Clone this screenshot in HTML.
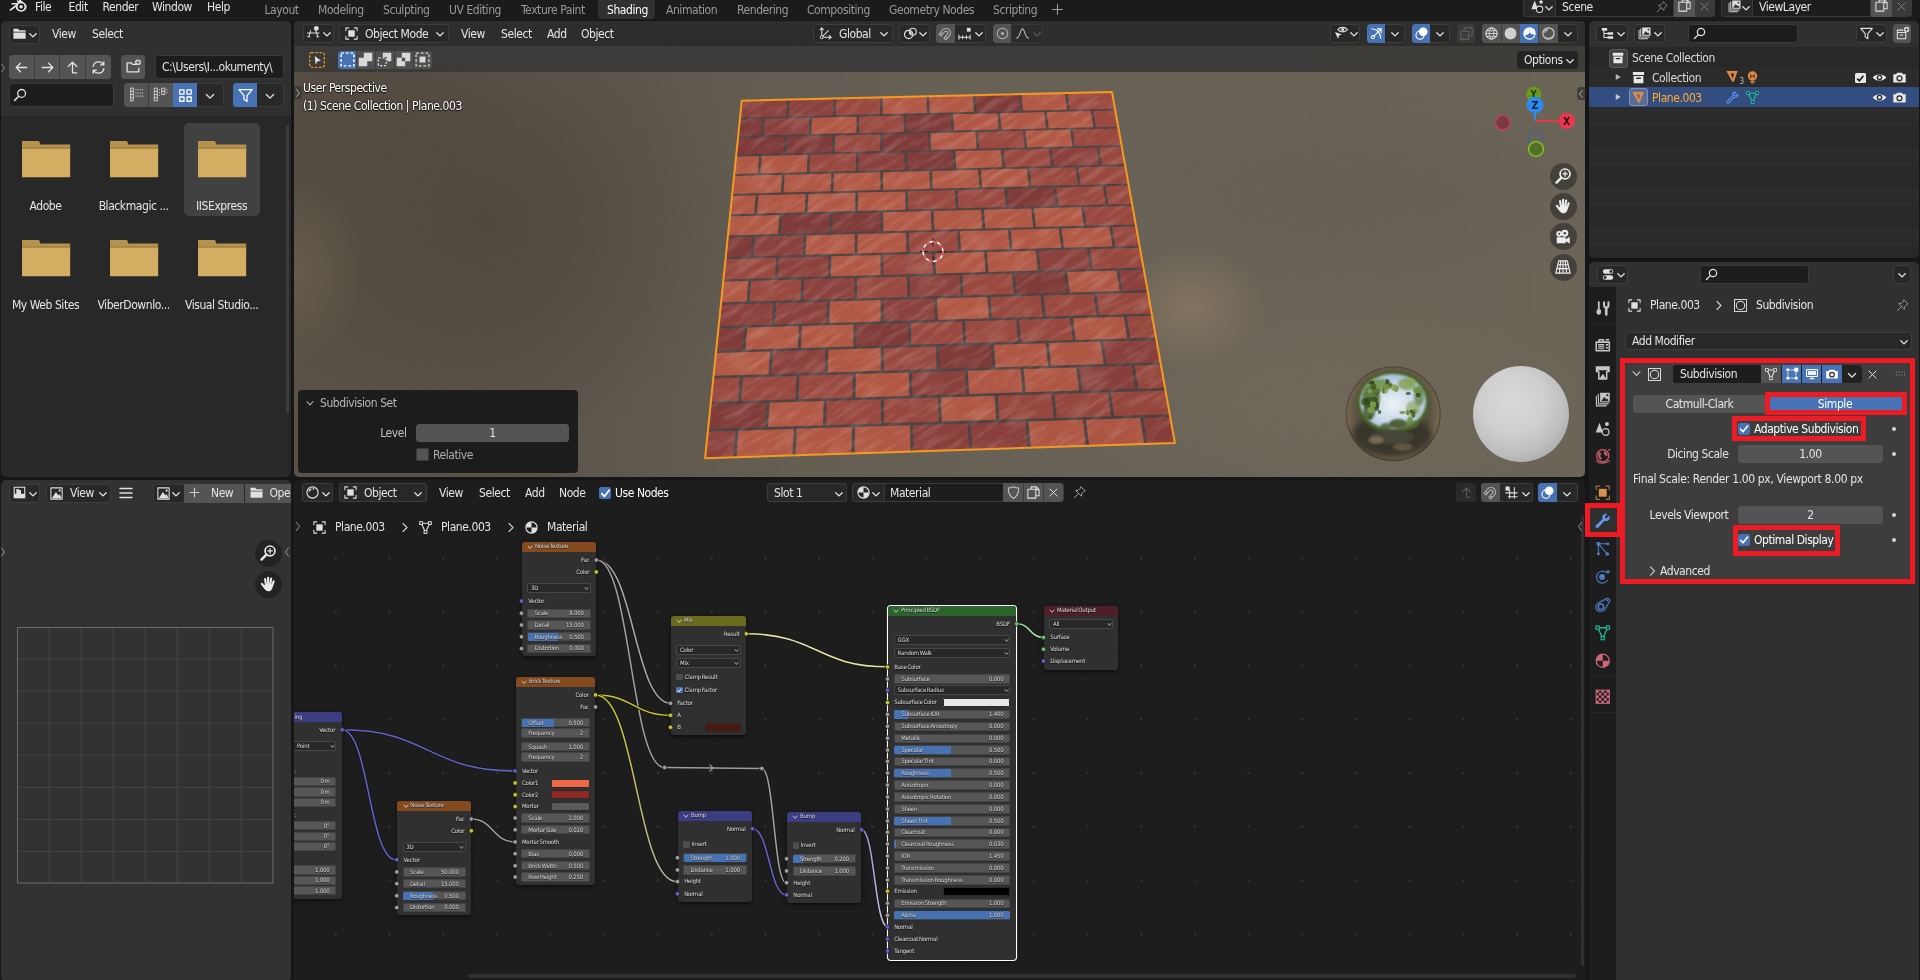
<!DOCTYPE html>
<html lang="en"><head><meta charset="utf-8"><title>Blender</title><style>
html,body{margin:0;padding:0;background:#161616;overflow:hidden}
body{width:1920px;height:980px;position:relative;font-family:"DejaVu Sans Condensed","DejaVu Sans","Liberation Sans",sans-serif;font-size:12px;color:#e4e4e4}
div{position:absolute;box-sizing:border-box}
.t{position:absolute;white-space:nowrap}
svg{overflow:visible}
</style></head><body>
<div id="root" style="left:0;top:0;width:1920px;height:980px;will-change:transform">
<div style="left:0.00px;top:0.00px;width:1920.00px;height:20.00px;background:#1b1b1b;"></div><svg style="position:absolute;left:7.50px;top:-4.30px;" width="19" height="19" viewBox="0 0 16 16"><path d="M8.9 2.2 L14.6 6.6 C16.2 8 16 10.6 14.4 12 C12.6 13.6 9.6 13.6 7.8 12 C6.9 11.2 6.5 10.2 6.6 9.2 L2.6 12.2 C1.8 12.8 0.8 11.8 1.7 11.1 L6.9 7.2 L3.6 7.2 C2.6 7.2 2.6 5.8 3.6 5.8 L8.6 5.8 L7.6 4.9 C6.8 4.2 7.9 3.2 8.6 3.8 L9.4 4.4 Z" fill="#e8e8e8" /><circle cx="11" cy="9.1" r="2.9" fill="#1b1b1b"/><circle cx="11" cy="9.1" r="1.5" fill="#e8e8e8"/></svg><div class="t" style="top:-1.00px;line-height:16.0px;font-size:12px;letter-spacing:-0.430px;color:#e6e6e6;white-space:nowrap;left:35.00px;">File</div><div class="t" style="top:-1.00px;line-height:16.0px;font-size:12px;letter-spacing:-0.430px;color:#e6e6e6;white-space:nowrap;left:68.50px;">Edit</div><div class="t" style="top:-1.00px;line-height:16.0px;font-size:12px;letter-spacing:-0.430px;color:#e6e6e6;white-space:nowrap;left:102.50px;">Render</div><div class="t" style="top:-1.00px;line-height:16.0px;font-size:12px;letter-spacing:-0.430px;color:#e6e6e6;white-space:nowrap;left:152.00px;">Window</div><div class="t" style="top:-1.00px;line-height:16.0px;font-size:12px;letter-spacing:-0.430px;color:#e6e6e6;white-space:nowrap;left:207.00px;">Help</div><div style="left:598.00px;top:-4.00px;width:57.00px;height:23.00px;background:#303030;border-radius:4px;"></div><div class="t" style="top:2.00px;line-height:16.0px;font-size:12px;letter-spacing:-0.430px;color:#999999;white-space:nowrap;left:264.50px;">Layout</div><div class="t" style="top:2.00px;line-height:16.0px;font-size:12px;letter-spacing:-0.430px;color:#999999;white-space:nowrap;left:318.00px;">Modeling</div><div class="t" style="top:2.00px;line-height:16.0px;font-size:12px;letter-spacing:-0.430px;color:#999999;white-space:nowrap;left:383.00px;">Sculpting</div><div class="t" style="top:2.00px;line-height:16.0px;font-size:12px;letter-spacing:-0.430px;color:#999999;white-space:nowrap;left:449.00px;">UV Editing</div><div class="t" style="top:2.00px;line-height:16.0px;font-size:12px;letter-spacing:-0.430px;color:#999999;white-space:nowrap;left:521.00px;">Texture Paint</div><div class="t" style="top:2.00px;line-height:16.0px;font-size:12px;letter-spacing:-0.430px;color:#ffffff;white-space:nowrap;left:607.00px;">Shading</div><div class="t" style="top:2.00px;line-height:16.0px;font-size:12px;letter-spacing:-0.430px;color:#999999;white-space:nowrap;left:666.00px;">Animation</div><div class="t" style="top:2.00px;line-height:16.0px;font-size:12px;letter-spacing:-0.430px;color:#999999;white-space:nowrap;left:737.00px;">Rendering</div><div class="t" style="top:2.00px;line-height:16.0px;font-size:12px;letter-spacing:-0.430px;color:#999999;white-space:nowrap;left:807.00px;">Compositing</div><div class="t" style="top:2.00px;line-height:16.0px;font-size:12px;letter-spacing:-0.430px;color:#999999;white-space:nowrap;left:889.00px;">Geometry Nodes</div><div class="t" style="top:2.00px;line-height:16.0px;font-size:12px;letter-spacing:-0.430px;color:#999999;white-space:nowrap;left:993.00px;">Scripting</div><svg style="position:absolute;left:1051.00px;top:3.00px;" width="13" height="13" viewBox="0 0 13 13"><path d="M6.5 1.5 V11.5 M1.5 6.5 H11.5" fill="none" stroke="#a0a0a0" stroke-width="1.1" stroke-linecap="round" stroke-linejoin="round" /></svg><div style="left:1523.00px;top:-3.00px;width:191.50px;height:19.50px;background:#282828;border-radius:4px;box-shadow:inset 0 0 0 1px #3a3a3a;"></div><div style="left:1555.00px;top:-3.00px;width:119.00px;height:19.50px;background:#1d1d1d;box-shadow:inset 0 0 0 1px #3a3a3a;"></div><div style="left:1674.00px;top:-3.00px;width:20.50px;height:19.50px;background:#545454;"></div><div style="left:1694.50px;top:-3.00px;width:20.00px;height:19.50px;background:#3a3a3a;border-radius:0 4px 4px 0;"></div><svg style="position:absolute;left:1529.50px;top:-1.30px;" width="15" height="15" viewBox="0 0 16 16"><path d="M5 1.6 L8.6 10.8 H1.4 Z" fill="#dddddd" /><circle cx="10.2" cy="11" r="3.4" fill="#1b1b1b" stroke="#dddddd" stroke-width="1.1"/><circle cx="11.8" cy="3.2" r="1.9" fill="#dddddd"/></svg><svg style="position:absolute;left:1543.50px;top:3.00px;" width="10" height="10" viewBox="0 0 10 10"><path d="M1.7999999999999998 3.6999999999999997 L5 6.8999999999999995 L8.2 3.6999999999999997" fill="none" stroke="#e4e4e4" stroke-width="1.3" stroke-linecap="round" stroke-linejoin="round"/></svg><div class="t" style="top:-1.00px;line-height:16.0px;font-size:12px;letter-spacing:-0.430px;color:#e4e4e4;white-space:nowrap;left:1562.00px;">Scene</div><svg style="position:absolute;left:1655.00px;top:-0.40px;" width="14" height="14" viewBox="0 0 16 16"><path d="M9.6 2 L14 6.4 L12.6 7 L10.4 9.2 L10 12 L4 6 L6.8 5.6 L9 3.4 Z M7 9 L2.4 13.6" fill="none" stroke="#8a8a8a" stroke-width="1" stroke-linecap="round" stroke-linejoin="round" /></svg><svg style="position:absolute;left:1676.50px;top:-1.90px;" width="15" height="15" viewBox="0 0 16 16"><path d="M5.6 4.6 V2 H11 L14 5 V11.4 H10.4 M11 2 V5 H14 M2 4.6 H10.4 V14 H2 Z" fill="none" stroke="#dddddd" stroke-width="1.1" stroke-linecap="round" stroke-linejoin="round" /></svg><svg style="position:absolute;left:1698.00px;top:0.10px;" width="13" height="13" viewBox="0 0 16 16"><path d="M3.6 3.6 L12.4 12.4 M12.4 3.6 L3.6 12.4" fill="none" stroke="#808080" stroke-width="1.2" stroke-linecap="round" stroke-linejoin="round" /></svg><div style="left:1720.50px;top:-3.00px;width:191.00px;height:19.50px;background:#282828;border-radius:4px;box-shadow:inset 0 0 0 1px #3a3a3a;"></div><div style="left:1752.00px;top:-3.00px;width:119.00px;height:19.50px;background:#1d1d1d;box-shadow:inset 0 0 0 1px #3a3a3a;"></div><div style="left:1871.00px;top:-3.00px;width:20.50px;height:19.50px;background:#545454;"></div><div style="left:1891.50px;top:-3.00px;width:20.00px;height:19.50px;background:#3a3a3a;border-radius:0 4px 4px 0;"></div><svg style="position:absolute;left:1726.50px;top:-1.30px;" width="15" height="15" viewBox="0 0 16 16"><path d="M2.2 4.6 V13.6 H11.2 M4 3 V11.8 H13" fill="none" stroke="#dddddd" stroke-width="1" stroke-linecap="round" stroke-linejoin="round" /><path d="M5.6 1.6 h8.8 v8.8 h-8.8z" fill="#dddddd" /><path d="M6.6 9.4 L9.4 5.2 L11 7.6 L11.8 6.6 L13.6 9.4Z" fill="#282828" /><circle cx="12.2" cy="3.8" r="1" fill="#282828"/></svg><svg style="position:absolute;left:1740.50px;top:3.00px;" width="10" height="10" viewBox="0 0 10 10"><path d="M1.7999999999999998 3.6999999999999997 L5 6.8999999999999995 L8.2 3.6999999999999997" fill="none" stroke="#e4e4e4" stroke-width="1.3" stroke-linecap="round" stroke-linejoin="round"/></svg><div class="t" style="top:-1.00px;line-height:16.0px;font-size:12px;letter-spacing:-0.430px;color:#e4e4e4;white-space:nowrap;left:1759.00px;">ViewLayer</div><svg style="position:absolute;left:1873.50px;top:-1.90px;" width="15" height="15" viewBox="0 0 16 16"><path d="M5.6 4.6 V2 H11 L14 5 V11.4 H10.4 M11 2 V5 H14 M2 4.6 H10.4 V14 H2 Z" fill="none" stroke="#dddddd" stroke-width="1.1" stroke-linecap="round" stroke-linejoin="round" /></svg><svg style="position:absolute;left:1895.00px;top:0.10px;" width="13" height="13" viewBox="0 0 16 16"><path d="M3.6 3.6 L12.4 12.4 M12.4 3.6 L3.6 12.4" fill="none" stroke="#808080" stroke-width="1.2" stroke-linecap="round" stroke-linejoin="round" /></svg>
<div style="left:1.00px;top:21.00px;width:290.00px;height:456.00px;background:#282828;border-radius:5px;"></div><div style="left:1.00px;top:21.00px;width:290.00px;height:95.00px;background:#303030;border-radius:5px 5px 0 0;"></div><div style="left:8.50px;top:24.50px;width:31.00px;height:19.00px;background:#282828;border-radius:3.5px;box-shadow:inset 0 0 0 1px #3d3d3d;"></div><svg style="position:absolute;left:12.00px;top:26.10px;" width="15" height="15" viewBox="0 0 16 16"><path d="M1.5 3 h5 l1.2 1.6 h6.8 v1.4 h-13 z M1.5 7 h13 v6.5 h-13 z" fill="#e0e0e0" /></svg><svg style="position:absolute;left:28.00px;top:29.50px;" width="10" height="10" viewBox="0 0 10 10"><path d="M1.7999999999999998 3.6999999999999997 L5 6.8999999999999995 L8.2 3.6999999999999997" fill="none" stroke="#e4e4e4" stroke-width="1.3" stroke-linecap="round" stroke-linejoin="round"/></svg><div class="t" style="top:26.10px;line-height:16.0px;font-size:12px;letter-spacing:-0.430px;color:#e4e4e4;white-space:nowrap;left:52.00px;">View</div><div class="t" style="top:26.10px;line-height:16.0px;font-size:12px;letter-spacing:-0.430px;color:#e4e4e4;white-space:nowrap;left:92.00px;">Select</div><div style="left:8.70px;top:54.70px;width:102.40px;height:24.40px;background:#545454;border-radius:3.5px;"></div><svg style="position:absolute;left:13.00px;top:58.50px;" width="17" height="17" viewBox="0 0 16 16"><path d="M13 8 H3.2 M7 4 L3 8 L7 12" fill="none" stroke="#e4e4e4" stroke-width="1.2" stroke-linecap="round" stroke-linejoin="round" /></svg><svg style="position:absolute;left:38.60px;top:58.50px;" width="17" height="17" viewBox="0 0 16 16"><path d="M3 8 H12.8 M9 4 L13 8 L9 12" fill="none" stroke="#e4e4e4" stroke-width="1.2" stroke-linecap="round" stroke-linejoin="round" /></svg><div style="left:33.80px;top:54.70px;width:1.00px;height:24.40px;background:#3d3d3d;"></div><svg style="position:absolute;left:64.20px;top:58.50px;" width="17" height="17" viewBox="0 0 16 16"><path d="M8 13 V3.2 M4 7 L8 3 L12 7 M8 13 H12" fill="none" stroke="#e4e4e4" stroke-width="1.2" stroke-linecap="round" stroke-linejoin="round" /></svg><div style="left:59.40px;top:54.70px;width:1.00px;height:24.40px;background:#3d3d3d;"></div><svg style="position:absolute;left:89.80px;top:58.50px;" width="17" height="17" viewBox="0 0 16 16"><path d="M3 7 A5.2 5.2 0 0 1 12.6 5.2 M13 2.6 V5.6 H10 M13 9 A5.2 5.2 0 0 1 3.4 10.8 M3 13.4 V10.4 H6" fill="none" stroke="#e4e4e4" stroke-width="1.2" stroke-linecap="round" stroke-linejoin="round" /></svg><div style="left:85.00px;top:54.70px;width:1.00px;height:24.40px;background:#3d3d3d;"></div><div style="left:120.90px;top:54.70px;width:24.20px;height:24.40px;background:#545454;border-radius:3.5px;"></div><svg style="position:absolute;left:124.50px;top:58.10px;" width="17" height="17" viewBox="0 0 16 16"><path d="M2 13 V4.5 H6 L7 6 H10.5 M2 13 H13 V9.5" fill="none" stroke="#e4e4e4" stroke-width="1.2" stroke-linecap="round" stroke-linejoin="round" /><circle cx="12.2" cy="4" r="2.7" fill="#e4e4e4"/><path d="M12.2 2.6 V5.4 M10.8 4 H13.6" fill="none" stroke="#545454" stroke-width="1" stroke-linecap="round" stroke-linejoin="round" /></svg><div style="left:154.50px;top:54.70px;width:129.20px;height:24.40px;background:#1d1d1d;border-radius:3.5px;box-shadow:inset 0 0 0 1px #3a3a3a;"></div><div class="t" style="top:59.30px;line-height:16.0px;font-size:12px;letter-spacing:-0.430px;color:#e4e4e4;white-space:nowrap;left:162.00px;">C:\Users\I...okumenty\</div><div style="left:8.70px;top:82.80px;width:105.80px;height:24.40px;background:#1d1d1d;border-radius:3.5px;box-shadow:inset 0 0 0 1px #3a3a3a;"></div><svg style="position:absolute;left:12.00px;top:87.00px;" width="16" height="16" viewBox="0 0 16 16"><circle cx="9.6" cy="6.4" r="3.9" fill="none" stroke="#e0e0e0" stroke-width="1.3"/><path d="M6.8 9.2 L2.6 13.4" fill="none" stroke="#e0e0e0" stroke-width="1.5" stroke-linecap="round" stroke-linejoin="round" /></svg><div style="left:123.70px;top:82.80px;width:100.00px;height:24.40px;background:#282828;border-radius:3.5px;box-shadow:inset 0 0 0 1px #3a3a3a;"></div><div style="left:123.70px;top:82.80px;width:49.00px;height:24.40px;background:#545454;border-radius:3.5px 0 0 3.5px;"></div><div style="left:148.00px;top:82.80px;width:1.00px;height:24.40px;background:#3d3d3d;"></div><div style="left:172.70px;top:82.80px;width:24.50px;height:24.40px;background:#4772b3;"></div><svg style="position:absolute;left:127.50px;top:86.10px;" width="17" height="17" viewBox="0 0 16 16"><path d="M2.5 2 V14 M2.5 2 H5 V14 H2.5 M2.5 5 H5 M2.5 8 H5 M2.5 11 H5" fill="none" stroke="#d0d0d0" stroke-width="0.9" stroke-linecap="round" stroke-linejoin="round" /><path d="M7 3.5 H14.5" stroke="#d0d0d0" stroke-width="1" stroke-dasharray="1 1"/><path d="M7 6.5 H14.5" stroke="#d0d0d0" stroke-width="1" stroke-dasharray="1 1"/><path d="M7 9.5 H14.5" stroke="#d0d0d0" stroke-width="1" stroke-dasharray="1 1"/></svg><svg style="position:absolute;left:152.00px;top:86.10px;" width="17" height="17" viewBox="0 0 16 16"><path d="M2.5 2 H5 V14 H2.5 Z M2.5 5 H5 M2.5 8 H5 M2.5 11 H5" fill="none" stroke="#d0d0d0" stroke-width="0.9" stroke-linecap="round" stroke-linejoin="round" /><path d="M9.5 2 H12 V8 H9.5 Z M9.5 5 H12" fill="none" stroke="#d0d0d0" stroke-width="0.9" stroke-linecap="round" stroke-linejoin="round" /><path d="M7 3 V10 M14 3 V7" stroke="#d0d0d0" stroke-width="1" stroke-dasharray="1 1.6"/></svg><svg style="position:absolute;left:176.50px;top:86.50px;" width="17" height="17" viewBox="0 0 16 16"><path d="M2.6 2.6 h4 v4 h-4 z M9.4 2.6 h4 v4 h-4 z M2.6 9.4 h4 v4 h-4 z M9.4 9.4 h4 v4 h-4 z" fill="none" stroke="#ffffff" stroke-width="1.2" stroke-linecap="round" stroke-linejoin="round" /></svg><svg style="position:absolute;left:205.30px;top:91.00px;" width="10" height="10" viewBox="0 0 10 10"><path d="M1.4 3.5 L5 7.1 L8.6 3.5" fill="none" stroke="#e4e4e4" stroke-width="1.3" stroke-linecap="round" stroke-linejoin="round"/></svg><div style="left:232.80px;top:82.80px;width:50.90px;height:24.40px;background:#282828;border-radius:3.5px;box-shadow:inset 0 0 0 1px #3a3a3a;"></div><div style="left:232.80px;top:82.80px;width:24.40px;height:24.40px;background:#4772b3;border-radius:3.5px 0 0 3.5px;"></div><svg style="position:absolute;left:236.50px;top:86.50px;" width="17" height="17" viewBox="0 0 16 16"><path d="M1.8 2.5 H14.2 L9.4 8.2 V13.6 L6.6 11.6 V8.2 Z" fill="none" stroke="#ffffff" stroke-width="1.2" stroke-linecap="round" stroke-linejoin="round" /></svg><svg style="position:absolute;left:265.30px;top:91.00px;" width="10" height="10" viewBox="0 0 10 10"><path d="M1.4 3.5 L5 7.1 L8.6 3.5" fill="none" stroke="#e4e4e4" stroke-width="1.3" stroke-linecap="round" stroke-linejoin="round"/></svg><svg style="position:absolute;left:0.00px;top:62.00px;" width="6" height="12" viewBox="0 0 6 12"><path d="M1.5 2 L4.5 6 L1.5 10" fill="none" stroke="#8a8a8a" stroke-width="1" stroke-linecap="round" stroke-linejoin="round" /></svg><div style="left:183.80px;top:122.90px;width:76.20px;height:93.40px;background:#414141;border-radius:5px;"></div><div style="left:286.20px;top:125.00px;width:3.00px;height:288.00px;background:#3c3c3c;border-radius:1.5px;"></div><svg style="position:absolute;left:21.90px;top:140.70px;" width="48.2" height="36.2" viewBox="0 0 48.2 36.2"><path d="M0 0 H17 L18.5 3.6 H48.2 V11 H0 Z" fill="#b5934d"/><path d="M0 7.6 H48.2 V36.2 H0 Z" fill="#d3ad62"/><path d="M0 7 H48.2" stroke="#8e733c" stroke-width="0.9"/></svg><div class="t" style="top:198.00px;line-height:16.0px;font-size:12px;letter-spacing:-0.430px;color:#e6e6e6;white-space:nowrap;left:-4.50px;width:100px;text-align:center;">Adobe</div><svg style="position:absolute;left:109.95px;top:140.70px;" width="48.2" height="36.2" viewBox="0 0 48.2 36.2"><path d="M0 0 H17 L18.5 3.6 H48.2 V11 H0 Z" fill="#b5934d"/><path d="M0 7.6 H48.2 V36.2 H0 Z" fill="#d3ad62"/><path d="M0 7 H48.2" stroke="#8e733c" stroke-width="0.9"/></svg><div class="t" style="top:198.00px;line-height:16.0px;font-size:12px;letter-spacing:-0.430px;color:#e6e6e6;white-space:nowrap;left:83.55px;width:100px;text-align:center;">Blackmagic ...</div><svg style="position:absolute;left:198.00px;top:140.70px;" width="48.2" height="36.2" viewBox="0 0 48.2 36.2"><path d="M0 0 H17 L18.5 3.6 H48.2 V11 H0 Z" fill="#b5934d"/><path d="M0 7.6 H48.2 V36.2 H0 Z" fill="#d3ad62"/><path d="M0 7 H48.2" stroke="#8e733c" stroke-width="0.9"/></svg><div class="t" style="top:198.00px;line-height:16.0px;font-size:12px;letter-spacing:-0.430px;color:#e6e6e6;white-space:nowrap;left:171.60px;width:100px;text-align:center;">IISExpress</div><svg style="position:absolute;left:21.90px;top:239.70px;" width="48.2" height="36.2" viewBox="0 0 48.2 36.2"><path d="M0 0 H17 L18.5 3.6 H48.2 V11 H0 Z" fill="#b5934d"/><path d="M0 7.6 H48.2 V36.2 H0 Z" fill="#d3ad62"/><path d="M0 7 H48.2" stroke="#8e733c" stroke-width="0.9"/></svg><div class="t" style="top:297.00px;line-height:16.0px;font-size:12px;letter-spacing:-0.430px;color:#e6e6e6;white-space:nowrap;left:-4.50px;width:100px;text-align:center;">My Web Sites</div><svg style="position:absolute;left:109.95px;top:239.70px;" width="48.2" height="36.2" viewBox="0 0 48.2 36.2"><path d="M0 0 H17 L18.5 3.6 H48.2 V11 H0 Z" fill="#b5934d"/><path d="M0 7.6 H48.2 V36.2 H0 Z" fill="#d3ad62"/><path d="M0 7 H48.2" stroke="#8e733c" stroke-width="0.9"/></svg><div class="t" style="top:297.00px;line-height:16.0px;font-size:12px;letter-spacing:-0.430px;color:#e6e6e6;white-space:nowrap;left:83.55px;width:100px;text-align:center;">ViberDownlo...</div><svg style="position:absolute;left:198.00px;top:239.70px;" width="48.2" height="36.2" viewBox="0 0 48.2 36.2"><path d="M0 0 H17 L18.5 3.6 H48.2 V11 H0 Z" fill="#b5934d"/><path d="M0 7.6 H48.2 V36.2 H0 Z" fill="#d3ad62"/><path d="M0 7 H48.2" stroke="#8e733c" stroke-width="0.9"/></svg><div class="t" style="top:297.00px;line-height:16.0px;font-size:12px;letter-spacing:-0.430px;color:#e6e6e6;white-space:nowrap;left:171.60px;width:100px;text-align:center;">Visual Studio...</div>
<div style="left:1.00px;top:480.20px;width:290.00px;height:500.60px;background:#323232;border-radius:5px;"></div><div style="left:8.50px;top:483.50px;width:31.00px;height:19.00px;background:#282828;border-radius:3.5px;box-shadow:inset 0 0 0 1px #3d3d3d;"></div><svg style="position:absolute;left:12.00px;top:485.10px;" width="15" height="15" viewBox="0 0 16 16"><path d="M1.8 1.8 h12.4 v12.4 h-12.4z" fill="#e0e0e0" /><path d="M3 3 h10 v6.4 h-3.4 v-4 h-3.2 v4 h-3.4z" fill="#282828" /><path d="M4.6 4.4 h3 v6 h-3z" fill="#e0e0e0" /></svg><svg style="position:absolute;left:28.00px;top:489.00px;" width="10" height="10" viewBox="0 0 10 10"><path d="M1.7999999999999998 3.6999999999999997 L5 6.8999999999999995 L8.2 3.6999999999999997" fill="none" stroke="#e4e4e4" stroke-width="1.3" stroke-linecap="round" stroke-linejoin="round"/></svg><div style="left:45.50px;top:483.50px;width:65.00px;height:19.00px;background:#282828;border-radius:3.5px;box-shadow:inset 0 0 0 1px #3d3d3d;"></div><svg style="position:absolute;left:49.00px;top:485.50px;" width="15" height="15" viewBox="0 0 16 16"><path d="M2 2 H14 V14 H2 Z" fill="none" stroke="#e0e0e0" stroke-width="1.1" stroke-linecap="round" stroke-linejoin="round" /><path d="M3 13 L7.4 6.4 L10 10 L11.2 8.6 L13.4 13Z" fill="#e0e0e0" /><circle cx="11.4" cy="4.8" r="1.2" fill="#e0e0e0"/></svg><div class="t" style="top:485.20px;line-height:16.0px;font-size:12px;letter-spacing:-0.430px;color:#e4e4e4;white-space:nowrap;left:70.00px;">View</div><svg style="position:absolute;left:98.00px;top:489.00px;" width="10" height="10" viewBox="0 0 10 10"><path d="M1.7999999999999998 3.6999999999999997 L5 6.8999999999999995 L8.2 3.6999999999999997" fill="none" stroke="#e4e4e4" stroke-width="1.3" stroke-linecap="round" stroke-linejoin="round"/></svg><svg style="position:absolute;left:118.00px;top:485.00px;" width="16" height="16" viewBox="0 0 16 16"><path d="M2 3.6 H14 M2 8 H14 M2 12.4 H14" fill="none" stroke="#e0e0e0" stroke-width="1.5" stroke-linecap="round" stroke-linejoin="round" /></svg><div style="position:absolute;left:0;top:480px;width:291px;height:30px;overflow:hidden"><div style="left:152.50px;top:3.50px;width:150.00px;height:19.00px;background:#282828;border-radius:3.5px;box-shadow:inset 0 0 0 1px #3a3a3a;"></div><div style="left:184.00px;top:3.50px;width:59.50px;height:19.00px;background:#545454;"></div><div style="left:244.50px;top:3.50px;width:60.00px;height:19.00px;background:#545454;"></div><svg style="position:absolute;left:155.50px;top:5.50px;" width="15" height="15" viewBox="0 0 16 16"><path d="M2 2 H14 V14 H2 Z" fill="none" stroke="#e0e0e0" stroke-width="1.1" stroke-linecap="round" stroke-linejoin="round" /><path d="M3 13 L7.4 6.4 L10 10 L11.2 8.6 L13.4 13Z" fill="#e0e0e0" /><circle cx="11.4" cy="4.8" r="1.2" fill="#e0e0e0"/></svg><svg style="position:absolute;left:171.00px;top:9.00px;" width="10" height="10" viewBox="0 0 10 10"><path d="M1.7999999999999998 3.6999999999999997 L5 6.8999999999999995 L8.2 3.6999999999999997" fill="none" stroke="#e4e4e4" stroke-width="1.3" stroke-linecap="round" stroke-linejoin="round"/></svg><svg style="position:absolute;left:188.00px;top:6.30px;" width="13" height="13" viewBox="0 0 16 16"><path d="M8 2.6 V13.4 M2.6 8 H13.4" fill="none" stroke="#e0e0e0" stroke-width="1.1" stroke-linecap="round" stroke-linejoin="round" /></svg><div class="t" style="top:5.20px;line-height:16.0px;font-size:12px;letter-spacing:-0.430px;color:#e4e4e4;white-space:nowrap;left:211.00px;">New</div><svg style="position:absolute;left:248.50px;top:5.30px;" width="15" height="15" viewBox="0 0 16 16"><path d="M1.6 2.8 h5.2 l1.2 1.6 h6.4 v1.6 h-12.8z M1.6 6.8 h12.8 v6.8 h-12.8z" fill="#e0e0e0" /></svg><div class="t" style="top:5.20px;line-height:16.0px;font-size:12px;letter-spacing:-0.430px;color:#e4e4e4;white-space:nowrap;left:269.50px;">Open</div></div><div style="left:254.50px;top:539.50px;width:27.00px;height:27.00px;background:#232323;border-radius:14px;"></div><svg style="position:absolute;left:259.00px;top:544.00px;" width="18" height="18" viewBox="0 0 16 16"><circle cx="9.8" cy="6.2" r="4.4" fill="none" stroke="#e8e8e8" stroke-width="1.5"/><path d="M6.6 9.4 L2.2 13.8" fill="none" stroke="#e8e8e8" stroke-width="2.2" stroke-linecap="round" stroke-linejoin="round" /><path d="M9.8 4.2 V8.2 M7.8 6.2 H11.8" fill="none" stroke="#e8e8e8" stroke-width="1.1" stroke-linecap="round" stroke-linejoin="round" /></svg><div style="left:254.50px;top:570.50px;width:27.00px;height:27.00px;background:#232323;border-radius:14px;"></div><svg style="position:absolute;left:259.00px;top:575.00px;" width="18" height="18" viewBox="0 0 16 16"><path d="M5.4 3.6 L6.3 9 M8.1 2.4 L8.1 9 M10.8 3.2 L9.9 9 M13 5.6 L11.5 10 M2.6 7.8 L5.6 11.8" fill="none" stroke="#e8e8e8" stroke-width="1.9" stroke-linecap="round" stroke-linejoin="round" /><path d="M4.8 8.6 H12.2 C12.4 11.6 11.2 14.4 8.4 14.4 C6.2 14.4 5 12.6 4.4 10.6 Z" fill="#e8e8e8" /></svg><svg style="position:absolute;left:0.00px;top:546.00px;" width="6" height="12" viewBox="0 0 6 12"><path d="M1.5 2 L4.5 6 L1.5 10" fill="none" stroke="#9a9a9a" stroke-width="1" stroke-linecap="round" stroke-linejoin="round" /></svg><svg style="position:absolute;left:284.00px;top:546.00px;" width="6" height="12" viewBox="0 0 6 12"><path d="M4.5 2 L1.5 6 L4.5 10" fill="none" stroke="#9a9a9a" stroke-width="1" stroke-linecap="round" stroke-linejoin="round" /></svg><svg style="position:absolute;left:17.00px;top:626.80px;" width="257" height="257" viewBox="0 0 257 257"><path d="M32.1 0 V256.5 M0 32.1 H256.5" stroke="#454545" stroke-width="1"/><path d="M64.1 0 V256.5 M0 64.1 H256.5" stroke="#454545" stroke-width="1"/><path d="M96.2 0 V256.5 M0 96.2 H256.5" stroke="#454545" stroke-width="1"/><path d="M128.2 0 V256.5 M0 128.2 H256.5" stroke="#454545" stroke-width="1"/><path d="M160.3 0 V256.5 M0 160.3 H256.5" stroke="#454545" stroke-width="1"/><path d="M192.4 0 V256.5 M0 192.4 H256.5" stroke="#454545" stroke-width="1"/><path d="M224.4 0 V256.5 M0 224.4 H256.5" stroke="#454545" stroke-width="1"/><rect x="0.5" y="0.5" width="255.5" height="255.5" fill="none" stroke="#6a6a6a" stroke-width="1"/></svg>
<div style="left:294px;top:20.5px;width:1291px;height:456.5px;border-radius:5px;overflow:hidden;background:radial-gradient(ellipse 75px 62px at 896px 286px, rgba(140,122,98,0.75), rgba(140,122,98,0) 100%),radial-gradient(ellipse 70px 90px at 0px 250px, rgba(108,97,78,0.7), rgba(108,97,78,0) 100%),radial-gradient(ellipse 280px 230px at 190px 200px, rgba(76,68,59,0.75), rgba(76,68,59,0) 100%),radial-gradient(ellipse 170px 110px at 60px 90px, rgba(80,73,63,0.7), rgba(80,73,63,0) 100%),radial-gradient(ellipse 300px 120px at 330px 30px, rgba(92,88,80,0.55), rgba(92,88,80,0) 100%),radial-gradient(ellipse 260px 90px at 1100px 170px, rgba(98,92,86,0.5), rgba(98,92,86,0) 100%),radial-gradient(ellipse 300px 140px at 1000px 380px, rgba(120,110,94,0.45), rgba(120,110,94,0) 100%),linear-gradient(90deg, #5a5247 0%, #5b544a 18%, #645d52 36%, #676156 55%, #686257 75%, #6b6558 100%)"><div style="left:0.00px;top:0.00px;width:1291.00px;height:25.50px;background:rgba(44,44,44,0.96);"></div><div style="left:0.00px;top:25.50px;width:1291.00px;height:25.60px;background:rgba(58,57,55,0.9);"></div></div><svg style="position:absolute;left:0;top:0" width="1920" height="980" viewBox="0 0 1920 980"><defs><linearGradient id="sheen" x1="0" y1="0" x2="1" y2="1"><stop offset="0" stop-color="#ffffff" stop-opacity="0"/><stop offset="0.45" stop-color="#ffb090" stop-opacity="0.02"/><stop offset="1" stop-color="#300000" stop-opacity="0.05"/></linearGradient></defs><polygon points="741.8,100.7 1112.0,92.0 1174.9,443.0 705.1,458.2" fill="#494243"/><polygon points="741.8,100.7 787.2,99.6 786.0,116.5 740.1,117.6" fill="#893f3b"/><polygon points="789.7,99.6 833.7,98.5 833.2,115.4 788.6,116.5" fill="#893f3b"/><polygon points="836.3,98.5 880.2,97.4 880.2,114.3 835.7,115.3" fill="#97473e"/><polygon points="882.7,97.4 926.5,96.4 927.1,113.1 882.8,114.2" fill="#b05744"/><polygon points="929.0,96.3 972.7,95.3 973.9,112.0 929.7,113.1" fill="#b05744"/><polygon points="975.2,95.2 1018.8,94.2 1020.6,110.9 976.5,112.0" fill="#7d3937"/><polygon points="1021.3,94.1 1064.8,93.1 1067.2,109.8 1023.2,110.8" fill="#b05744"/><polygon points="1067.3,93.0 1112.0,92.0 1115.0,108.7 1069.8,109.7" fill="#97473e"/><polygon points="739.9,119.4 762.3,118.9 760.8,135.3 738.2,135.9" fill="#7d3937"/><polygon points="764.8,118.8 809.5,117.7 808.7,134.2 763.5,135.3" fill="#893f3b"/><polygon points="812.1,117.7 856.7,116.6 856.4,133.0 811.3,134.1" fill="#b05744"/><polygon points="859.2,116.6 903.7,115.5 904.0,131.9 859.0,133.0" fill="#97473e"/><polygon points="906.3,115.4 950.6,114.4 951.5,130.7 906.6,131.8" fill="#7d3937"/><polygon points="953.2,114.3 997.5,113.2 998.9,129.5 954.1,130.6" fill="#b05744"/><polygon points="1000.0,113.2 1044.2,112.1 1046.2,128.4 1001.5,129.5" fill="#b05744"/><polygon points="1046.7,112.1 1090.8,111.0 1093.4,127.2 1048.8,128.3" fill="#b05744"/><polygon points="1093.3,110.9 1115.3,110.4 1118.2,126.6 1095.9,127.2" fill="#97473e"/><polygon points="738.0,137.7 784.7,136.6 783.5,153.5 736.3,154.7" fill="#7d3937"/><polygon points="787.3,136.5 832.5,135.4 832.0,152.3 786.1,153.4" fill="#7d3937"/><polygon points="835.1,135.4 880.2,134.3 880.3,151.1 834.6,152.2" fill="#97473e"/><polygon points="882.8,134.2 927.9,133.1 928.5,149.9 882.9,151.0" fill="#7d3937"/><polygon points="930.5,133.0 975.4,131.9 976.6,148.7 931.1,149.8" fill="#b05744"/><polygon points="978.0,131.9 1022.8,130.8 1024.6,147.5 979.2,148.7" fill="#97473e"/><polygon points="1025.4,130.7 1070.1,129.6 1072.5,146.3 1027.2,147.5" fill="#b05744"/><polygon points="1072.6,129.6 1118.5,128.4 1121.5,145.1 1075.1,146.3" fill="#97473e"/><polygon points="736.1,156.6 759.1,156.0 757.6,173.4 734.3,174.0" fill="#b05744"/><polygon points="761.7,155.9 807.6,154.8 806.8,172.2 760.3,173.3" fill="#b05744"/><polygon points="810.3,154.7 856.1,153.6 855.8,170.9 809.4,172.1" fill="#97473e"/><polygon points="858.7,153.5 904.4,152.4 904.8,169.7 858.5,170.9" fill="#893f3b"/><polygon points="907.1,152.3 952.7,151.2 953.6,168.5 907.5,169.6" fill="#7d3937"/><polygon points="955.3,151.1 1000.8,150.0 1002.3,167.2 956.3,168.4" fill="#b05744"/><polygon points="1003.4,149.9 1048.8,148.8 1050.9,166.0 1005.0,167.1" fill="#97473e"/><polygon points="1051.4,148.7 1096.7,147.6 1099.4,164.8 1053.6,165.9" fill="#893f3b"/><polygon points="1099.3,147.5 1121.9,147.0 1124.9,164.1 1102.0,164.7" fill="#97473e"/><polygon points="734.1,175.9 782.1,174.7 780.8,192.6 732.2,193.9" fill="#b05744"/><polygon points="784.7,174.7 831.3,173.5 830.7,191.3 783.5,192.5" fill="#b05744"/><polygon points="833.9,173.4 880.3,172.2 880.4,190.0 833.4,191.3" fill="#b05744"/><polygon points="883.0,172.2 929.3,171.0 930.0,188.8 883.1,190.0" fill="#b05744"/><polygon points="932.0,170.9 978.1,169.8 979.4,187.5 932.7,188.7" fill="#b05744"/><polygon points="980.8,169.7 1026.9,168.5 1028.8,186.2 982.1,187.4" fill="#b05744"/><polygon points="1029.5,168.5 1075.5,167.3 1078.0,184.9 1031.4,186.1" fill="#97473e"/><polygon points="1078.1,167.2 1125.3,166.0 1128.4,183.6 1080.7,184.9" fill="#97473e"/><polygon points="732.0,195.9 755.7,195.3 754.1,213.7 730.1,214.3" fill="#b05744"/><polygon points="758.4,195.2 805.7,194.0 804.7,212.3 756.9,213.6" fill="#b05744"/><polygon points="808.4,193.9 855.5,192.7 855.2,211.0 807.5,212.3" fill="#b05744"/><polygon points="858.2,192.6 905.2,191.4 905.6,209.7 858.0,210.9" fill="#b05744"/><polygon points="907.9,191.3 954.8,190.1 955.8,208.4 908.3,209.6" fill="#97473e"/><polygon points="957.5,190.0 1004.3,188.8 1005.9,207.1 958.6,208.3" fill="#97473e"/><polygon points="1007.0,188.8 1053.6,187.6 1055.9,205.7 1008.7,207.0" fill="#7d3937"/><polygon points="1056.3,187.5 1102.9,186.3 1105.8,204.4 1058.6,205.7" fill="#97473e"/><polygon points="1105.5,186.2 1128.8,185.6 1132.0,203.7 1108.5,204.4" fill="#97473e"/><polygon points="729.9,216.4 779.3,215.1 778.0,234.0 728.0,235.4" fill="#b05744"/><polygon points="782.1,215.0 829.9,213.7 829.3,232.6 780.8,233.9" fill="#7d3937"/><polygon points="832.7,213.7 880.4,212.4 880.5,231.3 832.1,232.6" fill="#7d3937"/><polygon points="883.2,212.3 930.8,211.1 931.5,229.9 883.2,231.2" fill="#b05744"/><polygon points="933.5,211.0 981.0,209.8 982.4,228.5 934.3,229.8" fill="#b05744"/><polygon points="983.8,209.7 1031.2,208.4 1033.2,227.2 985.2,228.5" fill="#b05744"/><polygon points="1033.9,208.4 1081.2,207.1 1083.8,225.8 1035.9,227.1" fill="#b05744"/><polygon points="1083.9,207.0 1132.4,205.8 1135.7,224.4 1086.6,225.7" fill="#97473e"/><polygon points="727.8,237.5 752.1,236.8 750.4,256.3 725.8,257.0" fill="#7d3937"/><polygon points="754.9,236.7 803.6,235.4 802.6,254.9 753.3,256.3" fill="#893f3b"/><polygon points="806.4,235.4 854.9,234.1 854.6,253.5 805.4,254.8" fill="#b05744"/><polygon points="857.7,234.0 906.0,232.7 906.4,252.1 857.4,253.4" fill="#b05744"/><polygon points="908.8,232.6 957.1,231.3 958.2,250.7 909.2,252.0" fill="#97473e"/><polygon points="959.9,231.2 1008.0,229.9 1009.7,249.3 961.0,250.6" fill="#b05744"/><polygon points="1010.8,229.9 1058.8,228.6 1061.2,247.8 1012.6,249.2" fill="#b05744"/><polygon points="1061.5,228.5 1109.4,227.2 1112.5,246.4 1064.0,247.8" fill="#b05744"/><polygon points="1112.2,227.1 1136.1,226.5 1139.5,245.7 1115.3,246.4" fill="#97473e"/><polygon points="725.5,259.2 776.4,257.8 775.0,277.9 723.5,279.4" fill="#97473e"/><polygon points="779.2,257.7 828.5,256.4 827.9,276.4 777.9,277.8" fill="#893f3b"/><polygon points="831.3,256.3 880.5,255.0 880.6,275.0 830.7,276.4" fill="#b05744"/><polygon points="883.3,254.9 932.4,253.5 933.1,273.5 883.4,274.9" fill="#97473e"/><polygon points="935.2,253.5 984.1,252.1 985.6,272.0 936.0,273.4" fill="#b05744"/><polygon points="986.9,252.0 1035.7,250.7 1037.9,270.6 988.4,272.0" fill="#b05744"/><polygon points="1038.5,250.6 1087.2,249.3 1090.0,269.1 1040.7,270.5" fill="#893f3b"/><polygon points="1090.0,249.2 1139.9,247.8 1143.5,267.6 1092.9,269.0" fill="#97473e"/><polygon points="723.2,281.6 748.3,280.9 746.6,301.6 721.1,302.4" fill="#b05744"/><polygon points="751.2,280.8 801.3,279.4 800.3,300.1 749.5,301.6" fill="#97473e"/><polygon points="804.2,279.3 854.2,277.9 853.9,298.6 803.2,300.0" fill="#893f3b"/><polygon points="857.1,277.9 906.9,276.5 907.3,297.1 856.8,298.5" fill="#97473e"/><polygon points="909.8,276.4 959.5,275.0 960.6,295.5 910.2,297.0" fill="#893f3b"/><polygon points="962.4,274.9 1011.9,273.5 1013.8,294.0 963.5,295.5" fill="#97473e"/><polygon points="1014.8,273.4 1064.2,272.1 1066.8,292.5 1016.7,293.9" fill="#7d3937"/><polygon points="1067.1,272.0 1116.4,270.6 1119.7,291.0 1069.7,292.4" fill="#b05744"/><polygon points="1119.3,270.5 1143.9,269.8 1147.5,290.2 1122.6,290.9" fill="#893f3b"/><polygon points="720.9,304.7 773.3,303.2 771.8,324.5 718.7,326.1" fill="#893f3b"/><polygon points="776.2,303.1 827.0,301.7 826.3,323.0 774.8,324.5" fill="#893f3b"/><polygon points="829.9,301.6 880.6,300.1 880.7,321.4 829.3,322.9" fill="#b05744"/><polygon points="883.5,300.0 934.1,298.6 934.9,319.8 883.6,321.3" fill="#893f3b"/><polygon points="937.0,298.5 987.4,297.1 988.9,318.2 937.8,319.7" fill="#b05744"/><polygon points="990.3,297.0 1040.6,295.6 1042.8,316.7 991.9,318.1" fill="#97473e"/><polygon points="1043.5,295.5 1093.6,294.0 1096.6,315.1 1045.8,316.6" fill="#97473e"/><polygon points="1096.5,294.0 1147.9,292.5 1151.7,313.5 1099.5,315.0" fill="#97473e"/><polygon points="718.4,328.5 744.3,327.7 742.4,349.8 716.1,350.6" fill="#7d3937"/><polygon points="747.3,327.6 799.0,326.1 797.9,348.1 745.4,349.7" fill="#b05744"/><polygon points="801.9,326.1 853.5,324.6 853.1,346.5 800.9,348.1" fill="#b05744"/><polygon points="856.4,324.5 907.8,323.0 908.3,344.9 856.1,346.4" fill="#7d3937"/><polygon points="910.8,322.9 962.1,321.4 963.3,343.2 911.3,344.8" fill="#97473e"/><polygon points="965.0,321.3 1016.1,319.8 1018.1,341.6 966.2,343.1" fill="#97473e"/><polygon points="1019.1,319.7 1070.0,318.2 1072.8,340.0 1021.1,341.5" fill="#97473e"/><polygon points="1073.0,318.2 1123.8,316.7 1127.3,338.4 1075.7,339.9" fill="#b05744"/><polygon points="1126.7,316.6 1152.1,315.8 1156.0,337.5 1130.3,338.3" fill="#97473e"/><polygon points="715.9,353.0 770.0,351.4 768.4,374.2 713.6,375.8" fill="#b05744"/><polygon points="773.0,351.3 825.4,349.8 824.7,372.5 771.5,374.1" fill="#893f3b"/><polygon points="828.4,349.7 880.7,348.1 880.8,370.8 827.7,372.4" fill="#b05744"/><polygon points="883.7,348.1 935.9,346.5 936.7,369.1 883.8,370.7" fill="#97473e"/><polygon points="938.9,346.4 990.9,344.9 992.5,367.4 939.8,369.0" fill="#7d3937"/><polygon points="993.9,344.8 1045.7,343.2 1048.1,365.7 995.5,367.3" fill="#b05744"/><polygon points="1048.7,343.1 1100.4,341.6 1103.6,364.0 1051.2,365.6" fill="#b05744"/><polygon points="1103.4,341.5 1156.4,339.9 1160.4,362.3 1106.6,363.9" fill="#893f3b"/><polygon points="713.3,378.4 740.0,377.6 738.0,401.1 710.9,401.9" fill="#97473e"/><polygon points="743.1,377.5 796.4,375.9 795.3,399.3 741.1,401.0" fill="#97473e"/><polygon points="799.5,375.8 852.7,374.2 852.4,397.6 798.4,399.2" fill="#97473e"/><polygon points="855.8,374.1 908.8,372.5 909.3,395.8 855.5,397.5" fill="#b05744"/><polygon points="911.9,372.4 964.8,370.8 966.1,394.0 912.4,395.7" fill="#893f3b"/><polygon points="967.8,370.7 1020.6,369.1 1022.7,392.3 969.1,393.9" fill="#b05744"/><polygon points="1023.6,369.0 1076.2,367.4 1079.1,390.5 1025.7,392.2" fill="#b05744"/><polygon points="1079.2,367.3 1131.7,365.7 1135.4,388.8 1082.2,390.4" fill="#893f3b"/><polygon points="1134.7,365.6 1160.9,364.8 1165.0,387.9 1138.5,388.7" fill="#97473e"/><polygon points="710.6,404.6 766.5,402.8 764.8,427.1 708.1,428.9" fill="#7d3937"/><polygon points="769.6,402.8 823.7,401.1 822.9,425.3 768.0,427.0" fill="#b05744"/><polygon points="826.9,401.0 880.8,399.3 880.9,423.4 826.1,425.2" fill="#97473e"/><polygon points="883.9,399.2 937.8,397.5 938.7,421.6 884.0,423.3" fill="#97473e"/><polygon points="940.9,397.4 994.6,395.8 996.3,419.8 941.8,421.5" fill="#b05744"/><polygon points="997.7,395.7 1051.2,394.0 1053.8,418.0 999.4,419.7" fill="#97473e"/><polygon points="1054.3,393.9 1107.7,392.3 1111.1,416.2 1056.9,417.9" fill="#97473e"/><polygon points="1110.7,392.2 1165.5,390.5 1169.8,414.3 1114.2,416.1" fill="#97473e"/><polygon points="707.8,431.6 735.5,430.8 733.2,457.3 705.1,458.2" fill="#893f3b"/><polygon points="738.6,430.7 793.8,428.9 792.4,455.4 736.4,457.2" fill="#b05744"/><polygon points="796.9,428.8 851.9,427.1 851.5,453.5 795.6,455.3" fill="#b05744"/><polygon points="855.1,427.0 909.9,425.2 910.4,451.6 854.7,453.4" fill="#b05744"/><polygon points="913.0,425.1 967.7,423.4 969.1,449.7 913.6,451.5" fill="#893f3b"/><polygon points="970.8,423.3 1025.3,421.6 1027.7,447.8 972.3,449.6" fill="#893f3b"/><polygon points="1028.4,421.5 1082.8,419.8 1086.1,445.9 1030.9,447.7" fill="#b05744"/><polygon points="1085.9,419.7 1140.1,417.9 1144.3,444.0 1089.2,445.8" fill="#b05744"/><polygon points="1143.2,417.8 1170.2,417.0 1174.9,443.0 1147.4,443.9" fill="#893f3b"/><polygon points="741.8,100.7 1112.0,92.0 1174.9,443.0 705.1,458.2" fill="url(#sheen)"/><defs><clipPath id="qc"><polygon points="741.8,100.7 1112.0,92.0 1174.9,443.0 705.1,458.2"/></clipPath><filter id="tx" x="0" y="0" width="100%" height="100%"><feTurbulence type="fractalNoise" baseFrequency="0.035 0.16" numOctaves="3" seed="11"/><feColorMatrix type="matrix" values="0 0 0 0 1  0 0 0 0 0.82  0 0 0 0 0.74  1.9 0 0 0 -0.78"/></filter></defs><g clip-path="url(#qc)" opacity="0.2"><g transform="rotate(-32 940 275)"><rect x="560" y="-60" width="760" height="680" filter="url(#tx)"/></g></g><polygon points="741.8,100.7 1112.0,92.0 1174.9,443.0 705.1,458.2" fill="none" stroke="#f59a20" stroke-width="2" stroke-linejoin="round"/><path d="M933 238.5 V246.5 M933 256.5 V264.5 M920 251.5 H928 M938 251.5 H946" stroke="#1c1c1c" stroke-width="1.1"/><circle cx="933" cy="251.5" r="10" fill="none" stroke="#ffffff" stroke-width="1.3"/><circle cx="933" cy="251.5" r="10" fill="none" stroke="#e02828" stroke-width="1.3" stroke-dasharray="3.9 3.95"/><path d="M1535 121 V105" stroke="#2b8cf0" stroke-width="2"/><path d="M1535 121 H1566" stroke="#e8384f" stroke-width="2"/><circle cx="1533.7" cy="94.4" r="7.6" fill="#6a9a1c"/><circle cx="1502.8" cy="122.7" r="7.2" fill="#7a3a44" stroke="#d23d55" stroke-width="1.2"/><circle cx="1535" cy="138.2" r="6.8" fill="none" stroke="#3a66a0" stroke-width="1.3"/><circle cx="1536" cy="149" r="7.4" fill="#52702a" stroke="#84c71a" stroke-width="1.4"/><circle cx="1535" cy="105" r="8.3" fill="#2b8cf0"/><circle cx="1566.6" cy="121" r="8.3" fill="#e8384f"/><text x="1535" y="109" font-size="10.5" font-weight="bold" text-anchor="middle" fill="#10203a" font-family='"DejaVu Sans Condensed","DejaVu Sans","Liberation Sans",sans-serif'>Z</text><text x="1566.6" y="125" font-size="10.5" font-weight="bold" text-anchor="middle" fill="#3a0c12" font-family='"DejaVu Sans Condensed","DejaVu Sans","Liberation Sans",sans-serif'>X</text><text x="1533.7" y="97.4" font-size="9.5" font-weight="bold" text-anchor="middle" fill="#1e3004" font-family='"DejaVu Sans Condensed","DejaVu Sans","Liberation Sans",sans-serif'>Y</text><circle cx="1535" cy="105" r="8.3" fill="#2b8cf0"/><text x="1535" y="109" font-size="10.5" font-weight="bold" text-anchor="middle" fill="#10203a" font-family='"DejaVu Sans Condensed","DejaVu Sans","Liberation Sans",sans-serif'>Z</text></svg><div style="left:1549.50px;top:162.80px;width:27.00px;height:27.00px;background:rgba(22,22,22,0.45);border-radius:14px;"></div><svg style="position:absolute;left:1554.00px;top:167.30px;" width="18" height="18" viewBox="0 0 16 16"><circle cx="9.8" cy="6.2" r="4.4" fill="none" stroke="#eeeeee" stroke-width="1.5"/><path d="M6.6 9.4 L2.2 13.8" fill="none" stroke="#eeeeee" stroke-width="2.2" stroke-linecap="round" stroke-linejoin="round" /><path d="M9.8 4.2 V8.2 M7.8 6.2 H11.8" fill="none" stroke="#eeeeee" stroke-width="1.1" stroke-linecap="round" stroke-linejoin="round" /></svg><div style="left:1549.50px;top:192.90px;width:27.00px;height:27.00px;background:rgba(22,22,22,0.45);border-radius:14px;"></div><svg style="position:absolute;left:1554.00px;top:197.40px;" width="18" height="18" viewBox="0 0 16 16"><path d="M5.4 3.6 L6.3 9 M8.1 2.4 L8.1 9 M10.8 3.2 L9.9 9 M13 5.6 L11.5 10 M2.6 7.8 L5.6 11.8" fill="none" stroke="#eeeeee" stroke-width="1.9" stroke-linecap="round" stroke-linejoin="round" /><path d="M4.8 8.6 H12.2 C12.4 11.6 11.2 14.4 8.4 14.4 C6.2 14.4 5 12.6 4.4 10.6 Z" fill="#eeeeee" /></svg><div style="left:1549.50px;top:223.40px;width:27.00px;height:27.00px;background:rgba(22,22,22,0.45);border-radius:14px;"></div><svg style="position:absolute;left:1554.00px;top:227.90px;" width="18" height="18" viewBox="0 0 16 16"><path d="M2.4 8.2 h8 v5.4 h-8z M10.4 10 l3.6 -1.9 v5.6 l-3.6 -1.9z" fill="#eeeeee" /><circle cx="4.6" cy="5.2" r="2.6" fill="#eeeeee"/><circle cx="9.6" cy="4.6" r="3.1" fill="#eeeeee"/><circle cx="4.6" cy="5.2" r="0.9" fill="#45423d"/><circle cx="9.6" cy="4.6" r="1.1" fill="#45423d"/></svg><div style="left:1549.50px;top:253.50px;width:27.00px;height:27.00px;background:rgba(22,22,22,0.45);border-radius:14px;"></div><svg style="position:absolute;left:1554.00px;top:258.00px;" width="18" height="18" viewBox="0 0 16 16"><path d="M4.2 2.6 H11.8 L14.4 13.4 H1.6 Z M8 2.6 V13.4 M3.4 6 H12.6 M2.6 9.4 H13.4 M6 2.6 L4.8 13.4 M10 2.6 L11.2 13.4" fill="none" stroke="#eeeeee" stroke-width="1" stroke-linecap="round" stroke-linejoin="round" /></svg><div style="left:1576.50px;top:87.00px;width:9.00px;height:13.00px;background:rgba(40,40,40,0.6);border-radius:3px 0 0 3px;"></div><svg style="position:absolute;left:1578.00px;top:88.50px;" width="6" height="10" viewBox="0 0 6 10"><path d="M4.5 1.5 L1.5 5 L4.5 8.5" fill="none" stroke="#b0b0b0" stroke-width="1" stroke-linecap="round" stroke-linejoin="round" /></svg><div style="left:294.00px;top:86.00px;width:8.00px;height:13.00px;background:rgba(40,40,40,0.5);border-radius:0 3px 3px 0;"></div><svg style="position:absolute;left:295.00px;top:87.50px;" width="6" height="10" viewBox="0 0 6 10"><path d="M1.5 1.5 L4.5 5 L1.5 8.5" fill="none" stroke="#b0b0b0" stroke-width="1" stroke-linecap="round" stroke-linejoin="round" /></svg><svg style="position:absolute;left:0;top:0" width="1920" height="980" viewBox="0 0 1920 980"><defs><clipPath id="hc"><circle cx="1393.3" cy="413.8" r="47.6"/></clipPath><filter id="b1" x="-30%" y="-30%" width="160%" height="160%"><feGaussianBlur stdDeviation="1.3"/></filter><filter id="b3" x="-30%" y="-30%" width="160%" height="160%"><feGaussianBlur stdDeviation="3"/></filter><radialGradient id="hg" cx="0.5" cy="0.45" r="0.55"><stop offset="0" stop-color="#52483a"/><stop offset="0.7" stop-color="#5c5243"/><stop offset="0.9" stop-color="#75684f"/><stop offset="1" stop-color="#5a5040"/></radialGradient><radialGradient id="sk" cx="0.5" cy="0.55" r="0.6"><stop offset="0" stop-color="#eef2f6"/><stop offset="0.6" stop-color="#c6d6e8"/><stop offset="1" stop-color="#9db8d6"/></radialGradient></defs><g clip-path="url(#hc)"><circle cx="1393.3" cy="413.8" r="47.6" fill="url(#hg)"/><ellipse cx="1392" cy="435" rx="40" ry="22" fill="#38342b" filter="url(#b3)"/><ellipse cx="1393" cy="402" rx="36.5" ry="31" fill="#4a6228" filter="url(#b1)"/><ellipse cx="1393" cy="401.5" rx="33" ry="27.5" fill="url(#sk)" filter="url(#b1)"/><ellipse cx="1371" cy="398" rx="9" ry="13" fill="#4c6a28" opacity="0.85" filter="url(#b1)"/><ellipse cx="1380" cy="385" rx="12" ry="6" fill="#6a8c38" opacity="0.8" filter="url(#b1)"/><ellipse cx="1369" cy="412" rx="6" ry="8" fill="#3e5522" opacity="0.8" filter="url(#b1)"/><ellipse cx="1407" cy="384" rx="9" ry="6" fill="#7a9a40" opacity="0.75" filter="url(#b1)"/><ellipse cx="1413" cy="409" rx="7" ry="8" fill="#86a24c" opacity="0.6" filter="url(#b1)"/><ellipse cx="1419" cy="396" rx="5" ry="10" fill="#5a7a30" opacity="0.7" filter="url(#b1)"/><ellipse cx="1398" cy="424" rx="9" ry="5" fill="#3a4a24" opacity="0.85" filter="url(#b1)"/><ellipse cx="1386" cy="427" rx="6" ry="4" fill="#44562a" opacity="0.8" filter="url(#b1)"/><ellipse cx="1411" cy="424" rx="8" ry="4" fill="#54702e" opacity="0.7" filter="url(#b1)"/><ellipse cx="1392" cy="437" rx="22" ry="7" fill="#4a463a" opacity="0.9" filter="url(#b1)"/><ellipse cx="1376" cy="440" rx="8" ry="4" fill="#8a7c62" opacity="0.7" filter="url(#b1)"/><ellipse cx="1403" cy="447" rx="10" ry="4" fill="#7a6c54" opacity="0.6" filter="url(#b1)"/><ellipse cx="1383.9" cy="391.0" rx="1.7" ry="2.7" fill="#2f4420" opacity="0.8"/><ellipse cx="1408.3" cy="393.4" rx="2.6" ry="1.6" fill="#3f5a22" opacity="0.8"/><ellipse cx="1411.4" cy="411.3" rx="1.8" ry="1.9" fill="#2f4420" opacity="0.8"/><ellipse cx="1371.4" cy="383.0" rx="3.0" ry="1.6" fill="#2f4420" opacity="0.8"/><ellipse cx="1397.4" cy="421.2" rx="2.2" ry="1.8" fill="#56782e" opacity="0.8"/><ellipse cx="1407.6" cy="412.6" rx="1.8" ry="2.6" fill="#56782e" opacity="0.8"/><ellipse cx="1387.3" cy="381.9" rx="2.0" ry="2.9" fill="#2f4420" opacity="0.8"/><ellipse cx="1375.1" cy="408.8" rx="3.8" ry="2.2" fill="#2f4420" opacity="0.8"/><ellipse cx="1396.0" cy="388.6" rx="2.8" ry="3.3" fill="#6f9038" opacity="0.8"/><ellipse cx="1390.5" cy="385.5" rx="1.8" ry="2.3" fill="#3f5a22" opacity="0.8"/><ellipse cx="1393.8" cy="387.4" rx="2.6" ry="3.4" fill="#88a850" opacity="0.8"/><ellipse cx="1414.4" cy="410.9" rx="2.4" ry="2.2" fill="#6f9038" opacity="0.8"/><ellipse cx="1364.6" cy="402.0" rx="3.6" ry="3.4" fill="#3f5a22" opacity="0.8"/><ellipse cx="1367.3" cy="405.0" rx="3.3" ry="2.1" fill="#3f5a22" opacity="0.8"/><ellipse cx="1369.7" cy="391.2" rx="2.2" ry="2.3" fill="#88a850" opacity="0.8"/><ellipse cx="1385.8" cy="390.8" rx="2.4" ry="2.7" fill="#88a850" opacity="0.8"/><ellipse cx="1374.8" cy="402.1" rx="1.8" ry="2.0" fill="#6f9038" opacity="0.8"/><ellipse cx="1370.0" cy="417.1" rx="1.9" ry="2.3" fill="#3f5a22" opacity="0.8"/><ellipse cx="1371.2" cy="409.9" rx="4.0" ry="2.9" fill="#88a850" opacity="0.8"/><ellipse cx="1379.5" cy="411.9" rx="1.9" ry="2.0" fill="#3f5a22" opacity="0.8"/><ellipse cx="1376.9" cy="393.1" rx="1.9" ry="2.6" fill="#3f5a22" opacity="0.8"/><ellipse cx="1377.6" cy="391.0" rx="3.2" ry="2.5" fill="#56782e" opacity="0.8"/><ellipse cx="1373.6" cy="386.8" rx="2.6" ry="3.2" fill="#3f5a22" opacity="0.8"/><ellipse cx="1418.2" cy="395.0" rx="2.5" ry="2.3" fill="#2f4420" opacity="0.8"/><ellipse cx="1413.3" cy="414.3" rx="2.0" ry="3.5" fill="#3f5a22" opacity="0.8"/><ellipse cx="1377.8" cy="406.4" rx="1.6" ry="1.5" fill="#2f4420" opacity="0.8"/><ellipse cx="1402.4" cy="412.4" rx="3.0" ry="1.6" fill="#6f9038" opacity="0.8"/><ellipse cx="1372.3" cy="382.2" rx="2.4" ry="1.7" fill="#2f4420" opacity="0.8"/><ellipse cx="1411.6" cy="380.0" rx="2.7" ry="2.1" fill="#88a850" opacity="0.8"/><ellipse cx="1410.0" cy="419.5" rx="2.7" ry="2.9" fill="#6f9038" opacity="0.8"/><ellipse cx="1375.1" cy="400.0" rx="2.4" ry="2.9" fill="#2f4420" opacity="0.8"/><ellipse cx="1416.8" cy="389.7" rx="3.9" ry="3.2" fill="#6f9038" opacity="0.8"/><ellipse cx="1386.7" cy="386.7" rx="3.8" ry="2.2" fill="#6f9038" opacity="0.8"/><ellipse cx="1367.4" cy="401.1" rx="3.5" ry="3.5" fill="#2f4420" opacity="0.8"/><ellipse cx="1410.2" cy="382.6" rx="3.3" ry="2.0" fill="#88a850" opacity="0.8"/><ellipse cx="1372.5" cy="399.6" rx="4.0" ry="3.1" fill="#3f5a22" opacity="0.8"/><ellipse cx="1375.5" cy="404.1" rx="3.9" ry="2.4" fill="#2f4420" opacity="0.8"/><ellipse cx="1422.3" cy="391.4" rx="1.7" ry="1.7" fill="#6f9038" opacity="0.8"/><ellipse cx="1373.0" cy="404.6" rx="3.1" ry="3.3" fill="#88a850" opacity="0.8"/><circle cx="1393.3" cy="413.8" r="47.0" fill="none" stroke="#3a3328" stroke-width="1.6" opacity="0.55"/></g></svg><div style="left:1472.7px;top:365.6px;width:96.8px;height:96.8px;border-radius:50%;background:radial-gradient(circle 70px at 40px 36px, #d9d9d9 0%, #cfcfcf 45%, #bdbdbd 75%, #a4a4a4 100%)"></div><div class="t" style="top:80.30px;line-height:16.0px;font-size:12px;letter-spacing:-0.430px;color:#ffffff;white-space:nowrap;left:303.00px;text-shadow:0 0 2px rgba(0,0,0,0.9),0 1px 1px rgba(0,0,0,0.8);">User Perspective</div><div class="t" style="top:98.30px;line-height:16.0px;font-size:12px;letter-spacing:-0.430px;color:#ffffff;white-space:nowrap;left:303.00px;text-shadow:0 0 2px rgba(0,0,0,0.9),0 1px 1px rgba(0,0,0,0.8);">(1) Scene Collection | Plane.003</div><div style="left:298.00px;top:390.20px;width:279.60px;height:83.00px;background:rgba(27,27,27,0.97);border-radius:4px;"></div><svg style="position:absolute;left:305.00px;top:397.50px;" width="10" height="10" viewBox="0 0 10 10"><path d="M2 3.5 L5 6.8 L8 3.5" fill="none" stroke="#b0b0b0" stroke-width="1.1" stroke-linecap="round" stroke-linejoin="round" /></svg><div class="t" style="top:395.00px;line-height:16.0px;font-size:12px;letter-spacing:-0.430px;color:#b8b8b8;white-space:nowrap;left:320.00px;">Subdivision Set</div><div class="t" style="top:425.00px;line-height:16.0px;font-size:12px;letter-spacing:-0.430px;color:#c0c0c0;white-space:nowrap;right:1513.50px;text-align:right;">Level</div><div style="left:416.40px;top:423.60px;width:153.00px;height:18.60px;background:#545454;border-radius:3.5px;"></div><div class="t" style="top:425.00px;line-height:16.0px;font-size:12px;letter-spacing:-0.430px;color:#e6e6e6;white-space:nowrap;left:472.50px;width:40px;text-align:center;">1</div><div style="left:416.40px;top:448.20px;width:13.00px;height:13.00px;background:#545454;border-radius:2.5px;box-shadow:inset 0 0 0 1px #3a3a3a;"></div><div class="t" style="top:447.00px;line-height:16.0px;font-size:12px;letter-spacing:-0.430px;color:#ababab;white-space:nowrap;left:433.00px;">Relative</div>
<div style="left:302.50px;top:23.50px;width:31.00px;height:19.00px;background:#282828;border-radius:3.5px;box-shadow:inset 0 0 0 1px #3d3d3d;"></div><svg style="position:absolute;left:305.50px;top:25.30px;" width="15" height="15" viewBox="0 0 16 16"><path d="M1.5 8.5 H14 M3 12.5 L5 6 M12.5 12.5 L10.5 6 M2 12.5 H4 M11.5 12.5 H13.5" fill="none" stroke="#e0e0e0" stroke-width="1.1" stroke-linecap="round" stroke-linejoin="round" /><circle cx="11" cy="3.6" r="2.6" fill="#e0e0e0"/></svg><svg style="position:absolute;left:322.00px;top:29.10px;" width="10" height="10" viewBox="0 0 10 10"><path d="M1.7999999999999998 3.6999999999999997 L5 6.8999999999999995 L8.2 3.6999999999999997" fill="none" stroke="#e4e4e4" stroke-width="1.3" stroke-linecap="round" stroke-linejoin="round"/></svg><div style="left:339.00px;top:23.50px;width:110.00px;height:19.00px;background:#282828;border-radius:3.5px;box-shadow:inset 0 0 0 1px #3d3d3d;"></div><svg style="position:absolute;left:343.50px;top:25.60px;" width="15" height="15" viewBox="0 0 16 16"><path d="M2 5 V2 H5 M11 2 H14 V5 M14 11 V14 H11 M5 14 H2 V11" fill="none" stroke="#e0e0e0" stroke-width="1.1" stroke-linecap="round" stroke-linejoin="round" /><path d="M4.6 4.6 h6.8 v6.8 h-6.8z" fill="#e0e0e0" /></svg><div class="t" style="top:25.60px;line-height:16.0px;font-size:12px;letter-spacing:-0.430px;color:#e4e4e4;white-space:nowrap;left:365.00px;">Object Mode</div><svg style="position:absolute;left:435.00px;top:29.10px;" width="10" height="10" viewBox="0 0 10 10"><path d="M1.7999999999999998 3.6999999999999997 L5 6.8999999999999995 L8.2 3.6999999999999997" fill="none" stroke="#e4e4e4" stroke-width="1.3" stroke-linecap="round" stroke-linejoin="round"/></svg><div class="t" style="top:25.60px;line-height:16.0px;font-size:12px;letter-spacing:-0.430px;color:#e4e4e4;white-space:nowrap;left:461.00px;">View</div><div class="t" style="top:25.60px;line-height:16.0px;font-size:12px;letter-spacing:-0.430px;color:#e4e4e4;white-space:nowrap;left:501.00px;">Select</div><div class="t" style="top:25.60px;line-height:16.0px;font-size:12px;letter-spacing:-0.430px;color:#e4e4e4;white-space:nowrap;left:547.00px;">Add</div><div class="t" style="top:25.60px;line-height:16.0px;font-size:12px;letter-spacing:-0.430px;color:#e4e4e4;white-space:nowrap;left:581.00px;">Object</div><div style="left:813.00px;top:23.50px;width:79.50px;height:19.00px;background:#282828;border-radius:3.5px;box-shadow:inset 0 0 0 1px #3d3d3d;"></div><svg style="position:absolute;left:817.50px;top:25.60px;" width="15" height="15" viewBox="0 0 16 16"><path d="M4 2 V12 H14 M4 12 L11 5 M2.3 4 L4 2 L5.7 4 M12 10.3 L14 12 L12 13.7" fill="none" stroke="#e0e0e0" stroke-width="1.1" stroke-linecap="round" stroke-linejoin="round" /><circle cx="4" cy="12" r="1.6" fill="#282828" stroke="#e0e0e0" stroke-width="1"/></svg><div class="t" style="top:25.60px;line-height:16.0px;font-size:12px;letter-spacing:-0.430px;color:#e4e4e4;white-space:nowrap;left:839.00px;">Global</div><svg style="position:absolute;left:879.00px;top:29.10px;" width="10" height="10" viewBox="0 0 10 10"><path d="M1.7999999999999998 3.6999999999999997 L5 6.8999999999999995 L8.2 3.6999999999999997" fill="none" stroke="#e4e4e4" stroke-width="1.3" stroke-linecap="round" stroke-linejoin="round"/></svg><div style="left:899.00px;top:23.50px;width:30.50px;height:19.00px;background:#282828;border-radius:3.5px;box-shadow:inset 0 0 0 1px #3d3d3d;"></div><svg style="position:absolute;left:902.50px;top:25.60px;" width="15" height="15" viewBox="0 0 16 16"><circle cx="6" cy="9" r="4.4" fill="none" stroke="#e0e0e0" stroke-width="1.2"/><circle cx="10.5" cy="6" r="3.6" fill="none" stroke="#e0e0e0" stroke-width="1.2"/><circle cx="8.2" cy="7.6" r="1.2" fill="#e0e0e0"/></svg><svg style="position:absolute;left:918.00px;top:29.10px;" width="10" height="10" viewBox="0 0 10 10"><path d="M1.7999999999999998 3.6999999999999997 L5 6.8999999999999995 L8.2 3.6999999999999997" fill="none" stroke="#e4e4e4" stroke-width="1.3" stroke-linecap="round" stroke-linejoin="round"/></svg><div style="left:936.00px;top:23.50px;width:50.00px;height:19.00px;background:#282828;border-radius:3.5px;box-shadow:inset 0 0 0 1px #3d3d3d;"></div><div style="left:936.00px;top:23.50px;width:18.50px;height:19.00px;background:#545454;border-radius:3.5px 0 0 3.5px;"></div><svg style="position:absolute;left:937.80px;top:25.60px;" width="15" height="15" viewBox="0 0 16 16"><g transform="rotate(40 8 8)"><path d="M3.2 13 V7.2 A4.8 4.8 0 0 1 12.8 7.2 V13 H10 V7.2 A2 2 0 0 0 6 7.2 V13 Z M3.2 10.6 H6 M10 10.6 H12.8" fill="none" stroke="#b8b8b8" stroke-width="1.05" stroke-linecap="round" stroke-linejoin="round" /></g></svg><svg style="position:absolute;left:957.00px;top:25.60px;" width="15" height="15" viewBox="0 0 16 16"><path d="M2 12 H14 M2 9.5 V14 M6 10.5 V13.5 M10 10.5 V13.5 M14 9.5 V14" fill="none" stroke="#e0e0e0" stroke-width="1.1" stroke-linecap="round" stroke-linejoin="round" /><path d="M10.5 2 h4 v4 h-4z" fill="#e0e0e0" /></svg><svg style="position:absolute;left:974.00px;top:29.10px;" width="10" height="10" viewBox="0 0 10 10"><path d="M1.7999999999999998 3.6999999999999997 L5 6.8999999999999995 L8.2 3.6999999999999997" fill="none" stroke="#e4e4e4" stroke-width="1.3" stroke-linecap="round" stroke-linejoin="round"/></svg><div style="left:992.50px;top:23.50px;width:50.50px;height:19.00px;background:#2c2c2c;border-radius:3.5px;box-shadow:inset 0 0 0 1px #383838;"></div><div style="left:992.50px;top:23.50px;width:18.50px;height:19.00px;background:#545454;border-radius:3.5px 0 0 3.5px;"></div><svg style="position:absolute;left:994.50px;top:25.60px;" width="15" height="15" viewBox="0 0 16 16"><circle cx="8" cy="8" r="5.6" fill="none" stroke="#b0b0b0" stroke-width="1.1"/><circle cx="8" cy="8" r="1.7" fill="#b0b0b0"/></svg><svg style="position:absolute;left:1015.00px;top:25.60px;" width="15" height="15" viewBox="0 0 16 16"><path d="M1.5 13 C5.5 13 5.5 3 8 3 C10.5 3 10.5 13 14.5 13" fill="none" stroke="#c0c0c0" stroke-width="1.1" stroke-linecap="round" stroke-linejoin="round" /></svg><svg style="position:absolute;left:1032.00px;top:29.10px;" width="10" height="10" viewBox="0 0 10 10"><path d="M1.7999999999999998 3.6999999999999997 L5 6.8999999999999995 L8.2 3.6999999999999997" fill="none" stroke="#5a5a5a" stroke-width="1.3" stroke-linecap="round" stroke-linejoin="round"/></svg><div style="left:1329.60px;top:23.50px;width:30.80px;height:19.00px;background:#282828;border-radius:3.5px;box-shadow:inset 0 0 0 1px #3d3d3d;"></div><svg style="position:absolute;left:1332.50px;top:25.10px;" width="16" height="16" viewBox="0 0 16 16"><path d="M5 4.6 C7 1.6 12 1.6 14.5 4.6 C12 7.6 7 7.6 5 4.6 Z" fill="none" stroke="#e0e0e0" stroke-width="1.1" stroke-linecap="round" stroke-linejoin="round" /><circle cx="9.7" cy="4.6" r="1.5" fill="#e0e0e0"/><path d="M2 7 L9 9.6 L6 10.6 L5 14 Z" fill="#e0e0e0" /></svg><svg style="position:absolute;left:1348.50px;top:29.10px;" width="10" height="10" viewBox="0 0 10 10"><path d="M1.7999999999999998 3.6999999999999997 L5 6.8999999999999995 L8.2 3.6999999999999997" fill="none" stroke="#e4e4e4" stroke-width="1.3" stroke-linecap="round" stroke-linejoin="round"/></svg><div style="left:1367.00px;top:23.50px;width:38.40px;height:19.00px;background:#282828;border-radius:3.5px;box-shadow:inset 0 0 0 1px #3d3d3d;"></div><div style="left:1367.00px;top:23.50px;width:18.30px;height:19.00px;background:#4772b3;border-radius:3.5px 0 0 3.5px;"></div><svg style="position:absolute;left:1368.70px;top:25.60px;" width="15" height="15" viewBox="0 0 16 16"><path d="M3 3 C9 3.5 12 7 12.5 13 M5 11 L12.5 3.5 M9 3 H13 V7" fill="none" stroke="#ffffff" stroke-width="1.2" stroke-linecap="round" stroke-linejoin="round" /><circle cx="4.2" cy="11.8" r="1.7" fill="none" stroke="#ffffff" stroke-width="1.1"/></svg><svg style="position:absolute;left:1390.00px;top:29.10px;" width="10" height="10" viewBox="0 0 10 10"><path d="M1.7999999999999998 3.6999999999999997 L5 6.8999999999999995 L8.2 3.6999999999999997" fill="none" stroke="#e4e4e4" stroke-width="1.3" stroke-linecap="round" stroke-linejoin="round"/></svg><div style="left:1411.80px;top:23.50px;width:38.60px;height:19.00px;background:#282828;border-radius:3.5px;box-shadow:inset 0 0 0 1px #3d3d3d;"></div><div style="left:1411.80px;top:23.50px;width:18.30px;height:19.00px;background:#4772b3;border-radius:3.5px 0 0 3.5px;"></div><svg style="position:absolute;left:1413.50px;top:25.60px;" width="15" height="15" viewBox="0 0 16 16"><circle cx="9.8" cy="6.2" r="4.6" fill="#ffffff"/><circle cx="6.4" cy="9.8" r="4.3" fill="none" stroke="#ffffff" stroke-width="1.2"/></svg><svg style="position:absolute;left:1435.00px;top:29.10px;" width="10" height="10" viewBox="0 0 10 10"><path d="M1.7999999999999998 3.6999999999999997 L5 6.8999999999999995 L8.2 3.6999999999999997" fill="none" stroke="#e4e4e4" stroke-width="1.3" stroke-linecap="round" stroke-linejoin="round"/></svg><div style="left:1457.00px;top:23.50px;width:18.00px;height:19.00px;background:#3a3a3a;border-radius:3.5px;"></div><svg style="position:absolute;left:1458.50px;top:25.60px;" width="15" height="15" viewBox="0 0 16 16"><path d="M2 5.5 H10.5 V14 H2 Z M5.5 5.5 V2 H14 V10.5 H10.5" fill="none" stroke="#606060" stroke-width="1.1" stroke-linecap="round" stroke-linejoin="round" /><path d="M5 9.5 h1 M8 9.5 h1" stroke="#606060" stroke-width="1"/></svg><div style="left:1482.00px;top:23.50px;width:95.50px;height:19.00px;background:#282828;border-radius:3.5px;box-shadow:inset 0 0 0 1px #3d3d3d;"></div><div style="left:1482.00px;top:23.50px;width:75.50px;height:19.00px;background:#545454;border-radius:3.5px 0 0 3.5px;"></div><div style="left:1519.80px;top:23.50px;width:18.60px;height:19.00px;background:#4772b3;"></div><div style="left:1500.60px;top:23.50px;width:1.00px;height:19.00px;background:#404040;"></div><div style="left:1538.40px;top:23.50px;width:1.00px;height:19.00px;background:#404040;"></div><svg style="position:absolute;left:1483.80px;top:25.60px;" width="15" height="15" viewBox="0 0 16 16"><circle cx="8" cy="8" r="6" fill="none" stroke="#e0e0e0" stroke-width="1.1"/><path d="M2 8 H14 M8 2 C4.5 5 4.5 11 8 14 M8 2 C11.5 5 11.5 11 8 14 M3 5 H13 M3 11 H13" fill="none" stroke="#e0e0e0" stroke-width="0.9" stroke-linecap="round" stroke-linejoin="round" /></svg><svg style="position:absolute;left:1502.70px;top:25.60px;" width="15" height="15" viewBox="0 0 16 16"><circle cx="8" cy="8" r="6.3" fill="#cfcfcf"/></svg><svg style="position:absolute;left:1521.60px;top:25.60px;" width="15" height="15" viewBox="0 0 16 16"><circle cx="8" cy="8" r="6" fill="none" stroke="#ffffff" stroke-width="1.2"/><path d="M8 2 A6 6 0 0 0 2.6 10.6 L8 8 Z" fill="#ffffff" /><path d="M8 8 L13.4 10.6 A6 6 0 0 0 8 2 Z" fill="#ffffff" opacity="0.95"/><path d="M8 8 L11 13 M8 8 L13.5 10" fill="none" stroke="#4772b3" stroke-width="0.8" stroke-linecap="round" stroke-linejoin="round" /></svg><svg style="position:absolute;left:1540.50px;top:25.60px;" width="15" height="15" viewBox="0 0 16 16"><circle cx="8" cy="8" r="6" fill="none" stroke="#d0d0d0" stroke-width="1.2"/><path d="M4.2 6.5 A4.2 4.2 0 0 1 7 3.8" fill="none" stroke="#d0d0d0" stroke-width="1.3" stroke-linecap="round" stroke-linejoin="round" /><path d="M5 12 A5.5 5.5 0 0 0 13 10" fill="none" stroke="#d0d0d0" stroke-width="1.6" stroke-linecap="round" stroke-linejoin="round" opacity="0.45"/></svg><svg style="position:absolute;left:1562.50px;top:29.10px;" width="10" height="10" viewBox="0 0 10 10"><path d="M1.7999999999999998 3.6999999999999997 L5 6.8999999999999995 L8.2 3.6999999999999997" fill="none" stroke="#e4e4e4" stroke-width="1.3" stroke-linecap="round" stroke-linejoin="round"/></svg><svg style="position:absolute;left:308.00px;top:50.60px;" width="18" height="18" viewBox="0 0 16 16"><rect x="1.5" y="1.5" width="13" height="13" rx="1.5" fill="none" stroke="#e19a1d" stroke-width="1.2" stroke-dasharray="2.2 1.4"/><path d="M6 4.5 L11.6 8.6 L8.6 9.2 L6.8 12 Z" fill="#e0e0e0" /></svg><div style="left:337.80px;top:50.50px;width:94.00px;height:18.60px;background:#4f4f4f;border-radius:3.5px;"></div><div style="left:337.80px;top:50.50px;width:18.40px;height:18.60px;background:#4772b3;border-radius:3.5px 0 0 3.5px;"></div><svg style="position:absolute;left:338.50px;top:51.30px;" width="17" height="17" viewBox="0 0 16 16"><rect x="2" y="2" width="12" height="12" fill="none" stroke="#ffffff" stroke-width="1.4" stroke-dasharray="2.6 1.83"/></svg><svg style="position:absolute;left:357.40px;top:51.30px;" width="17" height="17" viewBox="0 0 16 16"><path d="M1.6 6.4 H6.4 V1.6 H14.4 V9.6 H9.6 V14.4 H1.6 Z" fill="#d8d8d8" /></svg><div style="left:356.30px;top:50.50px;width:0.90px;height:18.60px;background:#3d3d3d;"></div><svg style="position:absolute;left:376.30px;top:51.30px;" width="17" height="17" viewBox="0 0 16 16"><path d="M6.4 1.6 H14.4 V9.6 H10.4 V5.6 H6.4 Z" fill="#d8d8d8" /><path d="M2.2 6.4 H9.6 V13.8 H2.2 Z" fill="none" stroke="#d8d8d8" stroke-width="1.2" stroke-dasharray="2.2 1.5"/></svg><div style="left:375.20px;top:50.50px;width:0.90px;height:18.60px;background:#3d3d3d;"></div><svg style="position:absolute;left:395.20px;top:51.30px;" width="17" height="17" viewBox="0 0 16 16"><path d="M1.6 6.4 H6.4 V9.6 H9.6 V14.4 H1.6 Z M6.4 1.6 H14.4 V9.6 H9.6 V6.4 H6.4 Z" fill="#d8d8d8" /></svg><div style="left:394.10px;top:50.50px;width:0.90px;height:18.60px;background:#3d3d3d;"></div><svg style="position:absolute;left:414.10px;top:51.30px;" width="17" height="17" viewBox="0 0 16 16"><path d="M5.2 5.2 H10.8 V10.8 H5.2 Z" fill="#d8d8d8" /><rect x="2" y="2" width="12" height="12" fill="none" stroke="#d8d8d8" stroke-width="1.2" stroke-dasharray="2.6 1.83"/></svg><div style="left:413.00px;top:50.50px;width:0.90px;height:18.60px;background:#3d3d3d;"></div><div style="left:1517.00px;top:51.00px;width:61.00px;height:17.60px;background:#242424;border-radius:3.5px;"></div><div class="t" style="top:52.20px;line-height:16.0px;font-size:12px;letter-spacing:-0.430px;color:#e4e4e4;white-space:nowrap;left:1524.00px;">Options</div><svg style="position:absolute;left:1564.50px;top:56.00px;" width="10" height="10" viewBox="0 0 10 10"><path d="M1.7999999999999998 3.6999999999999997 L5 6.8999999999999995 L8.2 3.6999999999999997" fill="none" stroke="#e4e4e4" stroke-width="1.3" stroke-linecap="round" stroke-linejoin="round"/></svg>
<div style="left:1588.60px;top:21.00px;width:1330.00px;height:237.40px;background:#282828;border-radius:5px;width:330px;"></div><div style="left:1588.6px;top:21px;width:330px;height:237.4px;border-radius:5px;overflow:hidden"><div style="left:0.00px;top:46.00px;width:330.00px;height:20.00px;background:#2b2b2b;"></div><div style="left:0.00px;top:86.00px;width:330.00px;height:20.00px;background:#2b2b2b;"></div><div style="left:0.00px;top:126.00px;width:330.00px;height:20.00px;background:#2b2b2b;"></div><div style="left:0.00px;top:166.00px;width:330.00px;height:20.00px;background:#2b2b2b;"></div><div style="left:0.00px;top:206.00px;width:330.00px;height:20.00px;background:#2b2b2b;"></div><div style="left:0.00px;top:0.00px;width:330.00px;height:26.00px;background:#303030;"></div><div style="left:0.00px;top:66.30px;width:330.00px;height:20.20px;background:#334d80;"></div></div><div style="left:1596.00px;top:24.00px;width:31.50px;height:18.60px;background:#282828;border-radius:3.5px;box-shadow:inset 0 0 0 1px #3d3d3d;"></div><svg style="position:absolute;left:1599.50px;top:25.90px;" width="15" height="15" viewBox="0 0 16 16"><path d="M2 2 h5.6 v3 h-5.6z M8 6.6 h6 v2.6 h-6z M8 11 h6 v2.6 h-6z" fill="#e0e0e0" /><path d="M4.2 5 V12.3 H8 M4.2 7.9 H8" fill="none" stroke="#e0e0e0" stroke-width="1.1" stroke-linecap="round" stroke-linejoin="round" /></svg><svg style="position:absolute;left:1615.50px;top:29.40px;" width="10" height="10" viewBox="0 0 10 10"><path d="M1.7999999999999998 3.6999999999999997 L5 6.8999999999999995 L8.2 3.6999999999999997" fill="none" stroke="#e4e4e4" stroke-width="1.3" stroke-linecap="round" stroke-linejoin="round"/></svg><div style="left:1633.50px;top:24.00px;width:31.00px;height:18.60px;background:#282828;border-radius:3.5px;box-shadow:inset 0 0 0 1px #3d3d3d;"></div><svg style="position:absolute;left:1637.00px;top:25.90px;" width="15" height="15" viewBox="0 0 16 16"><path d="M2.2 4.6 V13.6 H11.2 M4 3 V11.8 H13" fill="none" stroke="#e0e0e0" stroke-width="1" stroke-linecap="round" stroke-linejoin="round" /><path d="M5.6 1.6 h8.8 v8.8 h-8.8z" fill="#e0e0e0" /><path d="M6.6 9.4 L9.4 5.2 L11 7.6 L11.8 6.6 L13.6 9.4Z" fill="#282828" /><circle cx="12.2" cy="3.8" r="1" fill="#282828"/></svg><svg style="position:absolute;left:1653.00px;top:29.40px;" width="10" height="10" viewBox="0 0 10 10"><path d="M1.7999999999999998 3.6999999999999997 L5 6.8999999999999995 L8.2 3.6999999999999997" fill="none" stroke="#e4e4e4" stroke-width="1.3" stroke-linecap="round" stroke-linejoin="round"/></svg><div style="left:1687.70px;top:24.00px;width:110.00px;height:18.60px;background:#1d1d1d;border-radius:3.5px;box-shadow:inset 0 0 0 1px #3a3a3a;"></div><svg style="position:absolute;left:1691.50px;top:25.90px;" width="15" height="15" viewBox="0 0 16 16"><circle cx="9.6" cy="6.4" r="3.9" fill="none" stroke="#e0e0e0" stroke-width="1.3"/><path d="M6.8 9.2 L2.6 13.4" fill="none" stroke="#e0e0e0" stroke-width="1.5" stroke-linecap="round" stroke-linejoin="round" /></svg><div style="left:1855.50px;top:24.00px;width:31.30px;height:18.60px;background:#282828;border-radius:3.5px;box-shadow:inset 0 0 0 1px #3d3d3d;"></div><svg style="position:absolute;left:1858.50px;top:25.90px;" width="15" height="15" viewBox="0 0 16 16"><path d="M1.8 2.5 H14.2 L9.4 8.2 V13.6 L6.6 11.6 V8.2 Z" fill="none" stroke="#e0e0e0" stroke-width="1.2" stroke-linecap="round" stroke-linejoin="round" /></svg><svg style="position:absolute;left:1874.50px;top:29.40px;" width="10" height="10" viewBox="0 0 10 10"><path d="M1.7999999999999998 3.6999999999999997 L5 6.8999999999999995 L8.2 3.6999999999999997" fill="none" stroke="#e4e4e4" stroke-width="1.3" stroke-linecap="round" stroke-linejoin="round"/></svg><div style="left:1892.70px;top:24.00px;width:18.60px;height:18.60px;background:#545454;border-radius:3.5px;"></div><svg style="position:absolute;left:1894.50px;top:25.90px;" width="15" height="15" viewBox="0 0 16 16"><path d="M2.5 7 H11.5 V13.5 H2.5 Z M5.6 9.6 H8.4 M2.5 7 V4.4 H8.5" fill="none" stroke="#e0e0e0" stroke-width="1.1" stroke-linecap="round" stroke-linejoin="round" /><circle cx="12.4" cy="3.8" r="2.9" fill="#e0e0e0"/><path d="M12.4 2.3 V5.3 M10.9 3.8 H13.9" fill="none" stroke="#545454" stroke-width="1" stroke-linecap="round" stroke-linejoin="round" /></svg><div style="left:1608.50px;top:48.50px;width:19.00px;height:19.00px;background:#404040;border-radius:3.5px;box-shadow:inset 0 0 0 1px #5a5a5a;"></div><svg style="position:absolute;left:1611.00px;top:51.00px;" width="14" height="14" viewBox="0 0 16 16"><path d="M2 2 h12 v3.4 h-12z M2.8 6.4 h10.4 v7.6 h-10.4z" fill="#e8e8e8" /><path d="M6 8.8 h4" stroke="#2a2a2a" stroke-width="1.4" stroke-linecap="round"/></svg><div class="t" style="top:50.00px;line-height:16.0px;font-size:12px;letter-spacing:-0.430px;color:#d8d8d8;white-space:nowrap;left:1632.00px;">Scene Collection</div><svg style="position:absolute;left:1611.50px;top:71.40px;" width="12" height="12" viewBox="0 0 16 16"><path d="M5 4 L11.6 8 L5 12 Z" fill="#b8b8b8" /></svg><svg style="position:absolute;left:1630.50px;top:70.10px;" width="15" height="15" viewBox="0 0 16 16"><path d="M2 2 h12 v3.4 h-12z M2.8 6.4 h10.4 v7.6 h-10.4z" fill="#e8e8e8" /><path d="M6 8.8 h4" stroke="#2a2a2a" stroke-width="1.4" stroke-linecap="round"/></svg><div class="t" style="top:69.80px;line-height:16.0px;font-size:12px;letter-spacing:-0.430px;color:#d8d8d8;white-space:nowrap;left:1652.00px;">Collection</div><svg style="position:absolute;left:1725.00px;top:69.40px;" width="14" height="14" viewBox="0 0 16 16"><path d="M1.6 2.4 L14.4 2.4 L10.4 13.6 C9.8 15 8.4 15 7.8 13.6 Z M6.2 5.2 L9 11 L10.4 5.2 Z" fill="#e18a46" fill-rule="evenodd"/></svg><div class="t" style="top:77.07px;line-height:10.67px;font-size:8px;letter-spacing:-0.287px;color:#c0c0c0;white-space:nowrap;left:1739.50px;">3</div><svg style="position:absolute;left:1744.50px;top:69.90px;" width="15" height="15" viewBox="0 0 16 16"><circle cx="8" cy="6.4" r="5" fill="#e18a46"/><path d="M5.6 11.8 h4.8 v1 h-4.8z M6.2 13.4 h3.6 v1 h-3.6z" fill="#e18a46" /><path d="M6 8.6 V6.4 H10 V8.6 M6.8 6.4 L6 5 M9.2 6.4 L10 5" fill="none" stroke="#2a2a2a" stroke-width="0.9" stroke-linecap="round" stroke-linejoin="round" /></svg><div style="left:1855.00px;top:72.50px;width:10.50px;height:10.50px;background:#e8e8e8;border-radius:1.5px;"></div><svg style="position:absolute;left:1855.00px;top:72.50px;" width="10.5" height="10.5" viewBox="0 0 10.5 10.5"><path d="M2.2 5.6 L4.4 7.8 L8.4 2.8" fill="none" stroke="#1d1d1d" stroke-width="1.7"/></svg><svg style="position:absolute;left:1872.00px;top:69.70px;" width="15" height="15" viewBox="0 0 16 16"><path d="M0.8 8 C3.4 3.6 12.6 3.6 15.2 8 C12.6 12.4 3.4 12.4 0.8 8 Z" fill="#e8e8e8" /><circle cx="8" cy="8" r="3" fill="#2b2b2b"/><circle cx="8" cy="8" r="1.5" fill="#e8e8e8"/></svg><svg style="position:absolute;left:1892.00px;top:69.70px;" width="15" height="15" viewBox="0 0 16 16"><path d="M1.4 4.6 h3 l1 -1.6 h5.2 l1 1.6 h3 v8.6 h-13.2z" fill="#e8e8e8" /><circle cx="8" cy="8.8" r="3.3" fill="#2b2b2b"/><circle cx="8" cy="8.8" r="1.9" fill="#e8e8e8"/></svg><svg style="position:absolute;left:1611.50px;top:91.40px;" width="12" height="12" viewBox="0 0 16 16"><path d="M5 4 L11.6 8 L5 12 Z" fill="#c8c8c8" /></svg><div style="left:1628.50px;top:88.30px;width:19.00px;height:18.00px;background:rgba(255,255,255,0.18);border-radius:3.5px;box-shadow:inset 0 0 0 1px rgba(255,255,255,0.25);"></div><svg style="position:absolute;left:1631.00px;top:90.40px;" width="14" height="14" viewBox="0 0 16 16"><path d="M1.6 2.4 L14.4 2.4 L10.4 13.6 C9.8 15 8.4 15 7.8 13.6 Z M6.2 5.2 L9 11 L10.4 5.2 Z" fill="#e18a46" fill-rule="evenodd"/></svg><div class="t" style="top:89.60px;line-height:16.0px;font-size:12px;letter-spacing:-0.430px;color:#ffaf29;white-space:nowrap;left:1652.00px;">Plane.003</div><svg style="position:absolute;left:1725.00px;top:89.70px;" width="15" height="15" viewBox="0 0 16 16"><path d="M13.6 4.2 L11.6 6.2 L10 5.8 L9.6 4.2 L11.6 2.2 C10.4 1.9 9 2.4 8.4 3.5 C7.9 4.4 8 5.4 8.4 6.3 L2.6 11.8 C1.8 12.6 1.9 13.4 2.4 13.8 C2.9 14.3 3.7 14.2 4.3 13.5 L9.7 7.7 C10.7 8 11.7 8 12.6 7.4 C13.7 6.7 14.1 5.4 13.6 4.2 Z" fill="none" stroke="#5a8fef" stroke-width="1.1" stroke-linecap="round" stroke-linejoin="round" /></svg><svg style="position:absolute;left:1745.00px;top:89.70px;" width="15" height="15" viewBox="0 0 16 16"><path d="M3.4 3.4 H12.6 L8 13 Z" fill="none" stroke="#19c2a5" stroke-width="1.2" stroke-linecap="round" stroke-linejoin="round" /><rect x="1.8" y="1.8" width="3" height="3" fill="#282828" stroke="#19c2a5" stroke-width="1"/><rect x="11.2" y="1.8" width="3" height="3" fill="#282828" stroke="#19c2a5" stroke-width="1"/><rect x="6.5" y="11.4" width="3" height="3" fill="#282828" stroke="#19c2a5" stroke-width="1"/></svg><svg style="position:absolute;left:1872.00px;top:89.70px;" width="15" height="15" viewBox="0 0 16 16"><path d="M0.8 8 C3.4 3.6 12.6 3.6 15.2 8 C12.6 12.4 3.4 12.4 0.8 8 Z" fill="#e8e8e8" /><circle cx="8" cy="8" r="3" fill="#2b2b2b"/><circle cx="8" cy="8" r="1.5" fill="#e8e8e8"/></svg><svg style="position:absolute;left:1892.00px;top:89.70px;" width="15" height="15" viewBox="0 0 16 16"><path d="M1.4 4.6 h3 l1 -1.6 h5.2 l1 1.6 h3 v8.6 h-13.2z" fill="#e8e8e8" /><circle cx="8" cy="8.8" r="3.3" fill="#2b2b2b"/><circle cx="8" cy="8.8" r="1.9" fill="#e8e8e8"/></svg>
<div style="left:1588.6px;top:262px;width:330px;height:720px;border-radius:5px 5px 0 0;overflow:hidden;background:#303030"><div style="left:0.00px;top:25.00px;width:27.40px;height:700.00px;background:#1d1d1d;"></div></div><div style="left:1597.00px;top:265.00px;width:30.50px;height:18.50px;background:#282828;border-radius:3.5px;box-shadow:inset 0 0 0 1px #3d3d3d;"></div><svg style="position:absolute;left:1600.50px;top:266.80px;" width="15" height="15" viewBox="0 0 16 16"><rect x="2" y="2.4" width="11" height="4.8" rx="2.4" fill="#e0e0e0"/><rect x="2" y="8.8" width="11" height="4.8" rx="2.4" fill="#e0e0e0"/><circle cx="10.6" cy="4.8" r="1.5" fill="#282828"/><circle cx="4.4" cy="11.2" r="1.5" fill="#282828"/></svg><svg style="position:absolute;left:1616.00px;top:270.30px;" width="10" height="10" viewBox="0 0 10 10"><path d="M1.7999999999999998 3.6999999999999997 L5 6.8999999999999995 L8.2 3.6999999999999997" fill="none" stroke="#e4e4e4" stroke-width="1.3" stroke-linecap="round" stroke-linejoin="round"/></svg><div style="left:1699.80px;top:265.00px;width:109.50px;height:18.50px;background:#1d1d1d;border-radius:3.5px;box-shadow:inset 0 0 0 1px #3a3a3a;"></div><svg style="position:absolute;left:1703.50px;top:266.80px;" width="15" height="15" viewBox="0 0 16 16"><circle cx="9.6" cy="6.4" r="3.9" fill="none" stroke="#e0e0e0" stroke-width="1.3"/><path d="M6.8 9.2 L2.6 13.4" fill="none" stroke="#e0e0e0" stroke-width="1.5" stroke-linecap="round" stroke-linejoin="round" /></svg><div style="left:1892.80px;top:265.00px;width:18.50px;height:18.50px;background:#282828;border-radius:3.5px;box-shadow:inset 0 0 0 1px #3d3d3d;"></div><svg style="position:absolute;left:1897.00px;top:270.30px;" width="10" height="10" viewBox="0 0 10 10"><path d="M1.7999999999999998 3.6999999999999997 L5 6.8999999999999995 L8.2 3.6999999999999997" fill="none" stroke="#e4e4e4" stroke-width="1.3" stroke-linecap="round" stroke-linejoin="round"/></svg><svg style="position:absolute;left:1594.25px;top:300.05px;" width="17.5" height="17.5" viewBox="0 0 16 16"><path d="M4.4 2 V8" fill="none" stroke="#c6c6c6" stroke-width="1.6" stroke-linecap="round" stroke-linejoin="round" /><ellipse cx="4.4" cy="10.8" rx="2.1" ry="2.6" fill="#c6c6c6"/><path d="M11.2 7.4 V13.2" fill="none" stroke="#c6c6c6" stroke-width="2.4" stroke-linecap="round" stroke-linejoin="round" /><path d="M9.2 2.2 V4.8 C9.2 7.6 13.2 7.6 13.2 4.8 V2.2" fill="none" stroke="#c6c6c6" stroke-width="1.9" stroke-linecap="round" stroke-linejoin="round" /></svg><svg style="position:absolute;left:1594.25px;top:336.25px;" width="17.5" height="17.5" viewBox="0 0 16 16"><path d="M2 5.6 H14 V13.4 H2 Z" fill="none" stroke="#c6c6c6" stroke-width="1.4" stroke-linecap="round" stroke-linejoin="round" /><path d="M4.6 5.4 V3.4 H8.6 V5.4" fill="none" stroke="#c6c6c6" stroke-width="1.3" stroke-linecap="round" stroke-linejoin="round" /><path d="M10.8 7.4 h2 v1.4 h-2z M10.8 10 h2 v1.4 h-2z M3.8 7.4 h5.6 v1.2 h-5.6z M3.8 9.4 h5.6 v1.2 h-5.6z M3.8 11.2 h5.6 v0.8 h-5.6z" fill="#c6c6c6" /><path d="M11 3.4 H13.4" fill="none" stroke="#c6c6c6" stroke-width="1.2" stroke-linecap="round" stroke-linejoin="round" /></svg><svg style="position:absolute;left:1594.25px;top:363.65px;" width="17.5" height="17.5" viewBox="0 0 16 16"><path d="M1.6 2 h12.8 v5.6 h-2.4 v-1.8 h-8 v1.8 h-2.4z" fill="#c6c6c6" /><path d="M4.4 7 V13.6 H11.6 V7" fill="none" stroke="#c6c6c6" stroke-width="1.4" stroke-linecap="round" stroke-linejoin="round" /><path d="M5.4 12.8 L8.2 9 L10.6 12.8Z" fill="#c6c6c6" /></svg><svg style="position:absolute;left:1594.25px;top:391.45px;" width="17.5" height="17.5" viewBox="0 0 16 16"><path d="M2.2 4.6 V13.6 H11.2 M4 3 V11.8 H13" fill="none" stroke="#c6c6c6" stroke-width="1" stroke-linecap="round" stroke-linejoin="round" /><path d="M5.6 1.6 h8.8 v8.8 h-8.8z" fill="#c6c6c6" /><path d="M6.6 9.4 L9.4 5.2 L11 7.6 L11.8 6.6 L13.6 9.4Z" fill="#282828" /><circle cx="12.2" cy="3.8" r="1" fill="#282828"/></svg><svg style="position:absolute;left:1594.25px;top:419.65px;" width="17.5" height="17.5" viewBox="0 0 16 16"><path d="M5 2.4 L8.4 11.4 H1.6 Z" fill="#c6c6c6" /><circle cx="10.6" cy="11" r="3.1" fill="#222" stroke="#c6c6c6" stroke-width="1.1"/><circle cx="11.8" cy="3.6" r="1.8" fill="#c6c6c6"/></svg><svg style="position:absolute;left:1594.25px;top:447.25px;" width="17.5" height="17.5" viewBox="0 0 16 16"><circle cx="8" cy="8" r="5.6" fill="none" stroke="#c85c6c" stroke-width="1.2"/><path d="M4 5 C6 4 7 6 6 7.6 C5 9 7.4 9.6 7 11.6 C5 11.6 3.4 9 4 5 Z M9 3.6 C11 4 12.6 6 12.4 8 C11 8.6 10 7 9 6.4 Z" fill="#c85c6c" /><path d="M2 12.6 C5 15.5 11 15.5 14.4 12.4 M13.2 3.2 L14.6 2" fill="none" stroke="#c85c6c" stroke-width="1" stroke-linecap="round" stroke-linejoin="round" /></svg><svg style="position:absolute;left:1594.25px;top:483.95px;" width="17.5" height="17.5" viewBox="0 0 16 16"><path d="M2 5 V2 H5 M11 2 H14 V5 M14 11 V14 H11 M5 14 H2 V11" fill="none" stroke="#a0733f" stroke-width="1.1" stroke-linecap="round" stroke-linejoin="round" /><path d="M4.4 4.4 h7.2 v7.2 h-7.2z" fill="#d89050" /></svg><svg style="position:absolute;left:1594.25px;top:539.85px;" width="17.5" height="17.5" viewBox="0 0 16 16"><path d="M4 3.4 L12 12.6 M4 3.4 V12.4 M4 3.4 H12.4" fill="none" stroke="#5079c4" stroke-width="1" stroke-linecap="round" stroke-linejoin="round" /><circle cx="4" cy="3.4" r="1.9" fill="#5079c4"/><circle cx="12.6" cy="3.4" r="1.4" fill="#5079c4"/><circle cx="4" cy="12.6" r="1.4" fill="#5079c4"/><circle cx="12.2" cy="12.8" r="1.7" fill="#5079c4"/></svg><svg style="position:absolute;left:1594.25px;top:568.05px;" width="17.5" height="17.5" viewBox="0 0 16 16"><path d="M12.2 11.4 A5.4 5.4 0 1 1 11.2 4.2" fill="none" stroke="#5079c4" stroke-width="1.1" stroke-linecap="round" stroke-linejoin="round" /><circle cx="7.4" cy="8.2" r="2.7" fill="#5079c4"/><circle cx="12.8" cy="3.4" r="1.6" fill="#5079c4"/></svg><svg style="position:absolute;left:1594.25px;top:596.25px;" width="17.5" height="17.5" viewBox="0 0 16 16"><path d="M2.6 12.6 C0.6 10.2 2 6.6 5 5.8 L11.4 2.4 C13.4 1.6 15 3.4 14 5.2 L10.4 11.6 C8.8 14.6 4.6 15 2.6 12.6 Z" fill="none" stroke="#5079c4" stroke-width="1.1" stroke-linecap="round" stroke-linejoin="round" /><circle cx="6.4" cy="9.8" r="2.5" fill="none" stroke="#5079c4" stroke-width="1.5"/><circle cx="12.2" cy="4.2" r="0.9" fill="#5079c4"/></svg><svg style="position:absolute;left:1594.25px;top:624.25px;" width="17.5" height="17.5" viewBox="0 0 16 16"><path d="M3.4 3.4 H12.6 L8 13 Z" fill="none" stroke="#1fb896" stroke-width="1.2" stroke-linecap="round" stroke-linejoin="round" /><rect x="1.8" y="1.8" width="3" height="3" fill="#282828" stroke="#1fb896" stroke-width="1"/><rect x="11.2" y="1.8" width="3" height="3" fill="#282828" stroke="#1fb896" stroke-width="1"/><rect x="6.5" y="11.4" width="3" height="3" fill="#282828" stroke="#1fb896" stroke-width="1"/></svg><svg style="position:absolute;left:1594.25px;top:652.05px;" width="17.5" height="17.5" viewBox="0 0 16 16"><circle cx="8" cy="8" r="6" fill="none" stroke="#cc6878" stroke-width="1.2"/><path d="M8 2 A6 6 0 0 0 2 8 H8 Z M8 8 H14 A6 6 0 0 1 8 14 Z" fill="#cc6878" /></svg><svg style="position:absolute;left:1594.25px;top:688.25px;" width="17.5" height="17.5" viewBox="0 0 16 16"><rect x="2.0" y="2.0" width="2.4" height="2.4" fill="#c8687a"/><rect x="6.8" y="2.0" width="2.4" height="2.4" fill="#c8687a"/><rect x="11.6" y="2.0" width="2.4" height="2.4" fill="#c8687a"/><rect x="4.4" y="4.4" width="2.4" height="2.4" fill="#c8687a"/><rect x="9.2" y="4.4" width="2.4" height="2.4" fill="#c8687a"/><rect x="2.0" y="6.8" width="2.4" height="2.4" fill="#c8687a"/><rect x="6.8" y="6.8" width="2.4" height="2.4" fill="#c8687a"/><rect x="11.6" y="6.8" width="2.4" height="2.4" fill="#c8687a"/><rect x="4.4" y="9.2" width="2.4" height="2.4" fill="#c8687a"/><rect x="9.2" y="9.2" width="2.4" height="2.4" fill="#c8687a"/><rect x="2.0" y="11.6" width="2.4" height="2.4" fill="#c8687a"/><rect x="6.8" y="11.6" width="2.4" height="2.4" fill="#c8687a"/><rect x="11.6" y="11.6" width="2.4" height="2.4" fill="#c8687a"/><rect x="2" y="2" width="12" height="12" fill="none" stroke="#c8687a" stroke-width="1"/></svg><div style="left:1593.00px;top:323.50px;width:23.00px;height:1.00px;background:#282828;"></div><div style="left:1593.00px;top:676.00px;width:23.00px;height:1.00px;background:#282828;"></div><div style="left:1593.00px;top:712.00px;width:23.00px;height:1.00px;background:#282828;"></div><svg style="position:absolute;left:1626.50px;top:297.50px;" width="15" height="15" viewBox="0 0 16 16"><path d="M2 5 V2 H5 M11 2 H14 V5 M14 11 V14 H11 M5 14 H2 V11" fill="none" stroke="#e0e0e0" stroke-width="1.1" stroke-linecap="round" stroke-linejoin="round" /><path d="M4.6 4.6 h6.8 v6.8 h-6.8z" fill="#e0e0e0" /></svg><div class="t" style="top:297.00px;line-height:16.0px;font-size:12px;letter-spacing:-0.430px;color:#e4e4e4;white-space:nowrap;left:1650.00px;">Plane.003</div><svg style="position:absolute;left:1715.00px;top:299.50px;" width="8" height="11" viewBox="0 0 8 11"><path d="M2 1.5 L6 5.5 L2 9.5" fill="none" stroke="#d0d0d0" stroke-width="1.1" stroke-linecap="round" stroke-linejoin="round" /></svg><svg style="position:absolute;left:1732.50px;top:297.50px;" width="15" height="15" viewBox="0 0 16 16"><rect x="1.6" y="1.6" width="12.8" height="12.8" fill="none" stroke="#e0e0e0" stroke-width="1"/><circle cx="8" cy="8" r="4.5" fill="none" stroke="#e0e0e0" stroke-width="1.1"/></svg><div class="t" style="top:297.00px;line-height:16.0px;font-size:12px;letter-spacing:-0.430px;color:#e4e4e4;white-space:nowrap;left:1756.00px;">Subdivision</div><svg style="position:absolute;left:1895.00px;top:297.50px;" width="15" height="15" viewBox="0 0 16 16"><path d="M9.6 2 L14 6.4 L12.6 7 L10.4 9.2 L10 12 L4 6 L6.8 5.6 L9 3.4 Z M7 9 L2.4 13.6" fill="none" stroke="#9a9a9a" stroke-width="1" stroke-linecap="round" stroke-linejoin="round" /></svg><div style="left:1624.60px;top:331.70px;width:287.00px;height:18.80px;background:#282828;border-radius:3.5px;box-shadow:inset 0 0 0 1px #3d3d3d;"></div><div class="t" style="top:333.20px;line-height:16.0px;font-size:12px;letter-spacing:-0.430px;color:#e4e4e4;white-space:nowrap;left:1632.00px;">Add Modifier</div><svg style="position:absolute;left:1899.00px;top:337.20px;" width="10" height="10" viewBox="0 0 10 10"><path d="M1.7999999999999998 3.6999999999999997 L5 6.8999999999999995 L8.2 3.6999999999999997" fill="none" stroke="#e4e4e4" stroke-width="1.3" stroke-linecap="round" stroke-linejoin="round"/></svg><div style="left:1625.00px;top:363.00px;width:285.00px;height:216.00px;background:#3d3d3d;border-radius:4px;"></div><svg style="position:absolute;left:1631.00px;top:368.00px;" width="11" height="11" viewBox="0 0 11 11"><path d="M2 3.6 L5.5 7.4 L9 3.6" fill="none" stroke="#c8c8c8" stroke-width="1.1" stroke-linecap="round" stroke-linejoin="round" /></svg><svg style="position:absolute;left:1646.50px;top:366.50px;" width="15" height="15" viewBox="0 0 16 16"><rect x="1.6" y="1.6" width="12.8" height="12.8" fill="none" stroke="#e0e0e0" stroke-width="1"/><circle cx="8" cy="8" r="4.5" fill="none" stroke="#e0e0e0" stroke-width="1.1"/></svg><div style="left:1673.00px;top:365.20px;width:188.50px;height:17.60px;background:#222222;border-radius:3.5px;"></div><div style="left:1673.00px;top:365.20px;width:88.00px;height:17.60px;background:#1d1d1d;border-radius:3.5px 0 0 3.5px;"></div><div class="t" style="top:366.20px;line-height:16.0px;font-size:12px;letter-spacing:-0.430px;color:#e4e4e4;white-space:nowrap;left:1680.00px;">Subdivision</div><div style="left:1761.30px;top:365.20px;width:20.00px;height:17.60px;background:#545454;"></div><div style="left:1781.80px;top:365.20px;width:19.60px;height:17.60px;background:#4772b3;"></div><div style="left:1801.90px;top:365.20px;width:19.60px;height:17.60px;background:#4772b3;"></div><div style="left:1822.00px;top:365.20px;width:19.60px;height:17.60px;background:#4772b3;"></div><svg style="position:absolute;left:1764.30px;top:367.00px;" width="14" height="14" viewBox="0 0 16 16"><path d="M3.4 3.4 H12.6 L8 13 Z" fill="none" stroke="#e8e8e8" stroke-width="1.2" stroke-linecap="round" stroke-linejoin="round" /><rect x="1.8" y="1.8" width="3" height="3" fill="#282828" stroke="#e8e8e8" stroke-width="1"/><rect x="11.2" y="1.8" width="3" height="3" fill="#282828" stroke="#e8e8e8" stroke-width="1"/><rect x="6.5" y="11.4" width="3" height="3" fill="#282828" stroke="#e8e8e8" stroke-width="1"/></svg><svg style="position:absolute;left:1784.60px;top:367.00px;" width="14" height="14" viewBox="0 0 16 16"><path d="M3.4 3.4 H12.6 V12.6 H3.4 Z" fill="none" stroke="#ffffff" stroke-width="1" stroke-linecap="round" stroke-linejoin="round" stroke-dasharray="2.4 1.6"/><path d="M1.6 1.6 h3 v3 h-3z M1.6 11.4 h3 v3 h-3z M11.4 11.4 h3 v3 h-3z" fill="#ffffff" /><path d="M10.6 0.8 h4.6 v4.6 h-4.6z" fill="#ffffff" /></svg><svg style="position:absolute;left:1804.70px;top:367.20px;" width="14" height="14" viewBox="0 0 16 16"><path d="M1.8 2.8 H14.2 V10.8 H1.8 Z M5.4 13.4 H10.6 M8 10.8 V13.4" fill="none" stroke="#ffffff" stroke-width="1.2" stroke-linecap="round" stroke-linejoin="round" /><path d="M3.4 4.4 h9.2 v4.8 h-9.2z" fill="#ffffff" opacity="0.9"/></svg><svg style="position:absolute;left:1824.80px;top:367.00px;" width="14" height="14" viewBox="0 0 16 16"><path d="M1.4 4.6 h3 l1 -1.6 h5.2 l1 1.6 h3 v8.6 h-13.2z" fill="#ffffff" /><circle cx="8" cy="8.8" r="3.3" fill="#2b2b2b"/><circle cx="8" cy="8.8" r="1.9" fill="#ffffff"/></svg><svg style="position:absolute;left:1846.50px;top:370.00px;" width="10" height="10" viewBox="0 0 10 10"><path d="M1.4 3.5 L5 7.1 L8.6 3.5" fill="none" stroke="#e4e4e4" stroke-width="1.3" stroke-linecap="round" stroke-linejoin="round"/></svg><svg style="position:absolute;left:1865.50px;top:367.50px;" width="13" height="13" viewBox="0 0 16 16"><path d="M3.6 3.6 L12.4 12.4 M12.4 3.6 L3.6 12.4" fill="none" stroke="#e0e0e0" stroke-width="1.2" stroke-linecap="round" stroke-linejoin="round" /></svg><svg style="position:absolute;left:1893.50px;top:366.90px;" width="13" height="13" viewBox="0 0 16 16"><rect x="2.3" y="5.5" width="1.4" height="1.4" fill="#8a8a8a"/><rect x="5.6" y="5.5" width="1.4" height="1.4" fill="#8a8a8a"/><rect x="8.9" y="5.5" width="1.4" height="1.4" fill="#8a8a8a"/><rect x="12.200000000000001" y="5.5" width="1.4" height="1.4" fill="#8a8a8a"/><rect x="2.3" y="9.100000000000001" width="1.4" height="1.4" fill="#8a8a8a"/><rect x="5.6" y="9.100000000000001" width="1.4" height="1.4" fill="#8a8a8a"/><rect x="8.9" y="9.100000000000001" width="1.4" height="1.4" fill="#8a8a8a"/><rect x="12.200000000000001" y="9.100000000000001" width="1.4" height="1.4" fill="#8a8a8a"/></svg><div style="left:1633.00px;top:395.00px;width:133.00px;height:18.00px;background:#545454;border-radius:3.5px 0 0 3.5px;"></div><div class="t" style="top:396.20px;line-height:16.0px;font-size:12px;letter-spacing:-0.430px;color:#e4e4e4;white-space:nowrap;left:1629.50px;width:140px;text-align:center;">Catmull-Clark</div><div style="left:1765.0px;top:392.4px;width:142.0px;height:22.4px;border:5px solid #ed1c24"></div><div style="left:1770.00px;top:397.40px;width:132.00px;height:12.40px;background:#4772b3;"></div><div class="t" style="top:396.20px;line-height:16.0px;font-size:12px;letter-spacing:-0.430px;color:#ffffff;white-space:nowrap;left:1785.00px;width:100px;text-align:center;">Simple</div><div style="left:1732.0px;top:416.4px;width:134.0px;height:24.5px;border:5px solid #ed1c24"></div><div style="left:1738.00px;top:422.90px;width:12.00px;height:12.00px;background:#4772b3;border-radius:2.5px;"></div><svg style="position:absolute;left:1738.00px;top:422.90px;" width="12" height="12" viewBox="0 0 12 12"><path d="M2.6 6.2 L5 8.8 L9.6 3" fill="none" stroke="#fff" stroke-width="1.6" stroke-linecap="round" stroke-linejoin="round"/></svg><div class="t" style="top:421.00px;line-height:16.0px;font-size:12px;letter-spacing:-0.430px;color:#ffffff;white-space:nowrap;left:1754.00px;">Adaptive Subdivision</div><div style="left:1892.20px;top:427.20px;width:3.80px;height:3.80px;background:#d4d4d4;border-radius:2px;"></div><div style="left:1892.20px;top:452.20px;width:3.80px;height:3.80px;background:#d4d4d4;border-radius:2px;"></div><div style="left:1892.20px;top:513.20px;width:3.80px;height:3.80px;background:#d4d4d4;border-radius:2px;"></div><div style="left:1892.20px;top:538.20px;width:3.80px;height:3.80px;background:#d4d4d4;border-radius:2px;"></div><div class="t" style="top:446.00px;line-height:16.0px;font-size:12px;letter-spacing:-0.430px;color:#e4e4e4;white-space:nowrap;right:191.60px;text-align:right;">Dicing Scale</div><div style="left:1738.00px;top:445.30px;width:145.00px;height:18.00px;background:#545454;border-radius:3.5px;"></div><div class="t" style="top:446.20px;line-height:16.0px;font-size:12px;letter-spacing:-0.430px;color:#e4e4e4;white-space:nowrap;left:1780.50px;width:60px;text-align:center;">1.00</div><div class="t" style="top:471.40px;line-height:16.0px;font-size:12px;letter-spacing:-0.350px;color:#e4e4e4;white-space:nowrap;left:1633.00px;">Final Scale: Render 1.00 px, Viewport 8.00 px</div><div class="t" style="top:507.00px;line-height:16.0px;font-size:12px;letter-spacing:-0.430px;color:#e4e4e4;white-space:nowrap;right:191.60px;text-align:right;">Levels Viewport</div><div style="left:1738.00px;top:506.00px;width:145.00px;height:18.00px;background:#545454;border-radius:3.5px;"></div><div class="t" style="top:507.20px;line-height:16.0px;font-size:12px;letter-spacing:-0.430px;color:#e4e4e4;white-space:nowrap;left:1780.50px;width:60px;text-align:center;">2</div><div style="left:1733.0px;top:525.2px;width:107.0px;height:30.8px;border:5px solid #ed1c24"></div><div style="left:1738.00px;top:534.00px;width:12.00px;height:12.00px;background:#4772b3;border-radius:2.5px;"></div><svg style="position:absolute;left:1738.00px;top:534.00px;" width="12" height="12" viewBox="0 0 12 12"><path d="M2.6 6.2 L5 8.8 L9.6 3" fill="none" stroke="#fff" stroke-width="1.6" stroke-linecap="round" stroke-linejoin="round"/></svg><div class="t" style="top:532.20px;line-height:16.0px;font-size:12px;letter-spacing:-0.430px;color:#ffffff;white-space:nowrap;left:1754.00px;">Optimal Display</div><svg style="position:absolute;left:1648.00px;top:565.00px;" width="9" height="12" viewBox="0 0 9 12"><path d="M2.5 1.8 L6.5 6 L2.5 10.2" fill="none" stroke="#c8c8c8" stroke-width="1.1" stroke-linecap="round" stroke-linejoin="round" /></svg><div class="t" style="top:562.80px;line-height:16.0px;font-size:12px;letter-spacing:-0.430px;color:#e4e4e4;white-space:nowrap;left:1660.00px;">Advanced</div><div style="left:1590.00px;top:507.50px;width:26.40px;height:24.20px;background:#303030;"></div><svg style="position:absolute;left:1594.25px;top:511.85px;" width="17.5" height="17.5" viewBox="0 0 16 16"><path d="M13.9 3.4 L11.6 5.7 L10.2 5.4 L9.9 4 L12.2 1.7 C10.6 1.2 8.8 1.7 8 3.1 C7.4 4.2 7.5 5.3 7.9 6.3 L2.2 11.6 C1.2 12.6 1.2 13.6 1.9 14.2 C2.6 14.8 3.6 14.7 4.4 13.8 L9.7 8.1 C10.8 8.5 12 8.5 13 7.8 C14.3 6.9 14.6 5 13.9 3.4 Z" fill="#6295ee" /></svg><div style="left:1585px;top:502.6px;width:37px;height:34.4px;border-style:solid;border-color:#ed1c24;border-width:5.1px 5.8px 5.5px 5.4px"></div><div style="left:1620.0px;top:358.4px;width:295.2px;height:225.2px;border:5px solid #ed1c24"></div>
<div style="left:294.0px;top:480.2px;width:1290.8px;height:499.8px;background:#1d1d1d;border-radius:5px 5px 0 0;overflow:hidden"><svg style="position:absolute;left:0;top:0" width="1290.8" height="499.8"><defs><pattern id="dg" x="13.65" y="50.20" width="53.7" height="53.7" patternUnits="userSpaceOnUse"><rect x="26.85" y="26.85" width="2.4" height="2.4" fill="#303030"/></pattern><pattern id="dg2" x="35.63" y="72.18" width="10.740" height="10.740" patternUnits="userSpaceOnUse"><rect x="5.37" y="5.37" width="1" height="1" fill="#222222"/></pattern></defs><rect x="0" y="62" width="1290.8" height="499.8" fill="url(#dg2)"/><rect x="0" y="62" width="1290.8" height="499.8" fill="url(#dg)"/></svg><div style="left:1286.50px;top:36.00px;width:3.00px;height:450.00px;background:#303030;border-radius:1.5px;"></div><div style="left:174.00px;top:494.20px;width:1108.00px;height:4.00px;background:#303030;border-radius:2px;"></div></div><svg style="position:absolute;left:0;top:0" width="1920" height="980" viewBox="0 0 1920 980"><path d="M342.0 729.8 C428.4 729.8 428.4 770.9 514.8 770.9" fill="none" stroke="#141414" stroke-width="2.85" stroke-linecap="round"/><path d="M342.0 729.8 C428.4 729.8 428.4 770.9 514.8 770.9" fill="none" stroke="#6363c7" stroke-width="1.55" stroke-linecap="round"/><path d="M342.0 729.8 C369.0 729.8 369.0 859.8 396.0 859.8" fill="none" stroke="#141414" stroke-width="2.85" stroke-linecap="round"/><path d="M342.0 729.8 C369.0 729.8 369.0 859.8 396.0 859.8" fill="none" stroke="#6363c7" stroke-width="1.55" stroke-linecap="round"/><path d="M471.4 819.0 C493.1 819.0 493.1 841.9 514.8 841.9" fill="none" stroke="#141414" stroke-width="2.85" stroke-linecap="round"/><path d="M471.4 819.0 C493.1 819.0 493.1 841.9 514.8 841.9" fill="none" stroke="#a0a0a0" stroke-width="1.55" stroke-linecap="round"/><path d="M596.7 560.0 C633.9 560.0 633.9 703.3 671.0 703.3" fill="none" stroke="#141414" stroke-width="2.85" stroke-linecap="round"/><path d="M596.7 560.0 C633.9 560.0 633.9 703.3 671.0 703.3" fill="none" stroke="#a8a8a8" stroke-width="1.55" stroke-linecap="round"/><path d="M596.7 560.0 C630.7 560.0 630.7 767.5 664.6 767.5" fill="none" stroke="#141414" stroke-width="2.85" stroke-linecap="round"/><path d="M596.7 560.0 C630.7 560.0 630.7 767.5 664.6 767.5" fill="none" stroke="#a0a0a0" stroke-width="1.55" stroke-linecap="round"/><path d="M595.6 695.0 C633.3 695.0 633.3 715.3 671.0 715.3" fill="none" stroke="#141414" stroke-width="2.85" stroke-linecap="round"/><path d="M595.6 695.0 C633.3 695.0 633.3 715.3 671.0 715.3" fill="none" stroke="#c7c729" stroke-width="1.55" stroke-linecap="round"/><defs><linearGradient id="lg1" gradientUnits="userSpaceOnUse" x1="595.6" y1="695" x2="677" y2="881.6"><stop offset="0" stop-color="#c7c729"/><stop offset="1" stop-color="#b4b4a0"/></linearGradient></defs><path d="M595.6 695.0 C636.3 695.0 636.3 881.6 677.0 881.6" fill="none" stroke="#141414" stroke-width="2.85" stroke-linecap="round"/><path d="M595.6 695.0 C636.3 695.0 636.3 881.6 677.0 881.6" fill="none" stroke="url(#lg1)" stroke-width="1.55" stroke-linecap="round"/><path d="M664.6 767.5 L761.9 768.5" fill="none" stroke="#141414" stroke-width="2.6"/><path d="M664.6 767.5 L761.9 768.5" fill="none" stroke="#a0a0a0" stroke-width="1.3"/><path d="M709.5 764.6 L713.2 768 L709.5 771.4" fill="none" stroke="#a0a0a0" stroke-width="1.2"/><path d="M761.9 768.5 C774.0 768.5 774.0 882.7 786.1 882.7" fill="none" stroke="#141414" stroke-width="2.85" stroke-linecap="round"/><path d="M761.9 768.5 C774.0 768.5 774.0 882.7 786.1 882.7" fill="none" stroke="#a0a0a0" stroke-width="1.55" stroke-linecap="round"/><path d="M752.5 828.8 C769.3 828.8 769.3 894.8 786.1 894.8" fill="none" stroke="#141414" stroke-width="2.85" stroke-linecap="round"/><path d="M752.5 828.8 C769.3 828.8 769.3 894.8 786.1 894.8" fill="none" stroke="#6363c7" stroke-width="1.55" stroke-linecap="round"/><defs><linearGradient id="lg2" gradientUnits="userSpaceOnUse" x1="861.5" y1="829.8" x2="887.8" y2="927"><stop offset="0" stop-color="#9a9ad8"/><stop offset="1" stop-color="#c4c4e6"/></linearGradient></defs><path d="M861.5 829.8 C874.6 829.8 874.6 927.0 887.8 927.0" fill="none" stroke="#141414" stroke-width="2.85" stroke-linecap="round"/><path d="M861.5 829.8 C874.6 829.8 874.6 927.0 887.8 927.0" fill="none" stroke="url(#lg2)" stroke-width="1.55" stroke-linecap="round"/><path d="M746.0 633.8 C816.9 633.8 816.9 666.8 887.8 666.8" fill="none" stroke="#141414" stroke-width="2.85" stroke-linecap="round"/><path d="M746.0 633.8 C816.9 633.8 816.9 666.8 887.8 666.8" fill="none" stroke="#e4e4a0" stroke-width="1.55" stroke-linecap="round"/><path d="M1016.9 623.8 C1030.1 623.8 1030.1 637.4 1043.3 637.4" fill="none" stroke="#141414" stroke-width="2.85" stroke-linecap="round"/><path d="M1016.9 623.8 C1030.1 623.8 1030.1 637.4 1043.3 637.4" fill="none" stroke="#a6dca6" stroke-width="1.55" stroke-linecap="round"/></svg><div style="left:294.0px;top:480.2px;width:1290.8px;height:499.8px;overflow:hidden"><div style="left:-294.0px;top:-480.2px;width:1920px;height:980px"><div style="left:250.0px;top:712.0px;width:91.8px;height:186.5px;background:#303030;border-radius:3px;box-shadow:0 1.5px 4px rgba(0,0,0,0.55);overflow:hidden"><div style="left:0.00px;top:0.00px;width:91.80px;height:10.40px;background:#3c3c83;"></div></div><svg style="position:absolute;left:255.20px;top:714.00px;" width="6" height="6" viewBox="0 0 6 6"><path d="M1 2 L3 4.4 L5 2" fill="none" stroke="#e0e0e0" stroke-width="0.8" stroke-linecap="round" stroke-linejoin="round" /></svg><div class="t" style="top:712.15px;line-height:8.0px;font-size:6.0px;letter-spacing:-0.180px;color:#e2e2e2;white-space:nowrap;left:263.00px;word-spacing:-0.75px;text-shadow:0 0 1px rgba(0,0,0,0.7),0 0.5px 0.5px rgba(0,0,0,0.6);"></div><div class="t" style="top:725.65px;line-height:8.0px;font-size:6.0px;letter-spacing:-0.180px;color:#e2e2e2;white-space:nowrap;right:1584.80px;text-align:right;word-spacing:-0.75px;text-shadow:0 0 1px rgba(0,0,0,0.7),0 0.5px 0.5px rgba(0,0,0,0.6);">Vector</div><div style="left:255.40px;top:741.30px;width:81.00px;height:10.00px;background:#282828;border-radius:2px;box-shadow:inset 0 0 0 1px #474747;"></div><div class="t" style="top:742.15px;line-height:8.0px;font-size:6.0px;letter-spacing:-0.180px;color:#e2e2e2;white-space:nowrap;left:259.00px;word-spacing:-0.75px;text-shadow:0 0 1px rgba(0,0,0,0.7),0 0.5px 0.5px rgba(0,0,0,0.6);"></div><svg style="position:absolute;left:330.20px;top:744.10px;" width="5" height="5" viewBox="0 0 5 5"><path d="M1 1.6 L2.5 3.4 L4 1.6" fill="none" stroke="#e0e0e0" stroke-width="0.7" stroke-linecap="round" stroke-linejoin="round" /></svg><div style="left:255.40px;top:776.95px;width:81.00px;height:9.30px;background:#565656;border-radius:2px;box-shadow:inset 0 0 0 1px #444444;"></div><div class="t" style="top:777.45px;line-height:8.0px;font-size:6.0px;letter-spacing:-0.180px;color:#e2e2e2;white-space:nowrap;right:1590.40px;text-align:right;word-spacing:-0.75px;text-shadow:0 0 1px rgba(0,0,0,0.7),0 0.5px 0.5px rgba(0,0,0,0.6);">0 m</div><div style="left:255.40px;top:787.45px;width:81.00px;height:9.30px;background:#565656;border-radius:2px;box-shadow:inset 0 0 0 1px #444444;"></div><div class="t" style="top:787.95px;line-height:8.0px;font-size:6.0px;letter-spacing:-0.180px;color:#e2e2e2;white-space:nowrap;right:1590.40px;text-align:right;word-spacing:-0.75px;text-shadow:0 0 1px rgba(0,0,0,0.7),0 0.5px 0.5px rgba(0,0,0,0.6);">0 m</div><div style="left:255.40px;top:797.95px;width:81.00px;height:9.30px;background:#565656;border-radius:2px;box-shadow:inset 0 0 0 1px #444444;"></div><div class="t" style="top:798.45px;line-height:8.0px;font-size:6.0px;letter-spacing:-0.180px;color:#e2e2e2;white-space:nowrap;right:1590.40px;text-align:right;word-spacing:-0.75px;text-shadow:0 0 1px rgba(0,0,0,0.7),0 0.5px 0.5px rgba(0,0,0,0.6);">0 m</div><div style="left:255.40px;top:821.15px;width:81.00px;height:9.30px;background:#565656;border-radius:2px;box-shadow:inset 0 0 0 1px #444444;"></div><div class="t" style="top:821.65px;line-height:8.0px;font-size:6.0px;letter-spacing:-0.180px;color:#e2e2e2;white-space:nowrap;right:1590.40px;text-align:right;word-spacing:-0.75px;text-shadow:0 0 1px rgba(0,0,0,0.7),0 0.5px 0.5px rgba(0,0,0,0.6);">0°</div><div style="left:255.40px;top:831.55px;width:81.00px;height:9.30px;background:#565656;border-radius:2px;box-shadow:inset 0 0 0 1px #444444;"></div><div class="t" style="top:832.05px;line-height:8.0px;font-size:6.0px;letter-spacing:-0.180px;color:#e2e2e2;white-space:nowrap;right:1590.40px;text-align:right;word-spacing:-0.75px;text-shadow:0 0 1px rgba(0,0,0,0.7),0 0.5px 0.5px rgba(0,0,0,0.6);">0°</div><div style="left:255.40px;top:841.95px;width:81.00px;height:9.30px;background:#565656;border-radius:2px;box-shadow:inset 0 0 0 1px #444444;"></div><div class="t" style="top:842.45px;line-height:8.0px;font-size:6.0px;letter-spacing:-0.180px;color:#e2e2e2;white-space:nowrap;right:1590.40px;text-align:right;word-spacing:-0.75px;text-shadow:0 0 1px rgba(0,0,0,0.7),0 0.5px 0.5px rgba(0,0,0,0.6);">0°</div><div style="left:255.40px;top:865.25px;width:81.00px;height:9.30px;background:#565656;border-radius:2px;box-shadow:inset 0 0 0 1px #444444;"></div><div class="t" style="top:865.75px;line-height:8.0px;font-size:6.0px;letter-spacing:-0.180px;color:#e2e2e2;white-space:nowrap;right:1590.40px;text-align:right;word-spacing:-0.75px;text-shadow:0 0 1px rgba(0,0,0,0.7),0 0.5px 0.5px rgba(0,0,0,0.6);">1.000</div><div style="left:255.40px;top:875.65px;width:81.00px;height:9.30px;background:#565656;border-radius:2px;box-shadow:inset 0 0 0 1px #444444;"></div><div class="t" style="top:876.15px;line-height:8.0px;font-size:6.0px;letter-spacing:-0.180px;color:#e2e2e2;white-space:nowrap;right:1590.40px;text-align:right;word-spacing:-0.75px;text-shadow:0 0 1px rgba(0,0,0,0.7),0 0.5px 0.5px rgba(0,0,0,0.6);">1.000</div><div style="left:255.40px;top:886.05px;width:81.00px;height:9.30px;background:#565656;border-radius:2px;box-shadow:inset 0 0 0 1px #444444;"></div><div class="t" style="top:886.55px;line-height:8.0px;font-size:6.0px;letter-spacing:-0.180px;color:#e2e2e2;white-space:nowrap;right:1590.40px;text-align:right;word-spacing:-0.75px;text-shadow:0 0 1px rgba(0,0,0,0.7),0 0.5px 0.5px rgba(0,0,0,0.6);">1.000</div><div class="t" style="top:713.05px;line-height:8.0px;font-size:6.0px;letter-spacing:-0.180px;color:#e2e2e2;white-space:nowrap;left:294.50px;word-spacing:-0.75px;text-shadow:0 0 1px rgba(0,0,0,0.7),0 0.5px 0.5px rgba(0,0,0,0.6);">ing</div><div class="t" style="top:742.15px;line-height:8.0px;font-size:6.0px;letter-spacing:-0.180px;color:#e2e2e2;white-space:nowrap;left:297.00px;word-spacing:-0.75px;text-shadow:0 0 1px rgba(0,0,0,0.7),0 0.5px 0.5px rgba(0,0,0,0.6);">Point</div><div class="t" style="top:766.85px;line-height:8.0px;font-size:6.0px;letter-spacing:-0.180px;color:#e2e2e2;white-space:nowrap;left:294.30px;word-spacing:-0.75px;text-shadow:0 0 1px rgba(0,0,0,0.7),0 0.5px 0.5px rgba(0,0,0,0.6);">:</div><div class="t" style="top:810.85px;line-height:8.0px;font-size:6.0px;letter-spacing:-0.180px;color:#e2e2e2;white-space:nowrap;left:294.30px;word-spacing:-0.75px;text-shadow:0 0 1px rgba(0,0,0,0.7),0 0.5px 0.5px rgba(0,0,0,0.6);">:</div><div style="left:522.0px;top:541.9px;width:74.0px;height:114.6px;background:#303030;border-radius:3px;box-shadow:0 1.5px 4px rgba(0,0,0,0.55);overflow:hidden"><div style="left:0.00px;top:0.00px;width:74.00px;height:10.40px;background:#83491f;"></div></div><svg style="position:absolute;left:527.20px;top:543.90px;" width="6" height="6" viewBox="0 0 6 6"><path d="M1 2 L3 4.4 L5 2" fill="none" stroke="#e0e0e0" stroke-width="0.8" stroke-linecap="round" stroke-linejoin="round" /></svg><div class="t" style="top:542.05px;line-height:8.0px;font-size:6.0px;letter-spacing:-0.180px;color:#e2e2e2;white-space:nowrap;left:535.00px;word-spacing:-0.75px;text-shadow:0 0 1px rgba(0,0,0,0.7),0 0.5px 0.5px rgba(0,0,0,0.6);">Noise Texture</div><div class="t" style="top:555.85px;line-height:8.0px;font-size:6.0px;letter-spacing:-0.180px;color:#e2e2e2;white-space:nowrap;right:1330.60px;text-align:right;word-spacing:-0.75px;text-shadow:0 0 1px rgba(0,0,0,0.7),0 0.5px 0.5px rgba(0,0,0,0.6);">Fac</div><div class="t" style="top:567.75px;line-height:8.0px;font-size:6.0px;letter-spacing:-0.180px;color:#e2e2e2;white-space:nowrap;right:1330.60px;text-align:right;word-spacing:-0.75px;text-shadow:0 0 1px rgba(0,0,0,0.7),0 0.5px 0.5px rgba(0,0,0,0.6);">Color</div><div style="left:527.40px;top:583.20px;width:63.20px;height:10.00px;background:#282828;border-radius:2px;box-shadow:inset 0 0 0 1px #474747;"></div><div class="t" style="top:584.05px;line-height:8.0px;font-size:6.0px;letter-spacing:-0.180px;color:#e2e2e2;white-space:nowrap;left:531.00px;word-spacing:-0.75px;text-shadow:0 0 1px rgba(0,0,0,0.7),0 0.5px 0.5px rgba(0,0,0,0.6);">3D</div><svg style="position:absolute;left:584.40px;top:586.00px;" width="5" height="5" viewBox="0 0 5 5"><path d="M1 1.6 L2.5 3.4 L4 1.6" fill="none" stroke="#e0e0e0" stroke-width="0.7" stroke-linecap="round" stroke-linejoin="round" /></svg><div class="t" style="top:596.85px;line-height:8.0px;font-size:6.0px;letter-spacing:-0.180px;color:#e2e2e2;white-space:nowrap;left:528.20px;word-spacing:-0.75px;text-shadow:0 0 1px rgba(0,0,0,0.7),0 0.5px 0.5px rgba(0,0,0,0.6);">Vector</div><div style="left:527.40px;top:608.55px;width:63.20px;height:9.30px;background:#565656;border-radius:2px;box-shadow:inset 0 0 0 1px #444444;"></div><div class="t" style="top:609.05px;line-height:8.0px;font-size:6.0px;letter-spacing:-0.180px;color:#e2e2e2;white-space:nowrap;left:534.60px;word-spacing:-0.75px;text-shadow:0 0 1px rgba(0,0,0,0.7),0 0.5px 0.5px rgba(0,0,0,0.6);">Scale</div><div class="t" style="top:609.05px;line-height:8.0px;font-size:6.0px;letter-spacing:-0.180px;color:#e2e2e2;white-space:nowrap;right:1336.20px;text-align:right;word-spacing:-0.75px;text-shadow:0 0 1px rgba(0,0,0,0.7),0 0.5px 0.5px rgba(0,0,0,0.6);">8.000</div><div style="left:527.40px;top:620.35px;width:63.20px;height:9.30px;background:#565656;border-radius:2px;box-shadow:inset 0 0 0 1px #444444;"></div><div class="t" style="top:620.85px;line-height:8.0px;font-size:6.0px;letter-spacing:-0.180px;color:#e2e2e2;white-space:nowrap;left:534.60px;word-spacing:-0.75px;text-shadow:0 0 1px rgba(0,0,0,0.7),0 0.5px 0.5px rgba(0,0,0,0.6);">Detail</div><div class="t" style="top:620.85px;line-height:8.0px;font-size:6.0px;letter-spacing:-0.180px;color:#e2e2e2;white-space:nowrap;right:1336.20px;text-align:right;word-spacing:-0.75px;text-shadow:0 0 1px rgba(0,0,0,0.7),0 0.5px 0.5px rgba(0,0,0,0.6);">15.000</div><div style="left:527.40px;top:632.15px;width:63.20px;height:9.30px;background:#565656;border-radius:2px;box-shadow:inset 0 0 0 1px #444444;"></div><div style="left:527.80px;top:632.65px;width:30.34px;height:8.30px;background:#4772b3;border-radius:1.6px 0 0 1.6px;"></div><div class="t" style="top:632.65px;line-height:8.0px;font-size:6.0px;letter-spacing:-0.180px;color:#e2e2e2;white-space:nowrap;left:534.60px;word-spacing:-0.75px;text-shadow:0 0 1px rgba(0,0,0,0.7),0 0.5px 0.5px rgba(0,0,0,0.6);">Roughness</div><div class="t" style="top:632.65px;line-height:8.0px;font-size:6.0px;letter-spacing:-0.180px;color:#e2e2e2;white-space:nowrap;right:1336.20px;text-align:right;word-spacing:-0.75px;text-shadow:0 0 1px rgba(0,0,0,0.7),0 0.5px 0.5px rgba(0,0,0,0.6);">0.500</div><div style="left:527.40px;top:643.95px;width:63.20px;height:9.30px;background:#565656;border-radius:2px;box-shadow:inset 0 0 0 1px #444444;"></div><div class="t" style="top:644.45px;line-height:8.0px;font-size:6.0px;letter-spacing:-0.180px;color:#e2e2e2;white-space:nowrap;left:534.60px;word-spacing:-0.75px;text-shadow:0 0 1px rgba(0,0,0,0.7),0 0.5px 0.5px rgba(0,0,0,0.6);">Distortion</div><div class="t" style="top:644.45px;line-height:8.0px;font-size:6.0px;letter-spacing:-0.180px;color:#e2e2e2;white-space:nowrap;right:1336.20px;text-align:right;word-spacing:-0.75px;text-shadow:0 0 1px rgba(0,0,0,0.7),0 0.5px 0.5px rgba(0,0,0,0.6);">0.000</div><div style="left:397.3px;top:800.8px;width:73.7px;height:114.5px;background:#303030;border-radius:3px;box-shadow:0 1.5px 4px rgba(0,0,0,0.55);overflow:hidden"><div style="left:0.00px;top:0.00px;width:73.70px;height:10.40px;background:#83491f;"></div></div><svg style="position:absolute;left:402.50px;top:802.80px;" width="6" height="6" viewBox="0 0 6 6"><path d="M1 2 L3 4.4 L5 2" fill="none" stroke="#e0e0e0" stroke-width="0.8" stroke-linecap="round" stroke-linejoin="round" /></svg><div class="t" style="top:800.95px;line-height:8.0px;font-size:6.0px;letter-spacing:-0.180px;color:#e2e2e2;white-space:nowrap;left:410.30px;word-spacing:-0.75px;text-shadow:0 0 1px rgba(0,0,0,0.7),0 0.5px 0.5px rgba(0,0,0,0.6);">Noise Texture</div><div class="t" style="top:814.85px;line-height:8.0px;font-size:6.0px;letter-spacing:-0.180px;color:#e2e2e2;white-space:nowrap;right:1455.60px;text-align:right;word-spacing:-0.75px;text-shadow:0 0 1px rgba(0,0,0,0.7),0 0.5px 0.5px rgba(0,0,0,0.6);">Fac</div><div class="t" style="top:826.65px;line-height:8.0px;font-size:6.0px;letter-spacing:-0.180px;color:#e2e2e2;white-space:nowrap;right:1455.60px;text-align:right;word-spacing:-0.75px;text-shadow:0 0 1px rgba(0,0,0,0.7),0 0.5px 0.5px rgba(0,0,0,0.6);">Color</div><div style="left:402.70px;top:842.00px;width:62.90px;height:10.00px;background:#282828;border-radius:2px;box-shadow:inset 0 0 0 1px #474747;"></div><div class="t" style="top:842.85px;line-height:8.0px;font-size:6.0px;letter-spacing:-0.180px;color:#e2e2e2;white-space:nowrap;left:406.30px;word-spacing:-0.75px;text-shadow:0 0 1px rgba(0,0,0,0.7),0 0.5px 0.5px rgba(0,0,0,0.6);">3D</div><svg style="position:absolute;left:459.40px;top:844.80px;" width="5" height="5" viewBox="0 0 5 5"><path d="M1 1.6 L2.5 3.4 L4 1.6" fill="none" stroke="#e0e0e0" stroke-width="0.7" stroke-linecap="round" stroke-linejoin="round" /></svg><div class="t" style="top:855.65px;line-height:8.0px;font-size:6.0px;letter-spacing:-0.180px;color:#e2e2e2;white-space:nowrap;left:403.50px;word-spacing:-0.75px;text-shadow:0 0 1px rgba(0,0,0,0.7),0 0.5px 0.5px rgba(0,0,0,0.6);">Vector</div><div style="left:402.70px;top:867.25px;width:62.90px;height:9.30px;background:#565656;border-radius:2px;box-shadow:inset 0 0 0 1px #444444;"></div><div class="t" style="top:867.75px;line-height:8.0px;font-size:6.0px;letter-spacing:-0.180px;color:#e2e2e2;white-space:nowrap;left:409.90px;word-spacing:-0.75px;text-shadow:0 0 1px rgba(0,0,0,0.7),0 0.5px 0.5px rgba(0,0,0,0.6);">Scale</div><div class="t" style="top:867.75px;line-height:8.0px;font-size:6.0px;letter-spacing:-0.180px;color:#e2e2e2;white-space:nowrap;right:1461.20px;text-align:right;word-spacing:-0.75px;text-shadow:0 0 1px rgba(0,0,0,0.7),0 0.5px 0.5px rgba(0,0,0,0.6);">50.000</div><div style="left:402.70px;top:879.05px;width:62.90px;height:9.30px;background:#565656;border-radius:2px;box-shadow:inset 0 0 0 1px #444444;"></div><div class="t" style="top:879.55px;line-height:8.0px;font-size:6.0px;letter-spacing:-0.180px;color:#e2e2e2;white-space:nowrap;left:409.90px;word-spacing:-0.75px;text-shadow:0 0 1px rgba(0,0,0,0.7),0 0.5px 0.5px rgba(0,0,0,0.6);">Detail</div><div class="t" style="top:879.55px;line-height:8.0px;font-size:6.0px;letter-spacing:-0.180px;color:#e2e2e2;white-space:nowrap;right:1461.20px;text-align:right;word-spacing:-0.75px;text-shadow:0 0 1px rgba(0,0,0,0.7),0 0.5px 0.5px rgba(0,0,0,0.6);">15.000</div><div style="left:402.70px;top:891.15px;width:62.90px;height:9.30px;background:#565656;border-radius:2px;box-shadow:inset 0 0 0 1px #444444;"></div><div style="left:403.10px;top:891.65px;width:30.19px;height:8.30px;background:#4772b3;border-radius:1.6px 0 0 1.6px;"></div><div class="t" style="top:891.65px;line-height:8.0px;font-size:6.0px;letter-spacing:-0.180px;color:#e2e2e2;white-space:nowrap;left:409.90px;word-spacing:-0.75px;text-shadow:0 0 1px rgba(0,0,0,0.7),0 0.5px 0.5px rgba(0,0,0,0.6);">Roughness</div><div class="t" style="top:891.65px;line-height:8.0px;font-size:6.0px;letter-spacing:-0.180px;color:#e2e2e2;white-space:nowrap;right:1461.20px;text-align:right;word-spacing:-0.75px;text-shadow:0 0 1px rgba(0,0,0,0.7),0 0.5px 0.5px rgba(0,0,0,0.6);">0.500</div><div style="left:402.70px;top:902.95px;width:62.90px;height:9.30px;background:#565656;border-radius:2px;box-shadow:inset 0 0 0 1px #444444;"></div><div class="t" style="top:903.45px;line-height:8.0px;font-size:6.0px;letter-spacing:-0.180px;color:#e2e2e2;white-space:nowrap;left:409.90px;word-spacing:-0.75px;text-shadow:0 0 1px rgba(0,0,0,0.7),0 0.5px 0.5px rgba(0,0,0,0.6);">Distortion</div><div class="t" style="top:903.45px;line-height:8.0px;font-size:6.0px;letter-spacing:-0.180px;color:#e2e2e2;white-space:nowrap;right:1461.20px;text-align:right;word-spacing:-0.75px;text-shadow:0 0 1px rgba(0,0,0,0.7),0 0.5px 0.5px rgba(0,0,0,0.6);">0.000</div><div style="left:515.7px;top:676.8px;width:79.5px;height:207.9px;background:#303030;border-radius:3px;box-shadow:0 1.5px 4px rgba(0,0,0,0.55);overflow:hidden"><div style="left:0.00px;top:0.00px;width:79.50px;height:10.40px;background:#83491f;"></div></div><svg style="position:absolute;left:520.90px;top:678.80px;" width="6" height="6" viewBox="0 0 6 6"><path d="M1 2 L3 4.4 L5 2" fill="none" stroke="#e0e0e0" stroke-width="0.8" stroke-linecap="round" stroke-linejoin="round" /></svg><div class="t" style="top:676.95px;line-height:8.0px;font-size:6.0px;letter-spacing:-0.180px;color:#e2e2e2;white-space:nowrap;left:528.70px;word-spacing:-0.75px;text-shadow:0 0 1px rgba(0,0,0,0.7),0 0.5px 0.5px rgba(0,0,0,0.6);">Brick Texture</div><div class="t" style="top:690.75px;line-height:8.0px;font-size:6.0px;letter-spacing:-0.180px;color:#e2e2e2;white-space:nowrap;right:1331.40px;text-align:right;word-spacing:-0.75px;text-shadow:0 0 1px rgba(0,0,0,0.7),0 0.5px 0.5px rgba(0,0,0,0.6);">Color</div><div class="t" style="top:702.75px;line-height:8.0px;font-size:6.0px;letter-spacing:-0.180px;color:#e2e2e2;white-space:nowrap;right:1331.40px;text-align:right;word-spacing:-0.75px;text-shadow:0 0 1px rgba(0,0,0,0.7),0 0.5px 0.5px rgba(0,0,0,0.6);">Fac</div><div style="left:521.10px;top:718.05px;width:68.70px;height:9.30px;background:#565656;border-radius:2px;box-shadow:inset 0 0 0 1px #444444;"></div><div style="left:521.50px;top:718.55px;width:32.98px;height:8.30px;background:#4772b3;border-radius:1.6px 0 0 1.6px;"></div><div class="t" style="top:718.55px;line-height:8.0px;font-size:6.0px;letter-spacing:-0.180px;color:#e2e2e2;white-space:nowrap;left:528.30px;word-spacing:-0.75px;text-shadow:0 0 1px rgba(0,0,0,0.7),0 0.5px 0.5px rgba(0,0,0,0.6);">Offset</div><div class="t" style="top:718.55px;line-height:8.0px;font-size:6.0px;letter-spacing:-0.180px;color:#e2e2e2;white-space:nowrap;right:1337.00px;text-align:right;word-spacing:-0.75px;text-shadow:0 0 1px rgba(0,0,0,0.7),0 0.5px 0.5px rgba(0,0,0,0.6);">0.500</div><div style="left:521.10px;top:728.25px;width:68.70px;height:9.30px;background:#565656;border-radius:2px;box-shadow:inset 0 0 0 1px #444444;"></div><div class="t" style="top:728.75px;line-height:8.0px;font-size:6.0px;letter-spacing:-0.180px;color:#e2e2e2;white-space:nowrap;left:528.30px;word-spacing:-0.75px;text-shadow:0 0 1px rgba(0,0,0,0.7),0 0.5px 0.5px rgba(0,0,0,0.6);">Frequency</div><div class="t" style="top:728.75px;line-height:8.0px;font-size:6.0px;letter-spacing:-0.180px;color:#e2e2e2;white-space:nowrap;right:1337.00px;text-align:right;word-spacing:-0.75px;text-shadow:0 0 1px rgba(0,0,0,0.7),0 0.5px 0.5px rgba(0,0,0,0.6);">2</div><div style="left:521.10px;top:742.15px;width:68.70px;height:9.30px;background:#565656;border-radius:2px;box-shadow:inset 0 0 0 1px #444444;"></div><div class="t" style="top:742.65px;line-height:8.0px;font-size:6.0px;letter-spacing:-0.180px;color:#e2e2e2;white-space:nowrap;left:528.30px;word-spacing:-0.75px;text-shadow:0 0 1px rgba(0,0,0,0.7),0 0.5px 0.5px rgba(0,0,0,0.6);">Squash</div><div class="t" style="top:742.65px;line-height:8.0px;font-size:6.0px;letter-spacing:-0.180px;color:#e2e2e2;white-space:nowrap;right:1337.00px;text-align:right;word-spacing:-0.75px;text-shadow:0 0 1px rgba(0,0,0,0.7),0 0.5px 0.5px rgba(0,0,0,0.6);">1.000</div><div style="left:521.10px;top:752.35px;width:68.70px;height:9.30px;background:#565656;border-radius:2px;box-shadow:inset 0 0 0 1px #444444;"></div><div class="t" style="top:752.85px;line-height:8.0px;font-size:6.0px;letter-spacing:-0.180px;color:#e2e2e2;white-space:nowrap;left:528.30px;word-spacing:-0.75px;text-shadow:0 0 1px rgba(0,0,0,0.7),0 0.5px 0.5px rgba(0,0,0,0.6);">Frequency</div><div class="t" style="top:752.85px;line-height:8.0px;font-size:6.0px;letter-spacing:-0.180px;color:#e2e2e2;white-space:nowrap;right:1337.00px;text-align:right;word-spacing:-0.75px;text-shadow:0 0 1px rgba(0,0,0,0.7),0 0.5px 0.5px rgba(0,0,0,0.6);">2</div><div class="t" style="top:766.75px;line-height:8.0px;font-size:6.0px;letter-spacing:-0.180px;color:#e2e2e2;white-space:nowrap;left:521.90px;word-spacing:-0.75px;text-shadow:0 0 1px rgba(0,0,0,0.7),0 0.5px 0.5px rgba(0,0,0,0.6);">Vector</div><div class="t" style="top:778.85px;line-height:8.0px;font-size:6.0px;letter-spacing:-0.180px;color:#e2e2e2;white-space:nowrap;left:521.90px;word-spacing:-0.75px;text-shadow:0 0 1px rgba(0,0,0,0.7),0 0.5px 0.5px rgba(0,0,0,0.6);">Color1</div><div style="left:550.80px;top:778.50px;width:39.00px;height:9.00px;background:#ec6847;border-radius:1.5px;box-shadow:inset 0 0 0 1px #2a2a2a;"></div><div class="t" style="top:790.65px;line-height:8.0px;font-size:6.0px;letter-spacing:-0.180px;color:#e2e2e2;white-space:nowrap;left:521.90px;word-spacing:-0.75px;text-shadow:0 0 1px rgba(0,0,0,0.7),0 0.5px 0.5px rgba(0,0,0,0.6);">Color2</div><div style="left:550.80px;top:790.30px;width:39.00px;height:9.00px;background:#8c2724;border-radius:1.5px;box-shadow:inset 0 0 0 1px #2a2a2a;"></div><div class="t" style="top:802.45px;line-height:8.0px;font-size:6.0px;letter-spacing:-0.180px;color:#e2e2e2;white-space:nowrap;left:521.90px;word-spacing:-0.75px;text-shadow:0 0 1px rgba(0,0,0,0.7),0 0.5px 0.5px rgba(0,0,0,0.6);">Mortar</div><div style="left:550.80px;top:802.10px;width:39.00px;height:9.00px;background:#5a5a5a;border-radius:1.5px;box-shadow:inset 0 0 0 1px #2a2a2a;"></div><div style="left:521.10px;top:813.35px;width:68.70px;height:9.30px;background:#565656;border-radius:2px;box-shadow:inset 0 0 0 1px #444444;"></div><div class="t" style="top:813.85px;line-height:8.0px;font-size:6.0px;letter-spacing:-0.180px;color:#e2e2e2;white-space:nowrap;left:528.30px;word-spacing:-0.75px;text-shadow:0 0 1px rgba(0,0,0,0.7),0 0.5px 0.5px rgba(0,0,0,0.6);">Scale</div><div class="t" style="top:813.85px;line-height:8.0px;font-size:6.0px;letter-spacing:-0.180px;color:#e2e2e2;white-space:nowrap;right:1337.00px;text-align:right;word-spacing:-0.75px;text-shadow:0 0 1px rgba(0,0,0,0.7),0 0.5px 0.5px rgba(0,0,0,0.6);">2.000</div><div style="left:521.10px;top:825.15px;width:68.70px;height:9.30px;background:#565656;border-radius:2px;box-shadow:inset 0 0 0 1px #444444;"></div><div class="t" style="top:825.65px;line-height:8.0px;font-size:6.0px;letter-spacing:-0.180px;color:#e2e2e2;white-space:nowrap;left:528.30px;word-spacing:-0.75px;text-shadow:0 0 1px rgba(0,0,0,0.7),0 0.5px 0.5px rgba(0,0,0,0.6);">Mortar Size</div><div class="t" style="top:825.65px;line-height:8.0px;font-size:6.0px;letter-spacing:-0.180px;color:#e2e2e2;white-space:nowrap;right:1337.00px;text-align:right;word-spacing:-0.75px;text-shadow:0 0 1px rgba(0,0,0,0.7),0 0.5px 0.5px rgba(0,0,0,0.6);">0.020</div><div class="t" style="top:837.75px;line-height:8.0px;font-size:6.0px;letter-spacing:-0.180px;color:#e2e2e2;white-space:nowrap;left:521.90px;word-spacing:-0.75px;text-shadow:0 0 1px rgba(0,0,0,0.7),0 0.5px 0.5px rgba(0,0,0,0.6);">Mortar Smooth</div><div style="left:521.10px;top:849.05px;width:68.70px;height:9.30px;background:#565656;border-radius:2px;box-shadow:inset 0 0 0 1px #444444;"></div><div class="t" style="top:849.55px;line-height:8.0px;font-size:6.0px;letter-spacing:-0.180px;color:#e2e2e2;white-space:nowrap;left:528.30px;word-spacing:-0.75px;text-shadow:0 0 1px rgba(0,0,0,0.7),0 0.5px 0.5px rgba(0,0,0,0.6);">Bias</div><div class="t" style="top:849.55px;line-height:8.0px;font-size:6.0px;letter-spacing:-0.180px;color:#e2e2e2;white-space:nowrap;right:1337.00px;text-align:right;word-spacing:-0.75px;text-shadow:0 0 1px rgba(0,0,0,0.7),0 0.5px 0.5px rgba(0,0,0,0.6);">0.000</div><div style="left:521.10px;top:861.15px;width:68.70px;height:9.30px;background:#565656;border-radius:2px;box-shadow:inset 0 0 0 1px #444444;"></div><div class="t" style="top:861.65px;line-height:8.0px;font-size:6.0px;letter-spacing:-0.180px;color:#e2e2e2;white-space:nowrap;left:528.30px;word-spacing:-0.75px;text-shadow:0 0 1px rgba(0,0,0,0.7),0 0.5px 0.5px rgba(0,0,0,0.6);">Brick Width</div><div class="t" style="top:861.65px;line-height:8.0px;font-size:6.0px;letter-spacing:-0.180px;color:#e2e2e2;white-space:nowrap;right:1337.00px;text-align:right;word-spacing:-0.75px;text-shadow:0 0 1px rgba(0,0,0,0.7),0 0.5px 0.5px rgba(0,0,0,0.6);">0.500</div><div style="left:521.10px;top:872.35px;width:68.70px;height:9.30px;background:#565656;border-radius:2px;box-shadow:inset 0 0 0 1px #444444;"></div><div class="t" style="top:872.85px;line-height:8.0px;font-size:6.0px;letter-spacing:-0.180px;color:#e2e2e2;white-space:nowrap;left:528.30px;word-spacing:-0.75px;text-shadow:0 0 1px rgba(0,0,0,0.7),0 0.5px 0.5px rgba(0,0,0,0.6);">Row Height</div><div class="t" style="top:872.85px;line-height:8.0px;font-size:6.0px;letter-spacing:-0.180px;color:#e2e2e2;white-space:nowrap;right:1337.00px;text-align:right;word-spacing:-0.75px;text-shadow:0 0 1px rgba(0,0,0,0.7),0 0.5px 0.5px rgba(0,0,0,0.6);">0.250</div><div style="left:671.0px;top:615.8px;width:75.0px;height:118.8px;background:#303030;border-radius:3px;box-shadow:0 1.5px 4px rgba(0,0,0,0.55);overflow:hidden"><div style="left:0.00px;top:0.00px;width:75.00px;height:10.40px;background:#6b6b1f;"></div></div><svg style="position:absolute;left:676.20px;top:617.80px;" width="6" height="6" viewBox="0 0 6 6"><path d="M1 2 L3 4.4 L5 2" fill="none" stroke="#e0e0e0" stroke-width="0.8" stroke-linecap="round" stroke-linejoin="round" /></svg><div class="t" style="top:615.95px;line-height:8.0px;font-size:6.0px;letter-spacing:-0.180px;color:#e2e2e2;white-space:nowrap;left:684.00px;word-spacing:-0.75px;text-shadow:0 0 1px rgba(0,0,0,0.7),0 0.5px 0.5px rgba(0,0,0,0.6);">Mix</div><div class="t" style="top:629.65px;line-height:8.0px;font-size:6.0px;letter-spacing:-0.180px;color:#e2e2e2;white-space:nowrap;right:1180.60px;text-align:right;word-spacing:-0.75px;text-shadow:0 0 1px rgba(0,0,0,0.7),0 0.5px 0.5px rgba(0,0,0,0.6);">Result</div><div style="left:676.40px;top:645.00px;width:64.20px;height:10.00px;background:#282828;border-radius:2px;box-shadow:inset 0 0 0 1px #474747;"></div><div class="t" style="top:645.85px;line-height:8.0px;font-size:6.0px;letter-spacing:-0.180px;color:#e2e2e2;white-space:nowrap;left:680.00px;word-spacing:-0.75px;text-shadow:0 0 1px rgba(0,0,0,0.7),0 0.5px 0.5px rgba(0,0,0,0.6);">Color</div><svg style="position:absolute;left:734.40px;top:647.80px;" width="5" height="5" viewBox="0 0 5 5"><path d="M1 1.6 L2.5 3.4 L4 1.6" fill="none" stroke="#e0e0e0" stroke-width="0.7" stroke-linecap="round" stroke-linejoin="round" /></svg><div style="left:676.40px;top:658.20px;width:64.20px;height:10.00px;background:#282828;border-radius:2px;box-shadow:inset 0 0 0 1px #474747;"></div><div class="t" style="top:659.05px;line-height:8.0px;font-size:6.0px;letter-spacing:-0.180px;color:#e2e2e2;white-space:nowrap;left:680.00px;word-spacing:-0.75px;text-shadow:0 0 1px rgba(0,0,0,0.7),0 0.5px 0.5px rgba(0,0,0,0.6);">Mix</div><svg style="position:absolute;left:734.40px;top:661.00px;" width="5" height="5" viewBox="0 0 5 5"><path d="M1 1.6 L2.5 3.4 L4 1.6" fill="none" stroke="#e0e0e0" stroke-width="0.7" stroke-linecap="round" stroke-linejoin="round" /></svg><div style="left:676.40px;top:673.60px;width:6.60px;height:6.60px;background:#4e4e4e;border-radius:1.2px;"></div><div class="t" style="top:672.85px;line-height:8.0px;font-size:6.0px;letter-spacing:-0.180px;color:#e2e2e2;white-space:nowrap;left:684.60px;word-spacing:-0.75px;text-shadow:0 0 1px rgba(0,0,0,0.7),0 0.5px 0.5px rgba(0,0,0,0.6);">Clamp Result</div><div style="left:676.40px;top:686.60px;width:6.60px;height:6.60px;background:#4772b3;border-radius:1.2px;"></div><svg style="position:absolute;left:676.40px;top:686.60px;" width="6.6" height="6.6" viewBox="0 0 6.6 6.6"><path d="M1.4 3.4 L2.8 5 L5.3 1.7" fill="none" stroke="#ffffff" stroke-width="0.95" stroke-linecap="round" stroke-linejoin="round" /></svg><div class="t" style="top:685.85px;line-height:8.0px;font-size:6.0px;letter-spacing:-0.180px;color:#e2e2e2;white-space:nowrap;left:684.60px;word-spacing:-0.75px;text-shadow:0 0 1px rgba(0,0,0,0.7),0 0.5px 0.5px rgba(0,0,0,0.6);">Clamp Factor</div><div class="t" style="top:699.15px;line-height:8.0px;font-size:6.0px;letter-spacing:-0.180px;color:#e2e2e2;white-space:nowrap;left:677.20px;word-spacing:-0.75px;text-shadow:0 0 1px rgba(0,0,0,0.7),0 0.5px 0.5px rgba(0,0,0,0.6);">Factor</div><div class="t" style="top:711.15px;line-height:8.0px;font-size:6.0px;letter-spacing:-0.180px;color:#e2e2e2;white-space:nowrap;left:677.20px;word-spacing:-0.75px;text-shadow:0 0 1px rgba(0,0,0,0.7),0 0.5px 0.5px rgba(0,0,0,0.6);">A</div><div class="t" style="top:723.15px;line-height:8.0px;font-size:6.0px;letter-spacing:-0.180px;color:#e2e2e2;white-space:nowrap;left:677.20px;word-spacing:-0.75px;text-shadow:0 0 1px rgba(0,0,0,0.7),0 0.5px 0.5px rgba(0,0,0,0.6);">B</div><div style="left:704.70px;top:722.80px;width:35.90px;height:9.00px;background:#4a1a0e;border-radius:1.5px;box-shadow:inset 0 0 0 1px #2a2a2a;"></div><div style="left:678.0px;top:811.0px;width:74.1px;height:90.5px;background:#303030;border-radius:3px;box-shadow:0 1.5px 4px rgba(0,0,0,0.55);overflow:hidden"><div style="left:0.00px;top:0.00px;width:74.10px;height:10.40px;background:#3c3c83;"></div></div><svg style="position:absolute;left:683.20px;top:813.00px;" width="6" height="6" viewBox="0 0 6 6"><path d="M1 2 L3 4.4 L5 2" fill="none" stroke="#e0e0e0" stroke-width="0.8" stroke-linecap="round" stroke-linejoin="round" /></svg><div class="t" style="top:811.15px;line-height:8.0px;font-size:6.0px;letter-spacing:-0.180px;color:#e2e2e2;white-space:nowrap;left:691.00px;word-spacing:-0.75px;text-shadow:0 0 1px rgba(0,0,0,0.7),0 0.5px 0.5px rgba(0,0,0,0.6);">Bump</div><div class="t" style="top:824.65px;line-height:8.0px;font-size:6.0px;letter-spacing:-0.180px;color:#e2e2e2;white-space:nowrap;right:1174.50px;text-align:right;word-spacing:-0.75px;text-shadow:0 0 1px rgba(0,0,0,0.7),0 0.5px 0.5px rgba(0,0,0,0.6);">Normal</div><div style="left:683.40px;top:841.20px;width:6.60px;height:6.60px;background:#4e4e4e;border-radius:1.2px;"></div><div class="t" style="top:840.45px;line-height:8.0px;font-size:6.0px;letter-spacing:-0.180px;color:#e2e2e2;white-space:nowrap;left:691.60px;word-spacing:-0.75px;text-shadow:0 0 1px rgba(0,0,0,0.7),0 0.5px 0.5px rgba(0,0,0,0.6);">Invert</div><div style="left:683.40px;top:853.05px;width:63.30px;height:9.30px;background:#565656;border-radius:2px;box-shadow:inset 0 0 0 1px #444444;"></div><div style="left:683.80px;top:853.55px;width:62.50px;height:8.30px;background:#4772b3;border-radius:1.6px;"></div><div class="t" style="top:853.55px;line-height:8.0px;font-size:6.0px;letter-spacing:-0.180px;color:#e2e2e2;white-space:nowrap;left:690.60px;word-spacing:-0.75px;text-shadow:0 0 1px rgba(0,0,0,0.7),0 0.5px 0.5px rgba(0,0,0,0.6);">Strength</div><div class="t" style="top:853.55px;line-height:8.0px;font-size:6.0px;letter-spacing:-0.180px;color:#e2e2e2;white-space:nowrap;right:1180.10px;text-align:right;word-spacing:-0.75px;text-shadow:0 0 1px rgba(0,0,0,0.7),0 0.5px 0.5px rgba(0,0,0,0.6);">1.000</div><div style="left:683.40px;top:865.25px;width:63.30px;height:9.30px;background:#565656;border-radius:2px;box-shadow:inset 0 0 0 1px #444444;"></div><div class="t" style="top:865.75px;line-height:8.0px;font-size:6.0px;letter-spacing:-0.180px;color:#e2e2e2;white-space:nowrap;left:690.60px;word-spacing:-0.75px;text-shadow:0 0 1px rgba(0,0,0,0.7),0 0.5px 0.5px rgba(0,0,0,0.6);">Distance</div><div class="t" style="top:865.75px;line-height:8.0px;font-size:6.0px;letter-spacing:-0.180px;color:#e2e2e2;white-space:nowrap;right:1180.10px;text-align:right;word-spacing:-0.75px;text-shadow:0 0 1px rgba(0,0,0,0.7),0 0.5px 0.5px rgba(0,0,0,0.6);">1.000</div><div class="t" style="top:877.45px;line-height:8.0px;font-size:6.0px;letter-spacing:-0.180px;color:#e2e2e2;white-space:nowrap;left:684.20px;word-spacing:-0.75px;text-shadow:0 0 1px rgba(0,0,0,0.7),0 0.5px 0.5px rgba(0,0,0,0.6);">Height</div><div class="t" style="top:889.65px;line-height:8.0px;font-size:6.0px;letter-spacing:-0.180px;color:#e2e2e2;white-space:nowrap;left:684.20px;word-spacing:-0.75px;text-shadow:0 0 1px rgba(0,0,0,0.7),0 0.5px 0.5px rgba(0,0,0,0.6);">Normal</div><div style="left:787.1px;top:812.0px;width:74.1px;height:90.5px;background:#303030;border-radius:3px;box-shadow:0 1.5px 4px rgba(0,0,0,0.55);overflow:hidden"><div style="left:0.00px;top:0.00px;width:74.10px;height:10.40px;background:#3c3c83;"></div></div><svg style="position:absolute;left:792.30px;top:814.00px;" width="6" height="6" viewBox="0 0 6 6"><path d="M1 2 L3 4.4 L5 2" fill="none" stroke="#e0e0e0" stroke-width="0.8" stroke-linecap="round" stroke-linejoin="round" /></svg><div class="t" style="top:812.15px;line-height:8.0px;font-size:6.0px;letter-spacing:-0.180px;color:#e2e2e2;white-space:nowrap;left:800.10px;word-spacing:-0.75px;text-shadow:0 0 1px rgba(0,0,0,0.7),0 0.5px 0.5px rgba(0,0,0,0.6);">Bump</div><div class="t" style="top:825.65px;line-height:8.0px;font-size:6.0px;letter-spacing:-0.180px;color:#e2e2e2;white-space:nowrap;right:1065.40px;text-align:right;word-spacing:-0.75px;text-shadow:0 0 1px rgba(0,0,0,0.7),0 0.5px 0.5px rgba(0,0,0,0.6);">Normal</div><div style="left:792.50px;top:842.20px;width:6.60px;height:6.60px;background:#4e4e4e;border-radius:1.2px;"></div><div class="t" style="top:841.45px;line-height:8.0px;font-size:6.0px;letter-spacing:-0.180px;color:#e2e2e2;white-space:nowrap;left:800.70px;word-spacing:-0.75px;text-shadow:0 0 1px rgba(0,0,0,0.7),0 0.5px 0.5px rgba(0,0,0,0.6);">Invert</div><div style="left:792.50px;top:854.15px;width:63.30px;height:9.30px;background:#565656;border-radius:2px;box-shadow:inset 0 0 0 1px #444444;"></div><div style="left:792.90px;top:854.65px;width:10.13px;height:8.30px;background:#4772b3;border-radius:1.6px 0 0 1.6px;"></div><div class="t" style="top:854.65px;line-height:8.0px;font-size:6.0px;letter-spacing:-0.180px;color:#e2e2e2;white-space:nowrap;left:799.70px;word-spacing:-0.75px;text-shadow:0 0 1px rgba(0,0,0,0.7),0 0.5px 0.5px rgba(0,0,0,0.6);">Strength</div><div class="t" style="top:854.65px;line-height:8.0px;font-size:6.0px;letter-spacing:-0.180px;color:#e2e2e2;white-space:nowrap;right:1071.00px;text-align:right;word-spacing:-0.75px;text-shadow:0 0 1px rgba(0,0,0,0.7),0 0.5px 0.5px rgba(0,0,0,0.6);">0.200</div><div style="left:792.50px;top:866.25px;width:63.30px;height:9.30px;background:#565656;border-radius:2px;box-shadow:inset 0 0 0 1px #444444;"></div><div class="t" style="top:866.75px;line-height:8.0px;font-size:6.0px;letter-spacing:-0.180px;color:#e2e2e2;white-space:nowrap;left:799.70px;word-spacing:-0.75px;text-shadow:0 0 1px rgba(0,0,0,0.7),0 0.5px 0.5px rgba(0,0,0,0.6);">Distance</div><div class="t" style="top:866.75px;line-height:8.0px;font-size:6.0px;letter-spacing:-0.180px;color:#e2e2e2;white-space:nowrap;right:1071.00px;text-align:right;word-spacing:-0.75px;text-shadow:0 0 1px rgba(0,0,0,0.7),0 0.5px 0.5px rgba(0,0,0,0.6);">1.000</div><div class="t" style="top:878.55px;line-height:8.0px;font-size:6.0px;letter-spacing:-0.180px;color:#e2e2e2;white-space:nowrap;left:793.30px;word-spacing:-0.75px;text-shadow:0 0 1px rgba(0,0,0,0.7),0 0.5px 0.5px rgba(0,0,0,0.6);">Height</div><div class="t" style="top:890.65px;line-height:8.0px;font-size:6.0px;letter-spacing:-0.180px;color:#e2e2e2;white-space:nowrap;left:793.30px;word-spacing:-0.75px;text-shadow:0 0 1px rgba(0,0,0,0.7),0 0.5px 0.5px rgba(0,0,0,0.6);">Normal</div><div style="left:888.0px;top:605.8px;width:128.4px;height:353.8px;background:#303030;border-radius:3px;box-shadow:0 0 0 1.1px #ffffff,0 1.5px 4px rgba(0,0,0,0.55);overflow:hidden"><div style="left:0.00px;top:0.00px;width:128.40px;height:10.40px;background:#2b652b;"></div></div><svg style="position:absolute;left:893.20px;top:607.80px;" width="6" height="6" viewBox="0 0 6 6"><path d="M1 2 L3 4.4 L5 2" fill="none" stroke="#e0e0e0" stroke-width="0.8" stroke-linecap="round" stroke-linejoin="round" /></svg><div class="t" style="top:605.95px;line-height:8.0px;font-size:6.0px;letter-spacing:-0.180px;color:#e2e2e2;white-space:nowrap;left:901.00px;word-spacing:-0.75px;text-shadow:0 0 1px rgba(0,0,0,0.7),0 0.5px 0.5px rgba(0,0,0,0.6);">Principled BSDF</div><div class="t" style="top:619.65px;line-height:8.0px;font-size:6.0px;letter-spacing:-0.180px;color:#e2e2e2;white-space:nowrap;right:910.20px;text-align:right;word-spacing:-0.75px;text-shadow:0 0 1px rgba(0,0,0,0.7),0 0.5px 0.5px rgba(0,0,0,0.6);">BSDF</div><div style="left:894.00px;top:635.30px;width:116.40px;height:10.00px;background:#282828;border-radius:2px;box-shadow:inset 0 0 0 1px #474747;"></div><div class="t" style="top:636.15px;line-height:8.0px;font-size:6.0px;letter-spacing:-0.180px;color:#e2e2e2;white-space:nowrap;left:897.60px;word-spacing:-0.75px;text-shadow:0 0 1px rgba(0,0,0,0.7),0 0.5px 0.5px rgba(0,0,0,0.6);">GGX</div><svg style="position:absolute;left:1004.20px;top:638.10px;" width="5" height="5" viewBox="0 0 5 5"><path d="M1 1.6 L2.5 3.4 L4 1.6" fill="none" stroke="#e0e0e0" stroke-width="0.7" stroke-linecap="round" stroke-linejoin="round" /></svg><div style="left:894.00px;top:648.40px;width:116.40px;height:10.00px;background:#282828;border-radius:2px;box-shadow:inset 0 0 0 1px #474747;"></div><div class="t" style="top:649.25px;line-height:8.0px;font-size:6.0px;letter-spacing:-0.180px;color:#e2e2e2;white-space:nowrap;left:897.60px;word-spacing:-0.75px;text-shadow:0 0 1px rgba(0,0,0,0.7),0 0.5px 0.5px rgba(0,0,0,0.6);">Random Walk</div><svg style="position:absolute;left:1004.20px;top:651.20px;" width="5" height="5" viewBox="0 0 5 5"><path d="M1 1.6 L2.5 3.4 L4 1.6" fill="none" stroke="#e0e0e0" stroke-width="0.7" stroke-linecap="round" stroke-linejoin="round" /></svg><div class="t" style="top:662.85px;line-height:8.0px;font-size:6.0px;letter-spacing:-0.180px;color:#e2e2e2;white-space:nowrap;left:894.20px;word-spacing:-0.75px;text-shadow:0 0 1px rgba(0,0,0,0.7),0 0.5px 0.5px rgba(0,0,0,0.6);">Base Color</div><div style="left:894.00px;top:674.35px;width:116.40px;height:9.30px;background:#565656;border-radius:2px;box-shadow:inset 0 0 0 1px #444444;"></div><div class="t" style="top:674.85px;line-height:8.0px;font-size:6.0px;letter-spacing:-0.180px;color:#e2e2e2;white-space:nowrap;left:901.20px;word-spacing:-0.75px;text-shadow:0 0 1px rgba(0,0,0,0.7),0 0.5px 0.5px rgba(0,0,0,0.6);">Subsurface</div><div class="t" style="top:674.85px;line-height:8.0px;font-size:6.0px;letter-spacing:-0.180px;color:#e2e2e2;white-space:nowrap;right:916.40px;text-align:right;word-spacing:-0.75px;text-shadow:0 0 1px rgba(0,0,0,0.7),0 0.5px 0.5px rgba(0,0,0,0.6);">0.000</div><div style="left:894.00px;top:685.30px;width:116.40px;height:10.00px;background:#282828;border-radius:2px;box-shadow:inset 0 0 0 1px #474747;"></div><div class="t" style="top:686.15px;line-height:8.0px;font-size:6.0px;letter-spacing:-0.180px;color:#e2e2e2;white-space:nowrap;left:897.60px;word-spacing:-0.75px;text-shadow:0 0 1px rgba(0,0,0,0.7),0 0.5px 0.5px rgba(0,0,0,0.6);">Subsurface Radius</div><svg style="position:absolute;left:1004.20px;top:688.10px;" width="5" height="5" viewBox="0 0 5 5"><path d="M1 1.6 L2.5 3.4 L4 1.6" fill="none" stroke="#e0e0e0" stroke-width="0.7" stroke-linecap="round" stroke-linejoin="round" /></svg><div class="t" style="top:698.45px;line-height:8.0px;font-size:6.0px;letter-spacing:-0.180px;color:#e2e2e2;white-space:nowrap;left:894.20px;word-spacing:-0.75px;text-shadow:0 0 1px rgba(0,0,0,0.7),0 0.5px 0.5px rgba(0,0,0,0.6);">Subsurface Color</div><div style="left:943.00px;top:698.10px;width:67.40px;height:9.00px;background:#e7e7e7;border-radius:1.5px;box-shadow:inset 0 0 0 1px #2a2a2a;"></div><div style="left:894.00px;top:709.75px;width:116.40px;height:9.30px;background:#565656;border-radius:2px;box-shadow:inset 0 0 0 1px #444444;"></div><div style="left:894.40px;top:710.25px;width:13.97px;height:8.30px;background:#4772b3;border-radius:1.6px 0 0 1.6px;"></div><div class="t" style="top:710.25px;line-height:8.0px;font-size:6.0px;letter-spacing:-0.180px;color:#e2e2e2;white-space:nowrap;left:901.20px;word-spacing:-0.75px;text-shadow:0 0 1px rgba(0,0,0,0.7),0 0.5px 0.5px rgba(0,0,0,0.6);">Subsurface IOR</div><div class="t" style="top:710.25px;line-height:8.0px;font-size:6.0px;letter-spacing:-0.180px;color:#e2e2e2;white-space:nowrap;right:916.40px;text-align:right;word-spacing:-0.75px;text-shadow:0 0 1px rgba(0,0,0,0.7),0 0.5px 0.5px rgba(0,0,0,0.6);">1.400</div><div style="left:894.00px;top:721.65px;width:116.40px;height:9.30px;background:#565656;border-radius:2px;box-shadow:inset 0 0 0 1px #444444;"></div><div class="t" style="top:722.15px;line-height:8.0px;font-size:6.0px;letter-spacing:-0.180px;color:#e2e2e2;white-space:nowrap;left:901.20px;word-spacing:-0.75px;text-shadow:0 0 1px rgba(0,0,0,0.7),0 0.5px 0.5px rgba(0,0,0,0.6);">Subsurface Anisotropy</div><div class="t" style="top:722.15px;line-height:8.0px;font-size:6.0px;letter-spacing:-0.180px;color:#e2e2e2;white-space:nowrap;right:916.40px;text-align:right;word-spacing:-0.75px;text-shadow:0 0 1px rgba(0,0,0,0.7),0 0.5px 0.5px rgba(0,0,0,0.6);">0.000</div><div style="left:894.00px;top:733.55px;width:116.40px;height:9.30px;background:#565656;border-radius:2px;box-shadow:inset 0 0 0 1px #444444;"></div><div class="t" style="top:734.05px;line-height:8.0px;font-size:6.0px;letter-spacing:-0.180px;color:#e2e2e2;white-space:nowrap;left:901.20px;word-spacing:-0.75px;text-shadow:0 0 1px rgba(0,0,0,0.7),0 0.5px 0.5px rgba(0,0,0,0.6);">Metallic</div><div class="t" style="top:734.05px;line-height:8.0px;font-size:6.0px;letter-spacing:-0.180px;color:#e2e2e2;white-space:nowrap;right:916.40px;text-align:right;word-spacing:-0.75px;text-shadow:0 0 1px rgba(0,0,0,0.7),0 0.5px 0.5px rgba(0,0,0,0.6);">0.000</div><div style="left:894.00px;top:745.45px;width:116.40px;height:9.30px;background:#565656;border-radius:2px;box-shadow:inset 0 0 0 1px #444444;"></div><div style="left:894.40px;top:745.95px;width:57.04px;height:8.30px;background:#4772b3;border-radius:1.6px 0 0 1.6px;"></div><div class="t" style="top:745.95px;line-height:8.0px;font-size:6.0px;letter-spacing:-0.180px;color:#e2e2e2;white-space:nowrap;left:901.20px;word-spacing:-0.75px;text-shadow:0 0 1px rgba(0,0,0,0.7),0 0.5px 0.5px rgba(0,0,0,0.6);">Specular</div><div class="t" style="top:745.95px;line-height:8.0px;font-size:6.0px;letter-spacing:-0.180px;color:#e2e2e2;white-space:nowrap;right:916.40px;text-align:right;word-spacing:-0.75px;text-shadow:0 0 1px rgba(0,0,0,0.7),0 0.5px 0.5px rgba(0,0,0,0.6);">0.500</div><div style="left:894.00px;top:756.65px;width:116.40px;height:9.30px;background:#565656;border-radius:2px;box-shadow:inset 0 0 0 1px #444444;"></div><div class="t" style="top:757.15px;line-height:8.0px;font-size:6.0px;letter-spacing:-0.180px;color:#e2e2e2;white-space:nowrap;left:901.20px;word-spacing:-0.75px;text-shadow:0 0 1px rgba(0,0,0,0.7),0 0.5px 0.5px rgba(0,0,0,0.6);">Specular Tint</div><div class="t" style="top:757.15px;line-height:8.0px;font-size:6.0px;letter-spacing:-0.180px;color:#e2e2e2;white-space:nowrap;right:916.40px;text-align:right;word-spacing:-0.75px;text-shadow:0 0 1px rgba(0,0,0,0.7),0 0.5px 0.5px rgba(0,0,0,0.6);">0.000</div><div style="left:894.00px;top:768.45px;width:116.40px;height:9.30px;background:#565656;border-radius:2px;box-shadow:inset 0 0 0 1px #444444;"></div><div style="left:894.40px;top:768.95px;width:57.04px;height:8.30px;background:#4772b3;border-radius:1.6px 0 0 1.6px;"></div><div class="t" style="top:768.95px;line-height:8.0px;font-size:6.0px;letter-spacing:-0.180px;color:#e2e2e2;white-space:nowrap;left:901.20px;word-spacing:-0.75px;text-shadow:0 0 1px rgba(0,0,0,0.7),0 0.5px 0.5px rgba(0,0,0,0.6);">Roughness</div><div class="t" style="top:768.95px;line-height:8.0px;font-size:6.0px;letter-spacing:-0.180px;color:#e2e2e2;white-space:nowrap;right:916.40px;text-align:right;word-spacing:-0.75px;text-shadow:0 0 1px rgba(0,0,0,0.7),0 0.5px 0.5px rgba(0,0,0,0.6);">0.500</div><div style="left:894.00px;top:780.35px;width:116.40px;height:9.30px;background:#565656;border-radius:2px;box-shadow:inset 0 0 0 1px #444444;"></div><div class="t" style="top:780.85px;line-height:8.0px;font-size:6.0px;letter-spacing:-0.180px;color:#e2e2e2;white-space:nowrap;left:901.20px;word-spacing:-0.75px;text-shadow:0 0 1px rgba(0,0,0,0.7),0 0.5px 0.5px rgba(0,0,0,0.6);">Anisotropic</div><div class="t" style="top:780.85px;line-height:8.0px;font-size:6.0px;letter-spacing:-0.180px;color:#e2e2e2;white-space:nowrap;right:916.40px;text-align:right;word-spacing:-0.75px;text-shadow:0 0 1px rgba(0,0,0,0.7),0 0.5px 0.5px rgba(0,0,0,0.6);">0.000</div><div style="left:894.00px;top:792.35px;width:116.40px;height:9.30px;background:#565656;border-radius:2px;box-shadow:inset 0 0 0 1px #444444;"></div><div class="t" style="top:792.85px;line-height:8.0px;font-size:6.0px;letter-spacing:-0.180px;color:#e2e2e2;white-space:nowrap;left:901.20px;word-spacing:-0.75px;text-shadow:0 0 1px rgba(0,0,0,0.7),0 0.5px 0.5px rgba(0,0,0,0.6);">Anisotropic Rotation</div><div class="t" style="top:792.85px;line-height:8.0px;font-size:6.0px;letter-spacing:-0.180px;color:#e2e2e2;white-space:nowrap;right:916.40px;text-align:right;word-spacing:-0.75px;text-shadow:0 0 1px rgba(0,0,0,0.7),0 0.5px 0.5px rgba(0,0,0,0.6);">0.000</div><div style="left:894.00px;top:804.35px;width:116.40px;height:9.30px;background:#565656;border-radius:2px;box-shadow:inset 0 0 0 1px #444444;"></div><div class="t" style="top:804.85px;line-height:8.0px;font-size:6.0px;letter-spacing:-0.180px;color:#e2e2e2;white-space:nowrap;left:901.20px;word-spacing:-0.75px;text-shadow:0 0 1px rgba(0,0,0,0.7),0 0.5px 0.5px rgba(0,0,0,0.6);">Sheen</div><div class="t" style="top:804.85px;line-height:8.0px;font-size:6.0px;letter-spacing:-0.180px;color:#e2e2e2;white-space:nowrap;right:916.40px;text-align:right;word-spacing:-0.75px;text-shadow:0 0 1px rgba(0,0,0,0.7),0 0.5px 0.5px rgba(0,0,0,0.6);">0.000</div><div style="left:894.00px;top:816.35px;width:116.40px;height:9.30px;background:#565656;border-radius:2px;box-shadow:inset 0 0 0 1px #444444;"></div><div style="left:894.40px;top:816.85px;width:57.04px;height:8.30px;background:#4772b3;border-radius:1.6px 0 0 1.6px;"></div><div class="t" style="top:816.85px;line-height:8.0px;font-size:6.0px;letter-spacing:-0.180px;color:#e2e2e2;white-space:nowrap;left:901.20px;word-spacing:-0.75px;text-shadow:0 0 1px rgba(0,0,0,0.7),0 0.5px 0.5px rgba(0,0,0,0.6);">Sheen Tint</div><div class="t" style="top:816.85px;line-height:8.0px;font-size:6.0px;letter-spacing:-0.180px;color:#e2e2e2;white-space:nowrap;right:916.40px;text-align:right;word-spacing:-0.75px;text-shadow:0 0 1px rgba(0,0,0,0.7),0 0.5px 0.5px rgba(0,0,0,0.6);">0.500</div><div style="left:894.00px;top:827.55px;width:116.40px;height:9.30px;background:#565656;border-radius:2px;box-shadow:inset 0 0 0 1px #444444;"></div><div class="t" style="top:828.05px;line-height:8.0px;font-size:6.0px;letter-spacing:-0.180px;color:#e2e2e2;white-space:nowrap;left:901.20px;word-spacing:-0.75px;text-shadow:0 0 1px rgba(0,0,0,0.7),0 0.5px 0.5px rgba(0,0,0,0.6);">Clearcoat</div><div class="t" style="top:828.05px;line-height:8.0px;font-size:6.0px;letter-spacing:-0.180px;color:#e2e2e2;white-space:nowrap;right:916.40px;text-align:right;word-spacing:-0.75px;text-shadow:0 0 1px rgba(0,0,0,0.7),0 0.5px 0.5px rgba(0,0,0,0.6);">0.000</div><div style="left:894.00px;top:839.35px;width:116.40px;height:9.30px;background:#565656;border-radius:2px;box-shadow:inset 0 0 0 1px #444444;"></div><div style="left:894.40px;top:839.85px;width:1.75px;height:8.30px;background:#4772b3;border-radius:1.6px 0 0 1.6px;"></div><div class="t" style="top:839.85px;line-height:8.0px;font-size:6.0px;letter-spacing:-0.180px;color:#e2e2e2;white-space:nowrap;left:901.20px;word-spacing:-0.75px;text-shadow:0 0 1px rgba(0,0,0,0.7),0 0.5px 0.5px rgba(0,0,0,0.6);">Clearcoat Roughness</div><div class="t" style="top:839.85px;line-height:8.0px;font-size:6.0px;letter-spacing:-0.180px;color:#e2e2e2;white-space:nowrap;right:916.40px;text-align:right;word-spacing:-0.75px;text-shadow:0 0 1px rgba(0,0,0,0.7),0 0.5px 0.5px rgba(0,0,0,0.6);">0.030</div><div style="left:894.00px;top:851.35px;width:116.40px;height:9.30px;background:#565656;border-radius:2px;box-shadow:inset 0 0 0 1px #444444;"></div><div class="t" style="top:851.85px;line-height:8.0px;font-size:6.0px;letter-spacing:-0.180px;color:#e2e2e2;white-space:nowrap;left:901.20px;word-spacing:-0.75px;text-shadow:0 0 1px rgba(0,0,0,0.7),0 0.5px 0.5px rgba(0,0,0,0.6);">IOR</div><div class="t" style="top:851.85px;line-height:8.0px;font-size:6.0px;letter-spacing:-0.180px;color:#e2e2e2;white-space:nowrap;right:916.40px;text-align:right;word-spacing:-0.75px;text-shadow:0 0 1px rgba(0,0,0,0.7),0 0.5px 0.5px rgba(0,0,0,0.6);">1.450</div><div style="left:894.00px;top:863.35px;width:116.40px;height:9.30px;background:#565656;border-radius:2px;box-shadow:inset 0 0 0 1px #444444;"></div><div class="t" style="top:863.85px;line-height:8.0px;font-size:6.0px;letter-spacing:-0.180px;color:#e2e2e2;white-space:nowrap;left:901.20px;word-spacing:-0.75px;text-shadow:0 0 1px rgba(0,0,0,0.7),0 0.5px 0.5px rgba(0,0,0,0.6);">Transmission</div><div class="t" style="top:863.85px;line-height:8.0px;font-size:6.0px;letter-spacing:-0.180px;color:#e2e2e2;white-space:nowrap;right:916.40px;text-align:right;word-spacing:-0.75px;text-shadow:0 0 1px rgba(0,0,0,0.7),0 0.5px 0.5px rgba(0,0,0,0.6);">0.000</div><div style="left:894.00px;top:875.35px;width:116.40px;height:9.30px;background:#565656;border-radius:2px;box-shadow:inset 0 0 0 1px #444444;"></div><div class="t" style="top:875.85px;line-height:8.0px;font-size:6.0px;letter-spacing:-0.180px;color:#e2e2e2;white-space:nowrap;left:901.20px;word-spacing:-0.75px;text-shadow:0 0 1px rgba(0,0,0,0.7),0 0.5px 0.5px rgba(0,0,0,0.6);">Transmission Roughness</div><div class="t" style="top:875.85px;line-height:8.0px;font-size:6.0px;letter-spacing:-0.180px;color:#e2e2e2;white-space:nowrap;right:916.40px;text-align:right;word-spacing:-0.75px;text-shadow:0 0 1px rgba(0,0,0,0.7),0 0.5px 0.5px rgba(0,0,0,0.6);">0.000</div><div class="t" style="top:887.05px;line-height:8.0px;font-size:6.0px;letter-spacing:-0.180px;color:#e2e2e2;white-space:nowrap;left:894.20px;word-spacing:-0.75px;text-shadow:0 0 1px rgba(0,0,0,0.7),0 0.5px 0.5px rgba(0,0,0,0.6);">Emission</div><div style="left:943.00px;top:886.70px;width:67.40px;height:9.00px;background:#000000;border-radius:1.5px;box-shadow:inset 0 0 0 1px #2a2a2a;"></div><div style="left:894.00px;top:898.55px;width:116.40px;height:9.30px;background:#565656;border-radius:2px;box-shadow:inset 0 0 0 1px #444444;"></div><div class="t" style="top:899.05px;line-height:8.0px;font-size:6.0px;letter-spacing:-0.180px;color:#e2e2e2;white-space:nowrap;left:901.20px;word-spacing:-0.75px;text-shadow:0 0 1px rgba(0,0,0,0.7),0 0.5px 0.5px rgba(0,0,0,0.6);">Emission Strength</div><div class="t" style="top:899.05px;line-height:8.0px;font-size:6.0px;letter-spacing:-0.180px;color:#e2e2e2;white-space:nowrap;right:916.40px;text-align:right;word-spacing:-0.75px;text-shadow:0 0 1px rgba(0,0,0,0.7),0 0.5px 0.5px rgba(0,0,0,0.6);">1.000</div><div style="left:894.00px;top:910.65px;width:116.40px;height:9.30px;background:#565656;border-radius:2px;box-shadow:inset 0 0 0 1px #444444;"></div><div style="left:894.40px;top:911.15px;width:115.60px;height:8.30px;background:#4772b3;border-radius:1.6px;"></div><div class="t" style="top:911.15px;line-height:8.0px;font-size:6.0px;letter-spacing:-0.180px;color:#e2e2e2;white-space:nowrap;left:901.20px;word-spacing:-0.75px;text-shadow:0 0 1px rgba(0,0,0,0.7),0 0.5px 0.5px rgba(0,0,0,0.6);">Alpha</div><div class="t" style="top:911.15px;line-height:8.0px;font-size:6.0px;letter-spacing:-0.180px;color:#e2e2e2;white-space:nowrap;right:916.40px;text-align:right;word-spacing:-0.75px;text-shadow:0 0 1px rgba(0,0,0,0.7),0 0.5px 0.5px rgba(0,0,0,0.6);">1.000</div><div class="t" style="top:922.85px;line-height:8.0px;font-size:6.0px;letter-spacing:-0.180px;color:#e2e2e2;white-space:nowrap;left:894.20px;word-spacing:-0.75px;text-shadow:0 0 1px rgba(0,0,0,0.7),0 0.5px 0.5px rgba(0,0,0,0.6);">Normal</div><div class="t" style="top:934.85px;line-height:8.0px;font-size:6.0px;letter-spacing:-0.180px;color:#e2e2e2;white-space:nowrap;left:894.20px;word-spacing:-0.75px;text-shadow:0 0 1px rgba(0,0,0,0.7),0 0.5px 0.5px rgba(0,0,0,0.6);">Clearcoat Normal</div><div class="t" style="top:946.85px;line-height:8.0px;font-size:6.0px;letter-spacing:-0.180px;color:#e2e2e2;white-space:nowrap;left:894.20px;word-spacing:-0.75px;text-shadow:0 0 1px rgba(0,0,0,0.7),0 0.5px 0.5px rgba(0,0,0,0.6);">Tangent</div><div style="left:1044.0px;top:605.8px;width:74.2px;height:64.0px;background:#303030;border-radius:3px;box-shadow:0 1.5px 4px rgba(0,0,0,0.55);overflow:hidden"><div style="left:0.00px;top:0.00px;width:74.20px;height:10.40px;background:#4d1f2b;"></div></div><svg style="position:absolute;left:1049.20px;top:607.80px;" width="6" height="6" viewBox="0 0 6 6"><path d="M1 2 L3 4.4 L5 2" fill="none" stroke="#e0e0e0" stroke-width="0.8" stroke-linecap="round" stroke-linejoin="round" /></svg><div class="t" style="top:605.95px;line-height:8.0px;font-size:6.0px;letter-spacing:-0.180px;color:#e2e2e2;white-space:nowrap;left:1057.00px;word-spacing:-0.75px;text-shadow:0 0 1px rgba(0,0,0,0.7),0 0.5px 0.5px rgba(0,0,0,0.6);">Material Output</div><div style="left:1049.40px;top:619.40px;width:63.40px;height:10.00px;background:#282828;border-radius:2px;box-shadow:inset 0 0 0 1px #474747;"></div><div class="t" style="top:620.25px;line-height:8.0px;font-size:6.0px;letter-spacing:-0.180px;color:#e2e2e2;white-space:nowrap;left:1053.00px;word-spacing:-0.75px;text-shadow:0 0 1px rgba(0,0,0,0.7),0 0.5px 0.5px rgba(0,0,0,0.6);">All</div><svg style="position:absolute;left:1106.60px;top:622.20px;" width="5" height="5" viewBox="0 0 5 5"><path d="M1 1.6 L2.5 3.4 L4 1.6" fill="none" stroke="#e0e0e0" stroke-width="0.7" stroke-linecap="round" stroke-linejoin="round" /></svg><div class="t" style="top:633.25px;line-height:8.0px;font-size:6.0px;letter-spacing:-0.180px;color:#e2e2e2;white-space:nowrap;left:1050.20px;word-spacing:-0.75px;text-shadow:0 0 1px rgba(0,0,0,0.7),0 0.5px 0.5px rgba(0,0,0,0.6);">Surface</div><div class="t" style="top:645.05px;line-height:8.0px;font-size:6.0px;letter-spacing:-0.180px;color:#e2e2e2;white-space:nowrap;left:1050.20px;word-spacing:-0.75px;text-shadow:0 0 1px rgba(0,0,0,0.7),0 0.5px 0.5px rgba(0,0,0,0.6);">Volume</div><div class="t" style="top:656.85px;line-height:8.0px;font-size:6.0px;letter-spacing:-0.180px;color:#e2e2e2;white-space:nowrap;left:1050.20px;word-spacing:-0.75px;text-shadow:0 0 1px rgba(0,0,0,0.7),0 0.5px 0.5px rgba(0,0,0,0.6);">Displacement</div><svg style="position:absolute;left:0;top:0" width="1920" height="980" viewBox="0 0 1920 980"><circle cx="342.1" cy="729.8" r="2.25" fill="#6363c7" stroke="#151515" stroke-width="0.7"/><circle cx="596.3" cy="560.0" r="2.25" fill="#a1a1a1" stroke="#151515" stroke-width="0.7"/><circle cx="596.3" cy="571.9" r="2.25" fill="#c7c729" stroke="#151515" stroke-width="0.7"/><circle cx="521.5" cy="601.0" r="2.25" fill="#6363c7" stroke="#151515" stroke-width="0.7"/><circle cx="521.5" cy="613.2" r="2.25" fill="#a1a1a1" stroke="#151515" stroke-width="0.7"/><circle cx="521.5" cy="625.0" r="2.25" fill="#a1a1a1" stroke="#151515" stroke-width="0.7"/><circle cx="521.5" cy="636.8" r="2.25" fill="#a1a1a1" stroke="#151515" stroke-width="0.7"/><circle cx="521.5" cy="648.6" r="2.25" fill="#a1a1a1" stroke="#151515" stroke-width="0.7"/><circle cx="471.3" cy="819.0" r="2.25" fill="#a1a1a1" stroke="#151515" stroke-width="0.7"/><circle cx="471.3" cy="830.8" r="2.25" fill="#c7c729" stroke="#151515" stroke-width="0.7"/><circle cx="396.8" cy="859.8" r="2.25" fill="#6363c7" stroke="#151515" stroke-width="0.7"/><circle cx="396.8" cy="871.9" r="2.25" fill="#a1a1a1" stroke="#151515" stroke-width="0.7"/><circle cx="396.8" cy="883.7" r="2.25" fill="#a1a1a1" stroke="#151515" stroke-width="0.7"/><circle cx="396.8" cy="895.8" r="2.25" fill="#a1a1a1" stroke="#151515" stroke-width="0.7"/><circle cx="396.8" cy="907.6" r="2.25" fill="#a1a1a1" stroke="#151515" stroke-width="0.7"/><circle cx="595.5" cy="694.9" r="2.25" fill="#c7c729" stroke="#151515" stroke-width="0.7"/><circle cx="595.5" cy="706.9" r="2.25" fill="#a1a1a1" stroke="#151515" stroke-width="0.7"/><circle cx="515.2" cy="770.9" r="2.25" fill="#6363c7" stroke="#151515" stroke-width="0.7"/><circle cx="515.2" cy="783.0" r="2.25" fill="#c7c729" stroke="#151515" stroke-width="0.7"/><circle cx="515.2" cy="794.8" r="2.25" fill="#c7c729" stroke="#151515" stroke-width="0.7"/><circle cx="515.2" cy="806.6" r="2.25" fill="#c7c729" stroke="#151515" stroke-width="0.7"/><circle cx="515.2" cy="818.0" r="2.25" fill="#a1a1a1" stroke="#151515" stroke-width="0.7"/><circle cx="515.2" cy="829.8" r="2.25" fill="#a1a1a1" stroke="#151515" stroke-width="0.7"/><circle cx="515.2" cy="841.9" r="2.25" fill="#a1a1a1" stroke="#151515" stroke-width="0.7"/><circle cx="515.2" cy="853.7" r="2.25" fill="#a1a1a1" stroke="#151515" stroke-width="0.7"/><circle cx="515.2" cy="865.8" r="2.25" fill="#a1a1a1" stroke="#151515" stroke-width="0.7"/><circle cx="515.2" cy="877.0" r="2.25" fill="#a1a1a1" stroke="#151515" stroke-width="0.7"/><circle cx="746.3" cy="633.8" r="2.25" fill="#c7c729" stroke="#151515" stroke-width="0.7"/><circle cx="670.5" cy="703.3" r="2.25" fill="#a1a1a1" stroke="#151515" stroke-width="0.7"/><circle cx="670.5" cy="715.3" r="2.25" fill="#c7c729" stroke="#151515" stroke-width="0.7"/><circle cx="670.5" cy="727.3" r="2.25" fill="#c7c729" stroke="#151515" stroke-width="0.7"/><circle cx="752.4" cy="828.8" r="2.25" fill="#6363c7" stroke="#151515" stroke-width="0.7"/><circle cx="677.5" cy="857.7" r="2.25" fill="#a1a1a1" stroke="#151515" stroke-width="0.7"/><circle cx="677.5" cy="869.9" r="2.25" fill="#a1a1a1" stroke="#151515" stroke-width="0.7"/><circle cx="677.5" cy="881.6" r="2.25" fill="#a1a1a1" stroke="#151515" stroke-width="0.7"/><circle cx="677.5" cy="893.8" r="2.25" fill="#6363c7" stroke="#151515" stroke-width="0.7"/><circle cx="861.5" cy="829.8" r="2.25" fill="#6363c7" stroke="#151515" stroke-width="0.7"/><circle cx="786.6" cy="858.8" r="2.25" fill="#a1a1a1" stroke="#151515" stroke-width="0.7"/><circle cx="786.6" cy="870.9" r="2.25" fill="#a1a1a1" stroke="#151515" stroke-width="0.7"/><circle cx="786.6" cy="882.7" r="2.25" fill="#a1a1a1" stroke="#151515" stroke-width="0.7"/><circle cx="786.6" cy="894.8" r="2.25" fill="#6363c7" stroke="#151515" stroke-width="0.7"/><circle cx="1016.7" cy="623.8" r="2.25" fill="#63c763" stroke="#151515" stroke-width="0.7"/><circle cx="887.5" cy="667.0" r="2.25" fill="#c7c729" stroke="#151515" stroke-width="0.7"/><circle cx="887.5" cy="679.0" r="2.25" fill="#a1a1a1" stroke="#151515" stroke-width="0.7"/><circle cx="887.5" cy="690.3" r="2.25" fill="#6363c7" stroke="#151515" stroke-width="0.7"/><circle cx="887.5" cy="702.6" r="2.25" fill="#c7c729" stroke="#151515" stroke-width="0.7"/><circle cx="887.5" cy="714.4" r="2.25" fill="#a1a1a1" stroke="#151515" stroke-width="0.7"/><circle cx="887.5" cy="726.3" r="2.25" fill="#a1a1a1" stroke="#151515" stroke-width="0.7"/><circle cx="887.5" cy="738.2" r="2.25" fill="#a1a1a1" stroke="#151515" stroke-width="0.7"/><circle cx="887.5" cy="750.1" r="2.25" fill="#a1a1a1" stroke="#151515" stroke-width="0.7"/><circle cx="887.5" cy="761.3" r="2.25" fill="#a1a1a1" stroke="#151515" stroke-width="0.7"/><circle cx="887.5" cy="773.1" r="2.25" fill="#a1a1a1" stroke="#151515" stroke-width="0.7"/><circle cx="887.5" cy="785.0" r="2.25" fill="#a1a1a1" stroke="#151515" stroke-width="0.7"/><circle cx="887.5" cy="797.0" r="2.25" fill="#a1a1a1" stroke="#151515" stroke-width="0.7"/><circle cx="887.5" cy="809.0" r="2.25" fill="#a1a1a1" stroke="#151515" stroke-width="0.7"/><circle cx="887.5" cy="821.0" r="2.25" fill="#a1a1a1" stroke="#151515" stroke-width="0.7"/><circle cx="887.5" cy="832.2" r="2.25" fill="#a1a1a1" stroke="#151515" stroke-width="0.7"/><circle cx="887.5" cy="844.0" r="2.25" fill="#a1a1a1" stroke="#151515" stroke-width="0.7"/><circle cx="887.5" cy="856.0" r="2.25" fill="#a1a1a1" stroke="#151515" stroke-width="0.7"/><circle cx="887.5" cy="868.0" r="2.25" fill="#a1a1a1" stroke="#151515" stroke-width="0.7"/><circle cx="887.5" cy="880.0" r="2.25" fill="#a1a1a1" stroke="#151515" stroke-width="0.7"/><circle cx="887.5" cy="891.2" r="2.25" fill="#c7c729" stroke="#151515" stroke-width="0.7"/><circle cx="887.5" cy="903.2" r="2.25" fill="#a1a1a1" stroke="#151515" stroke-width="0.7"/><circle cx="887.5" cy="915.3" r="2.25" fill="#a1a1a1" stroke="#151515" stroke-width="0.7"/><circle cx="887.5" cy="927.0" r="2.25" fill="#6363c7" stroke="#151515" stroke-width="0.7"/><circle cx="887.5" cy="939.0" r="2.25" fill="#6363c7" stroke="#151515" stroke-width="0.7"/><circle cx="887.5" cy="951.0" r="2.25" fill="#6363c7" stroke="#151515" stroke-width="0.7"/><circle cx="1043.5" cy="637.4" r="2.25" fill="#63c763" stroke="#151515" stroke-width="0.7"/><circle cx="1043.5" cy="649.2" r="2.25" fill="#63c763" stroke="#151515" stroke-width="0.7"/><circle cx="1043.5" cy="661.0" r="2.25" fill="#6363c7" stroke="#151515" stroke-width="0.7"/><circle cx="664.6" cy="767.5" r="2.25" fill="#a1a1a1" stroke="#151515" stroke-width="0.7"/><circle cx="761.9" cy="768.5" r="2.25" fill="#a1a1a1" stroke="#151515" stroke-width="0.7"/></svg></div></div>
<div style="left:301.50px;top:483.40px;width:31.00px;height:19.00px;background:#282828;border-radius:3.5px;box-shadow:inset 0 0 0 1px #3d3d3d;"></div><svg style="position:absolute;left:304.50px;top:485.40px;" width="15" height="15" viewBox="0 0 16 16"><circle cx="8" cy="8" r="6" fill="none" stroke="#e0e0e0" stroke-width="1.2"/><path d="M4.4 6.6 A4 4 0 0 1 6.4 4.4" fill="none" stroke="#e0e0e0" stroke-width="1.4" stroke-linecap="round" stroke-linejoin="round" /><rect x="8.2" y="3.4" width="1.6" height="1.6" fill="#e0e0e0"/></svg><svg style="position:absolute;left:321.00px;top:488.90px;" width="10" height="10" viewBox="0 0 10 10"><path d="M1.7999999999999998 3.6999999999999997 L5 6.8999999999999995 L8.2 3.6999999999999997" fill="none" stroke="#e4e4e4" stroke-width="1.3" stroke-linecap="round" stroke-linejoin="round"/></svg><div style="left:338.50px;top:483.40px;width:88.00px;height:19.00px;background:#282828;border-radius:3.5px;box-shadow:inset 0 0 0 1px #3d3d3d;"></div><svg style="position:absolute;left:342.50px;top:485.40px;" width="15" height="15" viewBox="0 0 16 16"><path d="M2 5 V2 H5 M11 2 H14 V5 M14 11 V14 H11 M5 14 H2 V11" fill="none" stroke="#e0e0e0" stroke-width="1.1" stroke-linecap="round" stroke-linejoin="round" /><path d="M4.6 4.6 h6.8 v6.8 h-6.8z" fill="#e0e0e0" /></svg><div class="t" style="top:484.90px;line-height:16.0px;font-size:12px;letter-spacing:-0.430px;color:#e4e4e4;white-space:nowrap;left:364.00px;">Object</div><svg style="position:absolute;left:413.00px;top:488.90px;" width="10" height="10" viewBox="0 0 10 10"><path d="M1.7999999999999998 3.6999999999999997 L5 6.8999999999999995 L8.2 3.6999999999999997" fill="none" stroke="#e4e4e4" stroke-width="1.3" stroke-linecap="round" stroke-linejoin="round"/></svg><div class="t" style="top:484.90px;line-height:16.0px;font-size:12px;letter-spacing:-0.430px;color:#e4e4e4;white-space:nowrap;left:439.00px;">View</div><div class="t" style="top:484.90px;line-height:16.0px;font-size:12px;letter-spacing:-0.430px;color:#e4e4e4;white-space:nowrap;left:479.00px;">Select</div><div class="t" style="top:484.90px;line-height:16.0px;font-size:12px;letter-spacing:-0.430px;color:#e4e4e4;white-space:nowrap;left:525.00px;">Add</div><div class="t" style="top:484.90px;line-height:16.0px;font-size:12px;letter-spacing:-0.430px;color:#e4e4e4;white-space:nowrap;left:559.00px;">Node</div><div style="left:598.60px;top:486.60px;width:12.80px;height:12.80px;background:#4772b3;border-radius:2.5px;"></div><svg style="position:absolute;left:598.60px;top:486.60px;" width="12.8" height="12.8" viewBox="0 0 12.8 12.8"><path d="M2.8 6.6 L5.4 9.4 L10.2 3.2" fill="none" stroke="#fff" stroke-width="1.7" stroke-linecap="round" stroke-linejoin="round"/></svg><div class="t" style="top:484.90px;line-height:16.0px;font-size:12px;letter-spacing:-0.430px;color:#ffffff;white-space:nowrap;left:615.00px;">Use Nodes</div><div style="left:767.00px;top:483.40px;width:79.80px;height:19.00px;background:#282828;border-radius:3.5px;box-shadow:inset 0 0 0 1px #3d3d3d;"></div><div class="t" style="top:484.90px;line-height:16.0px;font-size:12px;letter-spacing:-0.430px;color:#e4e4e4;white-space:nowrap;left:774.00px;">Slot 1</div><svg style="position:absolute;left:833.50px;top:488.90px;" width="10" height="10" viewBox="0 0 10 10"><path d="M1.7999999999999998 3.6999999999999997 L5 6.8999999999999995 L8.2 3.6999999999999997" fill="none" stroke="#e4e4e4" stroke-width="1.3" stroke-linecap="round" stroke-linejoin="round"/></svg><div style="left:852.00px;top:483.40px;width:211.50px;height:19.00px;background:#282828;border-radius:3.5px;box-shadow:inset 0 0 0 1px #3d3d3d;"></div><svg style="position:absolute;left:855.50px;top:485.40px;" width="15" height="15" viewBox="0 0 16 16"><circle cx="8" cy="8" r="6" fill="none" stroke="#e0e0e0" stroke-width="1.2"/><path d="M8 2 A6 6 0 0 0 2 8 H8 Z M8 8 H14 A6 6 0 0 1 8 14 Z" fill="#e0e0e0" /></svg><svg style="position:absolute;left:871.00px;top:488.90px;" width="10" height="10" viewBox="0 0 10 10"><path d="M1.7999999999999998 3.6999999999999997 L5 6.8999999999999995 L8.2 3.6999999999999997" fill="none" stroke="#e4e4e4" stroke-width="1.3" stroke-linecap="round" stroke-linejoin="round"/></svg><div style="left:883.50px;top:483.40px;width:120.00px;height:19.00px;background:#1d1d1d;box-shadow:inset 0 0 0 1px #3a3a3a;"></div><div class="t" style="top:484.90px;line-height:16.0px;font-size:12px;letter-spacing:-0.430px;color:#e4e4e4;white-space:nowrap;left:890.00px;">Material</div><div style="left:1003.30px;top:483.40px;width:60.20px;height:19.00px;background:#545454;border-radius:0 3.5px 3.5px 0;"></div><div style="left:1023.40px;top:483.40px;width:0.90px;height:19.00px;background:#3d3d3d;"></div><div style="left:1043.40px;top:483.40px;width:0.90px;height:19.00px;background:#3d3d3d;"></div><svg style="position:absolute;left:1005.90px;top:485.40px;" width="15" height="15" viewBox="0 0 16 16"><path d="M8 1.8 C10 3 12 3.2 13.6 3.2 C13.6 8.6 12 12 8 14.4 C4 12 2.4 8.6 2.4 3.2 C4 3.2 6 3 8 1.8 Z" fill="none" stroke="#c8c8c8" stroke-width="1.1" stroke-linecap="round" stroke-linejoin="round" /></svg><svg style="position:absolute;left:1026.10px;top:484.80px;" width="15" height="15" viewBox="0 0 16 16"><path d="M5.6 4.6 V2 H11 L14 5 V11.4 H10.4 M11 2 V5 H14 M2 4.6 H10.4 V14 H2 Z" fill="none" stroke="#e0e0e0" stroke-width="1.1" stroke-linecap="round" stroke-linejoin="round" /></svg><svg style="position:absolute;left:1047.10px;top:486.40px;" width="13" height="13" viewBox="0 0 16 16"><path d="M3.6 3.6 L12.4 12.4 M12.4 3.6 L3.6 12.4" fill="none" stroke="#e0e0e0" stroke-width="1.2" stroke-linecap="round" stroke-linejoin="round" /></svg><svg style="position:absolute;left:1072.00px;top:485.40px;" width="15" height="15" viewBox="0 0 16 16"><path d="M9.6 2 L14 6.4 L12.6 7 L10.4 9.2 L10 12 L4 6 L6.8 5.6 L9 3.4 Z M7 9 L2.4 13.6" fill="none" stroke="#a8a8a8" stroke-width="1" stroke-linecap="round" stroke-linejoin="round" /></svg><div style="left:1456.00px;top:483.40px;width:19.60px;height:19.00px;background:#2a2a2a;border-radius:3.5px;"></div><svg style="position:absolute;left:1458.50px;top:485.40px;" width="15" height="15" viewBox="0 0 16 16"><path d="M8 13 V3.2 M4 7 L8 3 L12 7 M8 13 H12" fill="none" stroke="#5a5a5a" stroke-width="1.2" stroke-linecap="round" stroke-linejoin="round" /></svg><div style="left:1481.00px;top:483.40px;width:52.00px;height:19.00px;background:#282828;border-radius:3.5px;box-shadow:inset 0 0 0 1px #3d3d3d;"></div><div style="left:1481.00px;top:483.40px;width:19.00px;height:19.00px;background:#545454;border-radius:3.5px 0 0 3.5px;"></div><svg style="position:absolute;left:1483.00px;top:485.40px;" width="15" height="15" viewBox="0 0 16 16"><g transform="rotate(40 8 8)"><path d="M3.2 13 V7.2 A4.8 4.8 0 0 1 12.8 7.2 V13 H10 V7.2 A2 2 0 0 0 6 7.2 V13 Z M3.2 10.6 H6 M10 10.6 H12.8" fill="none" stroke="#b8b8b8" stroke-width="1.05" stroke-linecap="round" stroke-linejoin="round" /></g></svg><svg style="position:absolute;left:1503.50px;top:485.40px;" width="15" height="15" viewBox="0 0 16 16"><path d="M6 5 V14 M11 2.6 V14 M2 8.4 H14 M4.6 12.6 H14" fill="none" stroke="#e0e0e0" stroke-width="1.1" stroke-linecap="round" stroke-linejoin="round" /><path d="M1.6 1.6 h4.4 v4.4 h-4.4z" fill="#e0e0e0" /></svg><svg style="position:absolute;left:1520.50px;top:488.90px;" width="10" height="10" viewBox="0 0 10 10"><path d="M1.7999999999999998 3.6999999999999997 L5 6.8999999999999995 L8.2 3.6999999999999997" fill="none" stroke="#e4e4e4" stroke-width="1.3" stroke-linecap="round" stroke-linejoin="round"/></svg><div style="left:1538.00px;top:483.40px;width:39.50px;height:19.00px;background:#282828;border-radius:3.5px;box-shadow:inset 0 0 0 1px #3d3d3d;"></div><div style="left:1538.00px;top:483.40px;width:19.00px;height:19.00px;background:#4772b3;border-radius:3.5px 0 0 3.5px;"></div><svg style="position:absolute;left:1540.00px;top:485.40px;" width="15" height="15" viewBox="0 0 16 16"><circle cx="9.8" cy="6.2" r="4.6" fill="#ffffff"/><circle cx="6.4" cy="9.8" r="4.3" fill="none" stroke="#ffffff" stroke-width="1.2"/></svg><svg style="position:absolute;left:1562.00px;top:488.90px;" width="10" height="10" viewBox="0 0 10 10"><path d="M1.7999999999999998 3.6999999999999997 L5 6.8999999999999995 L8.2 3.6999999999999997" fill="none" stroke="#e4e4e4" stroke-width="1.3" stroke-linecap="round" stroke-linejoin="round"/></svg><svg style="position:absolute;left:311.50px;top:519.50px;" width="15" height="15" viewBox="0 0 16 16"><path d="M2 5 V2 H5 M11 2 H14 V5 M14 11 V14 H11 M5 14 H2 V11" fill="none" stroke="#e0e0e0" stroke-width="1.1" stroke-linecap="round" stroke-linejoin="round" /><path d="M4.6 4.6 h6.8 v6.8 h-6.8z" fill="#e0e0e0" /></svg><div class="t" style="top:519.00px;line-height:16.0px;font-size:12px;letter-spacing:-0.430px;color:#e4e4e4;white-space:nowrap;left:335.00px;">Plane.003</div><svg style="position:absolute;left:401.00px;top:521.50px;" width="8" height="11" viewBox="0 0 8 11"><path d="M2 1.5 L6 5.5 L2 9.5" fill="none" stroke="#d0d0d0" stroke-width="1.1" stroke-linecap="round" stroke-linejoin="round" /></svg><svg style="position:absolute;left:417.50px;top:519.50px;" width="15" height="15" viewBox="0 0 16 16"><path d="M3.4 3.4 H12.6 L8 13 Z" fill="none" stroke="#e0e0e0" stroke-width="1.2" stroke-linecap="round" stroke-linejoin="round" /><rect x="1.8" y="1.8" width="3" height="3" fill="#282828" stroke="#e0e0e0" stroke-width="1"/><rect x="11.2" y="1.8" width="3" height="3" fill="#282828" stroke="#e0e0e0" stroke-width="1"/><rect x="6.5" y="11.4" width="3" height="3" fill="#282828" stroke="#e0e0e0" stroke-width="1"/></svg><div class="t" style="top:519.00px;line-height:16.0px;font-size:12px;letter-spacing:-0.430px;color:#e4e4e4;white-space:nowrap;left:441.00px;">Plane.003</div><svg style="position:absolute;left:506.50px;top:521.50px;" width="8" height="11" viewBox="0 0 8 11"><path d="M2 1.5 L6 5.5 L2 9.5" fill="none" stroke="#d0d0d0" stroke-width="1.1" stroke-linecap="round" stroke-linejoin="round" /></svg><svg style="position:absolute;left:523.50px;top:519.50px;" width="15" height="15" viewBox="0 0 16 16"><circle cx="8" cy="8" r="6" fill="none" stroke="#e0e0e0" stroke-width="1.2"/><path d="M8 2 A6 6 0 0 0 2 8 H8 Z M8 8 H14 A6 6 0 0 1 8 14 Z" fill="#e0e0e0" /></svg><div class="t" style="top:519.00px;line-height:16.0px;font-size:12px;letter-spacing:-0.430px;color:#e4e4e4;white-space:nowrap;left:547.00px;">Material</div><svg style="position:absolute;left:294.50px;top:521.00px;" width="6" height="11" viewBox="0 0 6 11"><path d="M1.5 1.5 L4.5 5.5 L1.5 9.5" fill="none" stroke="#9a9a9a" stroke-width="1" stroke-linecap="round" stroke-linejoin="round" /></svg><svg style="position:absolute;left:1577.00px;top:521.00px;" width="6" height="11" viewBox="0 0 6 11"><path d="M4.5 1.5 L1.5 5.5 L4.5 9.5" fill="none" stroke="#9a9a9a" stroke-width="1" stroke-linecap="round" stroke-linejoin="round" /></svg>
</div>
</body></html>
